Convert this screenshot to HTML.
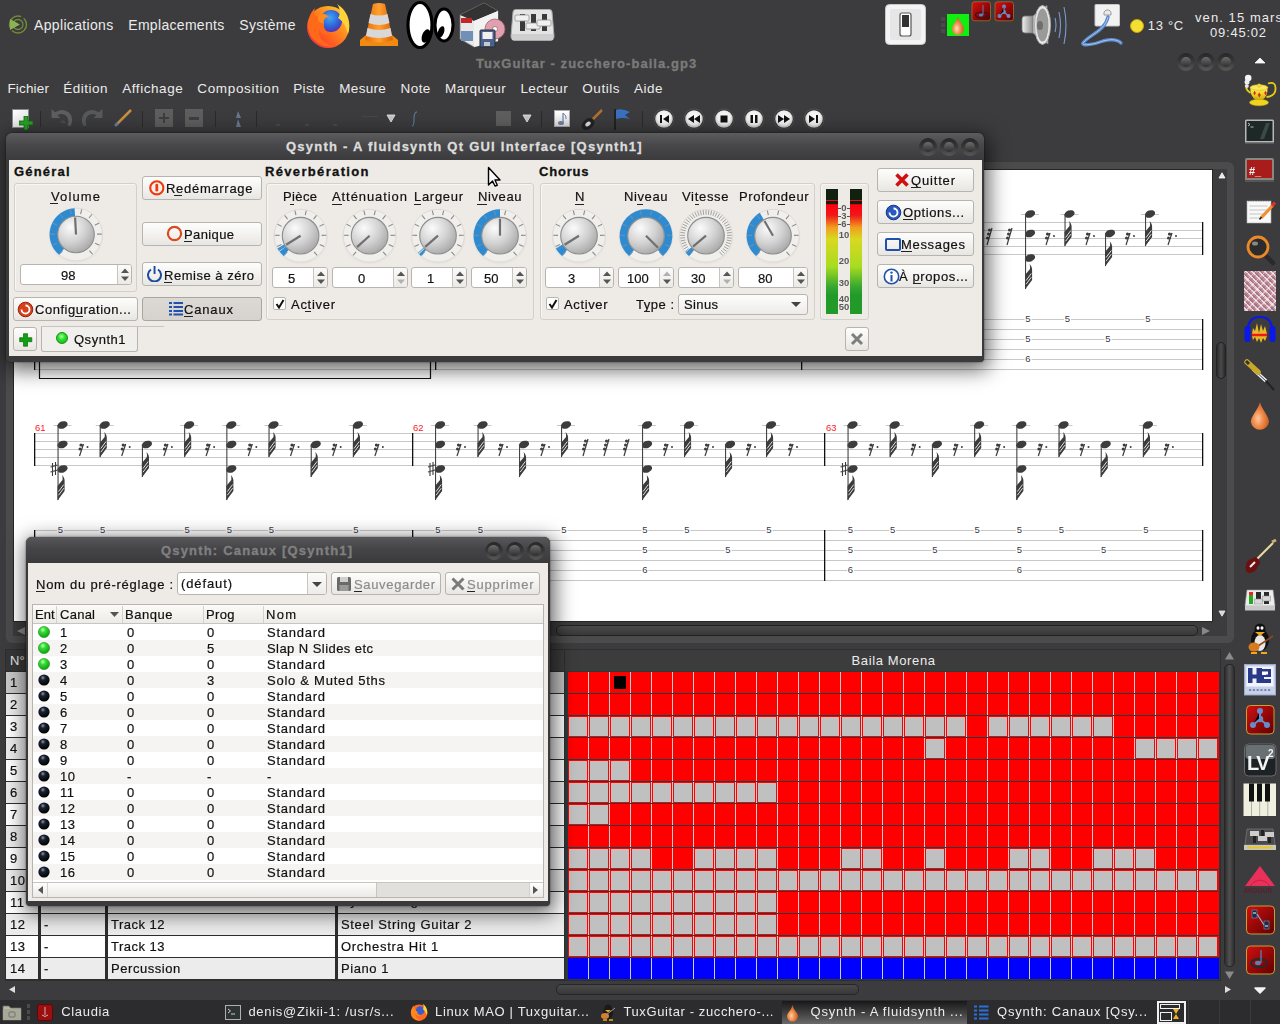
<!DOCTYPE html><html><head><meta charset="utf-8"><style>
*{margin:0;padding:0;box-sizing:border-box}
html,body{width:1280px;height:1024px;overflow:hidden;background:#3c3b3d;font-family:"Liberation Sans",sans-serif}
.a{position:absolute}
.t{position:absolute;white-space:nowrap;line-height:1}
</style></head><body>
<svg class="a" style="left:8px;top:15px" width="20" height="19" viewBox="0 0 20 19"><circle cx="10" cy="9.5" r="8.5" fill="none" stroke="#6f8a3a" stroke-width="1.5" stroke-dasharray="20 3"/><circle cx="10" cy="9.5" r="5" fill="none" stroke="#6f8a3a" stroke-width="1.3"/><path d="M2 4 L12 9.5 L2 15 Z" fill="#8db255"/></svg>
<div class="t" style="left:34px;top:18.15px;font-size:14px;color:#ebebeb;font-weight:400;letter-spacing:0.34px;">Applications</div>
<div class="t" style="left:128.25px;top:18.15px;font-size:14px;color:#ebebeb;font-weight:400;letter-spacing:0.31px;">Emplacements</div>
<div class="t" style="left:239.25px;top:18.15px;font-size:14px;color:#ebebeb;font-weight:400;letter-spacing:0.30px;">Système</div>
<svg class="a" style="left:305px;top:2px" width="46" height="46" viewBox="0 0 46 46">
<defs><linearGradient id="ffo" x1="0" y1="1" x2="1" y2="0"><stop offset="0" stop-color="#e8205a"/><stop offset="0.35" stop-color="#ff5a20"/><stop offset="0.7" stop-color="#ffa020"/><stop offset="1" stop-color="#ffe040"/></linearGradient>
<radialGradient id="ffb" cx="0.45" cy="0.35" r="0.7"><stop offset="0" stop-color="#40a8f0"/><stop offset="0.6" stop-color="#3060d8"/><stop offset="1" stop-color="#5a2ab0"/></radialGradient></defs>
<circle cx="23" cy="25" r="21" fill="url(#ffo)"/>
<circle cx="26" cy="19" r="11" fill="url(#ffb)"/>
<path d="M3 24 C4 38 16 46 28 44 C18 42 12 34 14 26 C16 32 22 35 28 32 C22 31 18 27 19 22 C15 22 12 18 13 14 C10 16 8 12 10 6 C6 10 3 16 3 24Z" fill="#ff6a1a"/>
<path d="M13 14 C16 10 22 12 24 15 C20 15 18 18 19 22 C15 22 12 18 13 14Z" fill="#ff8a20"/>
<path d="M32 2 C42 8 47 20 43 32 C41 24 38 19 33 16 C36 12 35 6 32 2Z" fill="#ffd23a"/>
</svg>
<svg class="a" style="left:358px;top:2px" width="42" height="46" viewBox="0 0 42 46">
<defs><linearGradient id="vl" x1="0" y1="0" x2="1" y2="0"><stop offset="0" stop-color="#e86a00"/><stop offset="0.5" stop-color="#ffa030"/><stop offset="1" stop-color="#e06000"/></linearGradient></defs>
<path d="M2 38 L8 33 L34 33 L40 38 L40 44 L2 44Z" fill="#f08a10"/>
<path d="M15 2 Q21 0 27 2 L35 38 Q21 43 7 38Z" fill="url(#vl)"/>
<path d="M12.5 12 Q21 15 29.5 12 L31.5 21 Q21 25 10.5 21Z" fill="#d8d8d8"/>
<path d="M9.5 26 Q21 30 32.5 26 L34 34 Q21 38 8 34Z" fill="#d8d8d8"/>
</svg>
<svg class="a" style="left:406px;top:0px" width="49" height="50" viewBox="0 0 49 50">
<ellipse cx="14" cy="25" rx="12" ry="22.5" fill="#fff" stroke="#000" stroke-width="3.2"/>
<ellipse cx="38" cy="25" rx="9" ry="16" fill="#fff" stroke="#000" stroke-width="3"/>
<ellipse cx="20" cy="36" rx="4" ry="7" fill="#000" transform="rotate(20 20 36)"/>
<ellipse cx="35" cy="32" rx="3" ry="6" fill="#000" transform="rotate(20 35 32)"/>
</svg>
<svg class="a" style="left:458px;top:1px" width="48" height="47" viewBox="0 0 48 47">
<path d="M2 14 L26 2 L40 10 L40 40 L16 46 L2 38Z" fill="#e8e8e8" stroke="#777" stroke-width="0.8"/>
<path d="M2 14 L26 2 L40 10 L16 20Z" fill="#333"/>
<path d="M16 20 L40 10 L40 40 L16 46Z" fill="#f2f2f2"/>
<rect x="3" y="17" width="11" height="5" fill="#c02828"/>
<rect x="3" y="30" width="12" height="10" fill="#7090b8"/>
<circle cx="37" cy="28" r="10" fill="#e0a0b0" stroke="#a06070" stroke-width="0.8"/>
<circle cx="37" cy="28" r="2.5" fill="#fff" stroke="#805060" stroke-width="0.6"/>
<rect x="22" y="29" width="15" height="17" rx="1" fill="#4a6090" stroke="#233"/>
<rect x="24.5" y="31" width="10" height="7" fill="#f0f0f0"/><rect x="26" y="41" width="6" height="4" fill="#c8c8c8"/>
</svg>
<svg class="a" style="left:510px;top:9px" width="45" height="32" viewBox="0 0 45 32">
<path d="M3 3 Q3 0.5 6 0.5 L39 0.5 Q42 0.5 42 3 L44 27 Q44 31.5 40 31.5 L5 31.5 Q1 31.5 1 27Z" fill="#e4e4e4" stroke="#a8a8a8" stroke-width="1"/>
<rect x="10" y="5" width="5" height="17" fill="#3a3a3a"/><rect x="21" y="5" width="5" height="17" fill="#3a3a3a"/><rect x="32" y="5" width="5" height="17" fill="#3a3a3a"/>
<rect x="5" y="6" width="14" height="6" rx="1" fill="#f0f0f0" stroke="#909090" stroke-width="0.8"/><rect x="16" y="14" width="14" height="6" rx="1" fill="#f0f0f0" stroke="#909090" stroke-width="0.8"/><rect x="27" y="11" width="14" height="6" rx="1" fill="#f0f0f0" stroke="#909090" stroke-width="0.8"/>
<rect x="2" y="25" width="41" height="6" fill="#cfcfcf"/>
</svg>
<svg class="a" style="left:885px;top:4px" width="41" height="41" viewBox="0 0 41 41">
<rect x="0.5" y="0.5" width="40" height="40" rx="4" fill="#f4f4f4" stroke="#c8c8c8"/>
<rect x="5" y="5" width="31" height="31" rx="2" fill="#e6e6e6"/>
<rect x="15" y="9" width="11" height="23" rx="2" fill="#fff" stroke="#555" stroke-width="1.2"/>
<rect x="17" y="11" width="7" height="12" fill="#333"/>
</svg>
<div class="a" style="left:941px;top:17px;width:4px;height:4px;background:#4a4a4a"></div>
<div class="a" style="left:941px;top:23px;width:4px;height:4px;background:#4a4a4a"></div>
<div class="a" style="left:941px;top:29px;width:4px;height:4px;background:#4a4a4a"></div>
<svg class="a" style="left:947px;top:14px" width="22" height="22" viewBox="0 0 22 22"><defs><radialGradient id="pdr" cx="0.4" cy="0.65" r="0.6"><stop offset="0" stop-color="#ffe0c0"/><stop offset="0.45" stop-color="#f4945a"/><stop offset="1" stop-color="#c86024"/></radialGradient></defs><rect width="22" height="22" fill="#10f010"/>
<path d="M11 2.5 C12.5 8 17 11 17 15 A6 6 0 0 1 5 15 C5 11 9.5 8 11 2.5Z" fill="url(#pdr)"/></svg>
<svg class="a" style="left:971px;top:1px" width="44" height="21" viewBox="0 0 44 21"><defs><linearGradient id="prg" x1="0" y1="0" x2="1" y2="1"><stop offset="0" stop-color="#d81010"/><stop offset="1" stop-color="#5a0000"/></linearGradient></defs>
<rect x="1" y="0.8" width="18.5" height="19" rx="2.5" fill="url(#prg)" stroke="#a08030" stroke-width="0.7"/>
<ellipse cx="10.5" cy="14" rx="6" ry="3" fill="none" stroke="#2a1a1a" stroke-width="1.2"/><ellipse cx="10" cy="14" rx="2.2" ry="1.6" fill="#5a80b8"/><path d="M12 4v10" stroke="#5a80b8" stroke-width="1"/>
<rect x="24" y="0.8" width="18.5" height="19" rx="2.5" fill="url(#prg)" stroke="#a08030" stroke-width="0.7"/>
<circle cx="33" cy="5.5" r="2" fill="#6a8ac8"/><circle cx="33" cy="11" r="2" fill="#6a8ac8"/><circle cx="28.5" cy="15" r="2" fill="#6a8ac8"/><circle cx="37.5" cy="15" r="2" fill="#6a8ac8"/><path d="M33 5.5v5.5l-4.5 4M33 11l4.5 4" stroke="#6a8ac8" stroke-width="1.2"/>
</svg>
<svg class="a" style="left:1020px;top:4px" width="50" height="42" viewBox="0 0 50 42"><defs><linearGradient id="spk" x1="0" y1="0" x2="1" y2="0"><stop offset="0" stop-color="#f0f0f0"/><stop offset="1" stop-color="#8a8a8a"/></linearGradient></defs>
<path d="M2 15 Q2 12 5 12 L13 12 L13 29 L5 29 Q2 29 2 26Z" fill="url(#spk)" stroke="#777" stroke-width="0.8"/>
<path d="M13 12 L27 1.5 L28 40 L13 29Z" fill="#c8c8c8" stroke="#888" stroke-width="0.8"/>
<ellipse cx="22.5" cy="21" rx="8" ry="19.5" fill="#e8e8e8" stroke="#aaa" stroke-width="1"/>
<ellipse cx="22.5" cy="21" rx="6" ry="16.5" fill="#9a9a98"/>
<ellipse cx="20" cy="21.5" rx="3" ry="4.5" fill="#6e6e6c"/>
<path d="M35 14 Q37 21 35 28" stroke="#7a9ad0" stroke-width="1.1" fill="none"/>
<path d="M39 8 Q42 21 39 34" stroke="#7a9ad0" stroke-width="1.1" fill="none"/>
<path d="M44 3 Q48 21 44 40" stroke="#7a9ad0" stroke-width="1.1" fill="none"/>
</svg>
<svg class="a" style="left:1079px;top:3px" width="48" height="44" viewBox="0 0 48 44">
<rect x="16" y="1.5" width="24.5" height="21.5" rx="1" fill="#f2f2f2" stroke="#c8c8c8"/>
<path d="M25 12 L25 9 L27 7 L30 7 L32 9 L32 12Z" fill="#e8e8e8" stroke="#888" stroke-width="0.8"/>
<path d="M29 14 C26 28 10 32 4 40 C2 43 14 42 24 38 C32 36 38 36 42 40" stroke="#5a88c8" stroke-width="3.4" fill="none" stroke-linecap="round"/>
<path d="M29 14 C26 28 10 32 4 40 C2 43 14 42 24 38 C32 36 38 36 42 40" stroke="#a8c8f0" stroke-width="1" fill="none"/>
</svg>
<svg class="a" style="left:1130px;top:19px" width="14" height="14" viewBox="0 0 14 14"><circle cx="7" cy="7" r="6.5" fill="#f4e030" stroke="#c8a010" stroke-width="1"/></svg>
<div class="t" style="left:1147.7px;top:19.0px;font-size:13px;color:#ebebeb;font-weight:400;letter-spacing:0.71px;">13 °C</div>
<div class="t" style="left:1195px;top:11.0px;font-size:13px;color:#ebebeb;font-weight:400;letter-spacing:1.08px;">ven. 15 mars</div>
<div class="t" style="left:1210px;top:26.0px;font-size:13px;color:#ebebeb;font-weight:400;letter-spacing:0.77px;">09:45:02</div>
<div class="t" style="left:476px;top:56.81px;font-size:13px;color:#7b7b7b;font-weight:700;letter-spacing:1.05px;-webkit-text-stroke:0.3px #7b7b7b">TuxGuitar - zucchero-baila.gp3</div>
<div class="a" style="left:1177px;top:53px;width:18px;height:18px;border-radius:50%;background:linear-gradient(#262626,#3a3a3a 50%,#5a5a5a)"></div>
<div class="a" style="left:1180.7px;top:56.7px;width:10.6px;height:10.6px;border-radius:50%;background:linear-gradient(#6c6c6c,#2e2e2e)"></div>
<div class="a" style="left:1197px;top:53px;width:18px;height:18px;border-radius:50%;background:linear-gradient(#262626,#3a3a3a 50%,#5a5a5a)"></div>
<div class="a" style="left:1200.7px;top:56.7px;width:10.6px;height:10.6px;border-radius:50%;background:linear-gradient(#6c6c6c,#2e2e2e)"></div>
<div class="a" style="left:1217px;top:53px;width:18px;height:18px;border-radius:50%;background:linear-gradient(#262626,#3a3a3a 50%,#5a5a5a)"></div>
<div class="a" style="left:1220.7px;top:56.7px;width:10.6px;height:10.6px;border-radius:50%;background:linear-gradient(#6c6c6c,#2e2e2e)"></div>
<div class="t" style="left:7.4px;top:81.57px;font-size:13.5px;color:#ececec;font-weight:400;letter-spacing:0.17px;">Fichier</div>
<div class="t" style="left:63.2px;top:81.57px;font-size:13.5px;color:#ececec;font-weight:400;letter-spacing:0.52px;">Édition</div>
<div class="t" style="left:122.2px;top:81.57px;font-size:13.5px;color:#ececec;font-weight:400;letter-spacing:0.56px;">Affichage</div>
<div class="t" style="left:197.3px;top:81.57px;font-size:13.5px;color:#ececec;font-weight:400;letter-spacing:0.66px;">Composition</div>
<div class="t" style="left:293.2px;top:81.57px;font-size:13.5px;color:#ececec;font-weight:400;letter-spacing:0.35px;">Piste</div>
<div class="t" style="left:339.3px;top:81.57px;font-size:13.5px;color:#ececec;font-weight:400;letter-spacing:0.30px;">Mesure</div>
<div class="t" style="left:400.4px;top:81.57px;font-size:13.5px;color:#ececec;font-weight:400;letter-spacing:0.49px;">Note</div>
<div class="t" style="left:445px;top:81.57px;font-size:13.5px;color:#ececec;font-weight:400;letter-spacing:0.43px;">Marqueur</div>
<div class="t" style="left:520.4px;top:81.57px;font-size:13.5px;color:#ececec;font-weight:400;letter-spacing:0.38px;">Lecteur</div>
<div class="t" style="left:582.3px;top:81.57px;font-size:13.5px;color:#ececec;font-weight:400;letter-spacing:0.54px;">Outils</div>
<div class="t" style="left:634.1px;top:81.57px;font-size:13.5px;color:#ececec;font-weight:400;letter-spacing:0.46px;">Aide</div>
<div class="a" style="left:12px;top:109px;width:17px;height:19px;background:linear-gradient(135deg,#fff,#ddd);border:1px solid #888"></div>
<svg class="a" style="left:19px;top:116px" width="14" height="14"><path d="M5 0h4v5h5v4H9v5H5V9H0V5h5z" fill="#2aa02a" stroke="#0a6a0a" stroke-width="0.8"/></svg>
<div class="a" style="left:40px;top:111px;width:1px;height:16px;background:#2a2a2a"></div>
<div class="a" style="left:142px;top:111px;width:1px;height:16px;background:#2a2a2a"></div>
<div class="a" style="left:215px;top:111px;width:1px;height:16px;background:#2a2a2a"></div>
<div class="a" style="left:256px;top:111px;width:1px;height:16px;background:#2a2a2a"></div>
<div class="a" style="left:541px;top:111px;width:1px;height:16px;background:#2a2a2a"></div>
<div class="a" style="left:642px;top:111px;width:1px;height:16px;background:#2a2a2a"></div>
<svg class="a" style="left:51px;top:108px" width="22" height="19"><path d="M0.5 1 L0.5 10 L9.5 10 L6.5 7.2 Q11 4.5 15 7.5 Q19 11.5 16.5 17.5 L19.5 18 Q23.5 10 18 4.5 Q12 -0.5 4.2 4.2 Z" fill="#5e5e5e"/><path d="M9 13.5 Q12 11 14 13.5 L15 16 Q13 15 11 15.5Z" fill="#4a4a4a"/></svg>
<svg class="a" style="left:81px;top:108px" width="22" height="19"><g transform="translate(22 0) scale(-1 1)"><path d="M0.5 1 L0.5 10 L9.5 10 L6.5 7.2 Q11 4.5 15 7.5 Q19 11.5 16.5 17.5 L19.5 18 Q23.5 10 18 4.5 Q12 -0.5 4.2 4.2 Z" fill="#575a5a"/></g></svg>
<svg class="a" style="left:114px;top:108px" width="19" height="19"><path d="M2 17 L17 2" stroke="#c89040" stroke-width="2.5"/><path d="M1 18 L4 15" stroke="#6080b0" stroke-width="2.5"/></svg>
<div class="a" style="left:155px;top:109px;width:18px;height:18px;background:#5e5e5e"></div>
<div class="a" style="left:185px;top:109px;width:18px;height:18px;background:#5e5e5e"></div>
<svg class="a" style="left:158px;top:112px" width="12" height="12"><path d="M5 1h2v4h4v2H7v4H5V7H1V5h4z" fill="#3e3e3e"/></svg>
<div class="a" style="left:189px;top:117px;width:10px;height:3px;background:#3e3e3e"></div>
<svg class="a" style="left:232px;top:110px" width="12" height="18"><path d="M6 1 L9 8 L4 8Z M6 9 L9 17 L4 17Z" fill="#6a7890"/></svg>
<div class="a" style="left:276px;top:124px;width:4px;height:2px;background:#4a4a4a"></div>
<div class="a" style="left:305px;top:124px;width:4px;height:2px;background:#4a4a4a"></div>
<div class="a" style="left:333px;top:124px;width:4px;height:2px;background:#4a4a4a"></div>
<div class="a" style="left:362px;top:116px;width:16px;height:1px;background:#474747"></div>
<svg class="a" style="left:386px;top:114px" width="10" height="9"><path d="M1 1 L9 1 L5 8Z" fill="#c4c4c4" stroke="#e0e0e0" stroke-width="0.9" stroke-linejoin="round"/></svg>
<svg class="a" style="left:522px;top:114px" width="10" height="9"><path d="M1 1 L9 1 L5 8Z" fill="#c4c4c4" stroke="#e0e0e0" stroke-width="0.9" stroke-linejoin="round"/></svg>
<svg class="a" style="left:411px;top:111px" width="8" height="16"><path d="M6 1 Q3 1 3 8 Q3 15 1 15" stroke="#5a7090" stroke-width="1.3" fill="none"/></svg>
<div class="a" style="left:496px;top:111px;width:15px;height:15px;background:#5e5e5e"></div>
<div class="a" style="left:554px;top:110px;width:16px;height:17px;background:linear-gradient(#fff,#ddd);border:1px solid #aaa"></div>
<svg class="a" style="left:555px;top:111px" width="14" height="15"><path d="M8 2 L8 12" stroke="#7080a8" stroke-width="1.2"/><ellipse cx="6" cy="12" rx="3" ry="2" fill="#7080a8"/><path d="M8 2 Q12 5 11 8" stroke="#7080a8" fill="none"/></svg>
<svg class="a" style="left:580px;top:108px" width="24" height="22"><path d="M10 14 L22 2" stroke="#b07030" stroke-width="2.5"/><ellipse cx="8" cy="16" rx="7" ry="5" fill="#222" transform="rotate(-40 8 16)"/><ellipse cx="8" cy="16" rx="3" ry="2" fill="#ddd" transform="rotate(-40 8 16)"/></svg>
<svg class="a" style="left:613px;top:108px" width="18" height="22"><path d="M2 1 L2 22" stroke="#222" stroke-width="2"/><path d="M3 2 Q9 0 17 4 L12 7 L17 11 Q9 9 3 11Z" fill="#3a70c0"/></svg>
<svg class="a" style="left:653px;top:108px" width="22" height="22" viewBox="-1 -1 22 22"><defs><radialGradient id="tb0" cx="0.5" cy="0.45" r="0.55"><stop offset="0" stop-color="#ffffff"/><stop offset="0.7" stop-color="#f0f0f0"/><stop offset="1" stop-color="#b8b8b8"/></radialGradient></defs><circle cx="10" cy="10" r="10.6" fill="#4e4e4e"/><circle cx="10" cy="10" r="9.6" fill="#2e2e2e"/><circle cx="10" cy="10" r="8.8" fill="url(#tb0)"/><path d="M6 6h2v8H6z M15 6 L9 10 L15 14Z" fill="#111"/></svg>
<svg class="a" style="left:683px;top:108px" width="22" height="22" viewBox="-1 -1 22 22"><defs><radialGradient id="tb1" cx="0.5" cy="0.45" r="0.55"><stop offset="0" stop-color="#ffffff"/><stop offset="0.7" stop-color="#f0f0f0"/><stop offset="1" stop-color="#b8b8b8"/></radialGradient></defs><circle cx="10" cy="10" r="10.6" fill="#4e4e4e"/><circle cx="10" cy="10" r="9.6" fill="#2e2e2e"/><circle cx="10" cy="10" r="8.8" fill="url(#tb1)"/><path d="M10 6 L4 10 L10 14Z M16 6 L10 10 L16 14Z" fill="#111"/></svg>
<svg class="a" style="left:713px;top:108px" width="22" height="22" viewBox="-1 -1 22 22"><defs><radialGradient id="tb2" cx="0.5" cy="0.45" r="0.55"><stop offset="0" stop-color="#ffffff"/><stop offset="0.7" stop-color="#f0f0f0"/><stop offset="1" stop-color="#b8b8b8"/></radialGradient></defs><circle cx="10" cy="10" r="10.6" fill="#4e4e4e"/><circle cx="10" cy="10" r="9.6" fill="#2e2e2e"/><circle cx="10" cy="10" r="8.8" fill="url(#tb2)"/><rect x="6.5" y="6.5" width="7" height="7" fill="#111"/></svg>
<svg class="a" style="left:743px;top:108px" width="22" height="22" viewBox="-1 -1 22 22"><defs><radialGradient id="tb3" cx="0.5" cy="0.45" r="0.55"><stop offset="0" stop-color="#ffffff"/><stop offset="0.7" stop-color="#f0f0f0"/><stop offset="1" stop-color="#b8b8b8"/></radialGradient></defs><circle cx="10" cy="10" r="10.6" fill="#4e4e4e"/><circle cx="10" cy="10" r="9.6" fill="#2e2e2e"/><circle cx="10" cy="10" r="8.8" fill="url(#tb3)"/><path d="M6.5 6h2.5v8H6.5z M11 6h2.5v8H11z" fill="#111"/></svg>
<svg class="a" style="left:773px;top:108px" width="22" height="22" viewBox="-1 -1 22 22"><defs><radialGradient id="tb4" cx="0.5" cy="0.45" r="0.55"><stop offset="0" stop-color="#ffffff"/><stop offset="0.7" stop-color="#f0f0f0"/><stop offset="1" stop-color="#b8b8b8"/></radialGradient></defs><circle cx="10" cy="10" r="10.6" fill="#4e4e4e"/><circle cx="10" cy="10" r="9.6" fill="#2e2e2e"/><circle cx="10" cy="10" r="8.8" fill="url(#tb4)"/><path d="M4 6 L10 10 L4 14Z M10 6 L16 10 L10 14Z" fill="#111"/></svg>
<svg class="a" style="left:803px;top:108px" width="22" height="22" viewBox="-1 -1 22 22"><defs><radialGradient id="tb5" cx="0.5" cy="0.45" r="0.55"><stop offset="0" stop-color="#ffffff"/><stop offset="0.7" stop-color="#f0f0f0"/><stop offset="1" stop-color="#b8b8b8"/></radialGradient></defs><circle cx="10" cy="10" r="10.6" fill="#4e4e4e"/><circle cx="10" cy="10" r="9.6" fill="#2e2e2e"/><circle cx="10" cy="10" r="8.8" fill="url(#tb5)"/><path d="M5 6 L11 10 L5 14Z M12 6h2v8h-2z" fill="#111"/></svg>
<div class="a" style="left:6px;top:162px;width:1228px;height:481px;background:#4b4b4b;border-radius:6px"></div>
<div class="a" style="left:13px;top:169px;width:1214px;height:467px;background:#3c3b3d"></div>
<div class="a" style="left:13px;top:169px;width:1200px;height:453px;background:#262626"></div>
<div class="a" style="left:14px;top:170px;width:1198px;height:451px;background:#fff"></div>
<svg class="a" style="left:1218px;top:172px" width="8" height="7"><path d="M1 6 L4 0.8 L7 6Z" fill="#e8e8e8" stroke="#fff" stroke-width="0.8"/></svg>
<svg class="a" style="left:1218px;top:610px" width="8" height="7"><path d="M1 1 L4 6.2 L7 1Z" fill="#d8d8d8" stroke="#eee" stroke-width="0.8"/></svg>
<div class="a" style="left:1216px;top:342px;width:10px;height:37px;border-radius:5px;background:linear-gradient(90deg,#2a2a2a,#4a4a4a 50%,#2a2a2a);border:1px solid #222"></div>
<svg class="a" style="left:16px;top:626px" width="10" height="10"><path d="M9 1 L1 5 L9 9Z" fill="#888"/></svg>
<svg class="a" style="left:1201px;top:626px" width="10" height="10"><path d="M1 1 L9 5 L1 9Z" fill="#888"/></svg>
<div class="a" style="left:556px;top:625px;width:642px;height:11px;border-radius:5px;background:linear-gradient(#4a4a4a,#383838);border:1px solid #222"></div>
<svg class="a" style="left:0;top:0" width="1280" height="1024"><rect x="34" y="433" width="1169" height="1" fill="#c8c8c8"/><rect x="34" y="441" width="1169" height="1" fill="#c8c8c8"/><rect x="34" y="449" width="1169" height="1" fill="#c8c8c8"/><rect x="34" y="457" width="1169" height="1" fill="#c8c8c8"/><rect x="34" y="465" width="1169" height="1" fill="#c8c8c8"/><rect x="34" y="530" width="1169" height="1" fill="#c8c8c8"/><rect x="34" y="540" width="1169" height="1" fill="#c8c8c8"/><rect x="34" y="550" width="1169" height="1" fill="#c8c8c8"/><rect x="34" y="560" width="1169" height="1" fill="#c8c8c8"/><rect x="34" y="570" width="1169" height="1" fill="#c8c8c8"/><rect x="34" y="580" width="1169" height="1" fill="#c8c8c8"/><rect x="34" y="433" width="1.3" height="33" fill="#111"/><rect x="34" y="530" width="1.3" height="51" fill="#111"/><rect x="412" y="433" width="1.3" height="33" fill="#111"/><rect x="412" y="530" width="1.3" height="51" fill="#111"/><rect x="824" y="433" width="1.3" height="33" fill="#111"/><rect x="824" y="530" width="1.3" height="51" fill="#111"/><rect x="1202" y="433" width="1.3" height="33" fill="#111"/><rect x="1202" y="530" width="1.3" height="51" fill="#111"/><rect x="53.5" y="425" width="18" height="1" fill="#c8c8c8"/><ellipse cx="62.5" cy="425" rx="5.3" ry="3.6" transform="rotate(-20 62.5 425)" fill="#3c3c3c"/><ellipse cx="62.5" cy="444.5" rx="5.3" ry="3.6" transform="rotate(-20 62.5 444.5)" fill="#3c3c3c"/><ellipse cx="62.5" cy="469" rx="5.3" ry="3.6" transform="rotate(-20 62.5 469)" fill="#3c3c3c"/><path d="M52.5 463 L52.5 476 M55.5 462 L55.5 475 M50.5 467 L57.5 465 M50.5 472 L57.5 470" stroke="#3c3c3c" stroke-width="1.1"/><rect x="57.5" y="425" width="1.1" height="75" fill="#444"/><path d="M57.5 486 L62.5 480 Q63.0 477 62.0 475 Q65.0 478 64.6 482 L64.6 491 L57.5 500.5Z" fill="#3c3c3c"/><path d="M58.6 491.5 L63.8 484.5 M58.6 495.2 L63.8 488.2" stroke="#fff" stroke-width="0.85"/><rect x="57.0" y="526" width="7" height="8" fill="#fff"/><text x="60.5" y="533.3" font-size="9.5" text-anchor="middle" fill="#3a3a4a" font-family="Liberation Sans">5</text><rect x="57.0" y="546" width="7" height="8" fill="#fff"/><text x="60.5" y="553.3" font-size="9.5" text-anchor="middle" fill="#3a3a4a" font-family="Liberation Sans">5</text><rect x="57.0" y="566" width="7" height="8" fill="#fff"/><text x="60.5" y="573.3" font-size="9.5" text-anchor="middle" fill="#3a3a4a" font-family="Liberation Sans">6</text><path d="M83.5 444 L79.5 456" stroke="#3c3c3c" stroke-width="1.2"/><circle cx="81.0" cy="445" r="1.6" fill="#3c3c3c"/><path d="M80.5 445.5 Q82.5 447 83.5 444" stroke="#3c3c3c" fill="none"/><circle cx="80.0" cy="449" r="1.5" fill="#3c3c3c"/><circle cx="87.5" cy="447" r="1" fill="#3c3c3c"/><rect x="95.7" y="425" width="18" height="1" fill="#c8c8c8"/><ellipse cx="104.7" cy="425" rx="5.3" ry="3.6" transform="rotate(-20 104.7 425)" fill="#3c3c3c"/><rect x="99.7" y="425" width="1.1" height="32" fill="#444"/><path d="M99.7 443 L104.7 437 Q105.2 434 104.2 432 Q107.2 435 106.8 439 L106.8 448 L99.7 457.5Z" fill="#3c3c3c"/><path d="M100.8 448.5 L106.0 441.5 M100.8 452.2 L106.0 445.2" stroke="#fff" stroke-width="0.85"/><rect x="99.2" y="526" width="7" height="8" fill="#fff"/><text x="102.7" y="533.3" font-size="9.5" text-anchor="middle" fill="#3a3a4a" font-family="Liberation Sans">5</text><path d="M125.7 444 L121.7 456" stroke="#3c3c3c" stroke-width="1.2"/><circle cx="123.2" cy="445" r="1.6" fill="#3c3c3c"/><path d="M122.7 445.5 Q124.7 447 125.7 444" stroke="#3c3c3c" fill="none"/><circle cx="122.2" cy="449" r="1.5" fill="#3c3c3c"/><circle cx="129.7" cy="447" r="1" fill="#3c3c3c"/><ellipse cx="146.9" cy="444.5" rx="5.3" ry="3.6" transform="rotate(-20 146.9 444.5)" fill="#3c3c3c"/><rect x="141.9" y="444.5" width="1.1" height="32.5" fill="#444"/><path d="M141.9 463 L146.9 457 Q147.4 454 146.4 452 Q149.4 455 149.0 459 L149.0 468 L141.9 477.5Z" fill="#3c3c3c"/><path d="M143.0 468.5 L148.20000000000002 461.5 M143.0 472.2 L148.20000000000002 465.2" stroke="#fff" stroke-width="0.85"/><rect x="141.4" y="546" width="7" height="8" fill="#fff"/><text x="144.9" y="553.3" font-size="9.5" text-anchor="middle" fill="#3a3a4a" font-family="Liberation Sans">5</text><path d="M167.9 444 L163.9 456" stroke="#3c3c3c" stroke-width="1.2"/><circle cx="165.4" cy="445" r="1.6" fill="#3c3c3c"/><path d="M164.9 445.5 Q166.9 447 167.9 444" stroke="#3c3c3c" fill="none"/><circle cx="164.4" cy="449" r="1.5" fill="#3c3c3c"/><circle cx="171.9" cy="447" r="1" fill="#3c3c3c"/><rect x="180.10000000000002" y="425" width="18" height="1" fill="#c8c8c8"/><ellipse cx="189.10000000000002" cy="425" rx="5.3" ry="3.6" transform="rotate(-20 189.10000000000002 425)" fill="#3c3c3c"/><rect x="184.10000000000002" y="425" width="1.1" height="32" fill="#444"/><path d="M184.10000000000002 443 L189.10000000000002 437 Q189.60000000000002 434 188.60000000000002 432 Q191.60000000000002 435 191.20000000000002 439 L191.20000000000002 448 L184.10000000000002 457.5Z" fill="#3c3c3c"/><path d="M185.20000000000002 448.5 L190.40000000000003 441.5 M185.20000000000002 452.2 L190.40000000000003 445.2" stroke="#fff" stroke-width="0.85"/><rect x="183.60000000000002" y="526" width="7" height="8" fill="#fff"/><text x="187.10000000000002" y="533.3" font-size="9.5" text-anchor="middle" fill="#3a3a4a" font-family="Liberation Sans">5</text><path d="M210.10000000000002 444 L206.10000000000002 456" stroke="#3c3c3c" stroke-width="1.2"/><circle cx="207.60000000000002" cy="445" r="1.6" fill="#3c3c3c"/><path d="M207.10000000000002 445.5 Q209.10000000000002 447 210.10000000000002 444" stroke="#3c3c3c" fill="none"/><circle cx="206.60000000000002" cy="449" r="1.5" fill="#3c3c3c"/><circle cx="214.10000000000002" cy="447" r="1" fill="#3c3c3c"/><rect x="222.3" y="425" width="18" height="1" fill="#c8c8c8"/><ellipse cx="231.3" cy="425" rx="5.3" ry="3.6" transform="rotate(-20 231.3 425)" fill="#3c3c3c"/><ellipse cx="231.3" cy="444.5" rx="5.3" ry="3.6" transform="rotate(-20 231.3 444.5)" fill="#3c3c3c"/><ellipse cx="231.3" cy="469" rx="5.3" ry="3.6" transform="rotate(-20 231.3 469)" fill="#3c3c3c"/><rect x="226.3" y="425" width="1.1" height="75" fill="#444"/><path d="M226.3 486 L231.3 480 Q231.8 477 230.8 475 Q233.8 478 233.4 482 L233.4 491 L226.3 500.5Z" fill="#3c3c3c"/><path d="M227.4 491.5 L232.60000000000002 484.5 M227.4 495.2 L232.60000000000002 488.2" stroke="#fff" stroke-width="0.85"/><rect x="225.8" y="526" width="7" height="8" fill="#fff"/><text x="229.3" y="533.3" font-size="9.5" text-anchor="middle" fill="#3a3a4a" font-family="Liberation Sans">5</text><rect x="225.8" y="546" width="7" height="8" fill="#fff"/><text x="229.3" y="553.3" font-size="9.5" text-anchor="middle" fill="#3a3a4a" font-family="Liberation Sans">5</text><rect x="225.8" y="566" width="7" height="8" fill="#fff"/><text x="229.3" y="573.3" font-size="9.5" text-anchor="middle" fill="#3a3a4a" font-family="Liberation Sans">6</text><path d="M252.3 444 L248.3 456" stroke="#3c3c3c" stroke-width="1.2"/><circle cx="249.8" cy="445" r="1.6" fill="#3c3c3c"/><path d="M249.3 445.5 Q251.3 447 252.3 444" stroke="#3c3c3c" fill="none"/><circle cx="248.8" cy="449" r="1.5" fill="#3c3c3c"/><circle cx="256.3" cy="447" r="1" fill="#3c3c3c"/><rect x="264.5" y="425" width="18" height="1" fill="#c8c8c8"/><ellipse cx="273.5" cy="425" rx="5.3" ry="3.6" transform="rotate(-20 273.5 425)" fill="#3c3c3c"/><rect x="268.5" y="425" width="1.1" height="32" fill="#444"/><path d="M268.5 443 L273.5 437 Q274.0 434 273.0 432 Q276.0 435 275.6 439 L275.6 448 L268.5 457.5Z" fill="#3c3c3c"/><path d="M269.6 448.5 L274.8 441.5 M269.6 452.2 L274.8 445.2" stroke="#fff" stroke-width="0.85"/><rect x="268.0" y="526" width="7" height="8" fill="#fff"/><text x="271.5" y="533.3" font-size="9.5" text-anchor="middle" fill="#3a3a4a" font-family="Liberation Sans">5</text><path d="M294.5 444 L290.5 456" stroke="#3c3c3c" stroke-width="1.2"/><circle cx="292.0" cy="445" r="1.6" fill="#3c3c3c"/><path d="M291.5 445.5 Q293.5 447 294.5 444" stroke="#3c3c3c" fill="none"/><circle cx="291.0" cy="449" r="1.5" fill="#3c3c3c"/><circle cx="298.5" cy="447" r="1" fill="#3c3c3c"/><ellipse cx="315.70000000000005" cy="444.5" rx="5.3" ry="3.6" transform="rotate(-20 315.70000000000005 444.5)" fill="#3c3c3c"/><rect x="310.70000000000005" y="444.5" width="1.1" height="32.5" fill="#444"/><path d="M310.70000000000005 463 L315.70000000000005 457 Q316.20000000000005 454 315.20000000000005 452 Q318.20000000000005 455 317.80000000000007 459 L317.80000000000007 468 L310.70000000000005 477.5Z" fill="#3c3c3c"/><path d="M311.80000000000007 468.5 L317.00000000000006 461.5 M311.80000000000007 472.2 L317.00000000000006 465.2" stroke="#fff" stroke-width="0.85"/><rect x="310.20000000000005" y="546" width="7" height="8" fill="#fff"/><text x="313.70000000000005" y="553.3" font-size="9.5" text-anchor="middle" fill="#3a3a4a" font-family="Liberation Sans">5</text><path d="M336.70000000000005 444 L332.70000000000005 456" stroke="#3c3c3c" stroke-width="1.2"/><circle cx="334.20000000000005" cy="445" r="1.6" fill="#3c3c3c"/><path d="M333.70000000000005 445.5 Q335.70000000000005 447 336.70000000000005 444" stroke="#3c3c3c" fill="none"/><circle cx="333.20000000000005" cy="449" r="1.5" fill="#3c3c3c"/><circle cx="340.70000000000005" cy="447" r="1" fill="#3c3c3c"/><rect x="348.90000000000003" y="425" width="18" height="1" fill="#c8c8c8"/><ellipse cx="357.90000000000003" cy="425" rx="5.3" ry="3.6" transform="rotate(-20 357.90000000000003 425)" fill="#3c3c3c"/><rect x="352.90000000000003" y="425" width="1.1" height="32" fill="#444"/><path d="M352.90000000000003 443 L357.90000000000003 437 Q358.40000000000003 434 357.40000000000003 432 Q360.40000000000003 435 360.00000000000006 439 L360.00000000000006 448 L352.90000000000003 457.5Z" fill="#3c3c3c"/><path d="M354.00000000000006 448.5 L359.20000000000005 441.5 M354.00000000000006 452.2 L359.20000000000005 445.2" stroke="#fff" stroke-width="0.85"/><rect x="352.40000000000003" y="526" width="7" height="8" fill="#fff"/><text x="355.90000000000003" y="533.3" font-size="9.5" text-anchor="middle" fill="#3a3a4a" font-family="Liberation Sans">5</text><path d="M378.90000000000003 444 L374.90000000000003 456" stroke="#3c3c3c" stroke-width="1.2"/><circle cx="376.40000000000003" cy="445" r="1.6" fill="#3c3c3c"/><path d="M375.90000000000003 445.5 Q377.90000000000003 447 378.90000000000003 444" stroke="#3c3c3c" fill="none"/><circle cx="375.40000000000003" cy="449" r="1.5" fill="#3c3c3c"/><circle cx="382.90000000000003" cy="447" r="1" fill="#3c3c3c"/><rect x="431" y="425" width="18" height="1" fill="#c8c8c8"/><ellipse cx="440" cy="425" rx="5.3" ry="3.6" transform="rotate(-20 440 425)" fill="#3c3c3c"/><ellipse cx="440" cy="444.5" rx="5.3" ry="3.6" transform="rotate(-20 440 444.5)" fill="#3c3c3c"/><ellipse cx="440" cy="469" rx="5.3" ry="3.6" transform="rotate(-20 440 469)" fill="#3c3c3c"/><path d="M430 463 L430 476 M433 462 L433 475 M428 467 L435 465 M428 472 L435 470" stroke="#3c3c3c" stroke-width="1.1"/><rect x="435.0" y="425" width="1.1" height="75" fill="#444"/><path d="M435.0 486 L440.0 480 Q440.5 477 439.5 475 Q442.5 478 442.1 482 L442.1 491 L435.0 500.5Z" fill="#3c3c3c"/><path d="M436.1 491.5 L441.3 484.5 M436.1 495.2 L441.3 488.2" stroke="#fff" stroke-width="0.85"/><rect x="434.5" y="526" width="7" height="8" fill="#fff"/><text x="438" y="533.3" font-size="9.5" text-anchor="middle" fill="#3a3a4a" font-family="Liberation Sans">5</text><rect x="434.5" y="546" width="7" height="8" fill="#fff"/><text x="438" y="553.3" font-size="9.5" text-anchor="middle" fill="#3a3a4a" font-family="Liberation Sans">5</text><rect x="434.5" y="566" width="7" height="8" fill="#fff"/><text x="438" y="573.3" font-size="9.5" text-anchor="middle" fill="#3a3a4a" font-family="Liberation Sans">6</text><path d="M461 444 L457 456" stroke="#3c3c3c" stroke-width="1.2"/><circle cx="458.5" cy="445" r="1.6" fill="#3c3c3c"/><path d="M458 445.5 Q460 447 461 444" stroke="#3c3c3c" fill="none"/><circle cx="457.5" cy="449" r="1.5" fill="#3c3c3c"/><circle cx="465" cy="447" r="1" fill="#3c3c3c"/><rect x="473.5" y="425" width="18" height="1" fill="#c8c8c8"/><ellipse cx="482.5" cy="425" rx="5.3" ry="3.6" transform="rotate(-20 482.5 425)" fill="#3c3c3c"/><rect x="477.5" y="425" width="1.1" height="32" fill="#444"/><path d="M477.5 443 L482.5 437 Q483.0 434 482.0 432 Q485.0 435 484.6 439 L484.6 448 L477.5 457.5Z" fill="#3c3c3c"/><path d="M478.6 448.5 L483.8 441.5 M478.6 452.2 L483.8 445.2" stroke="#fff" stroke-width="0.85"/><rect x="477.0" y="526" width="7" height="8" fill="#fff"/><text x="480.5" y="533.3" font-size="9.5" text-anchor="middle" fill="#3a3a4a" font-family="Liberation Sans">5</text><path d="M503 444 L499 456" stroke="#3c3c3c" stroke-width="1.2"/><circle cx="500.5" cy="445" r="1.6" fill="#3c3c3c"/><path d="M500 445.5 Q502 447 503 444" stroke="#3c3c3c" fill="none"/><circle cx="499.5" cy="449" r="1.5" fill="#3c3c3c"/><circle cx="507" cy="447" r="1" fill="#3c3c3c"/><ellipse cx="524" cy="444.5" rx="5.3" ry="3.6" transform="rotate(-20 524 444.5)" fill="#3c3c3c"/><rect x="519.0" y="444.5" width="1.1" height="32.5" fill="#444"/><path d="M519.0 463 L524.0 457 Q524.5 454 523.5 452 Q526.5 455 526.1 459 L526.1 468 L519.0 477.5Z" fill="#3c3c3c"/><path d="M520.1 468.5 L525.3 461.5 M520.1 472.2 L525.3 465.2" stroke="#fff" stroke-width="0.85"/><rect x="518.5" y="546" width="7" height="8" fill="#fff"/><text x="522" y="553.3" font-size="9.5" text-anchor="middle" fill="#3a3a4a" font-family="Liberation Sans">5</text><path d="M545 444 L541 456" stroke="#3c3c3c" stroke-width="1.2"/><circle cx="542.5" cy="445" r="1.6" fill="#3c3c3c"/><path d="M542 445.5 Q544 447 545 444" stroke="#3c3c3c" fill="none"/><circle cx="541.5" cy="449" r="1.5" fill="#3c3c3c"/><circle cx="549" cy="447" r="1" fill="#3c3c3c"/><rect x="557" y="425" width="18" height="1" fill="#c8c8c8"/><ellipse cx="566" cy="425" rx="5.3" ry="3.6" transform="rotate(-20 566 425)" fill="#3c3c3c"/><rect x="561.0" y="425" width="1.1" height="32" fill="#444"/><path d="M561.0 443 L566.0 437 Q566.5 434 565.5 432 Q568.5 435 568.1 439 L568.1 448 L561.0 457.5Z" fill="#3c3c3c"/><path d="M562.1 448.5 L567.3 441.5 M562.1 452.2 L567.3 445.2" stroke="#fff" stroke-width="0.85"/><rect x="560.5" y="526" width="7" height="8" fill="#fff"/><text x="564" y="533.3" font-size="9.5" text-anchor="middle" fill="#3a3a4a" font-family="Liberation Sans">5</text><path d="M588 439 L583 456" stroke="#3c3c3c" stroke-width="1.2"/><circle cx="585.5" cy="441" r="1.5" fill="#3c3c3c"/><circle cx="584.5" cy="445" r="1.5" fill="#3c3c3c"/><circle cx="583.5" cy="449" r="1.5" fill="#3c3c3c"/><path d="M609 439 L604 456" stroke="#3c3c3c" stroke-width="1.2"/><circle cx="606.5" cy="441" r="1.5" fill="#3c3c3c"/><circle cx="605.5" cy="445" r="1.5" fill="#3c3c3c"/><circle cx="604.5" cy="449" r="1.5" fill="#3c3c3c"/><path d="M629 439 L624 456" stroke="#3c3c3c" stroke-width="1.2"/><circle cx="626.5" cy="441" r="1.5" fill="#3c3c3c"/><circle cx="625.5" cy="445" r="1.5" fill="#3c3c3c"/><circle cx="624.5" cy="449" r="1.5" fill="#3c3c3c"/><rect x="638" y="425" width="18" height="1" fill="#c8c8c8"/><ellipse cx="647" cy="425" rx="5.3" ry="3.6" transform="rotate(-20 647 425)" fill="#3c3c3c"/><ellipse cx="647" cy="444.5" rx="5.3" ry="3.6" transform="rotate(-20 647 444.5)" fill="#3c3c3c"/><ellipse cx="647" cy="469" rx="5.3" ry="3.6" transform="rotate(-20 647 469)" fill="#3c3c3c"/><rect x="642.0" y="425" width="1.1" height="75" fill="#444"/><path d="M642.0 486 L647.0 480 Q647.5 477 646.5 475 Q649.5 478 649.1 482 L649.1 491 L642.0 500.5Z" fill="#3c3c3c"/><path d="M643.1 491.5 L648.3 484.5 M643.1 495.2 L648.3 488.2" stroke="#fff" stroke-width="0.85"/><rect x="641.5" y="526" width="7" height="8" fill="#fff"/><text x="645" y="533.3" font-size="9.5" text-anchor="middle" fill="#3a3a4a" font-family="Liberation Sans">5</text><rect x="641.5" y="546" width="7" height="8" fill="#fff"/><text x="645" y="553.3" font-size="9.5" text-anchor="middle" fill="#3a3a4a" font-family="Liberation Sans">5</text><rect x="641.5" y="566" width="7" height="8" fill="#fff"/><text x="645" y="573.3" font-size="9.5" text-anchor="middle" fill="#3a3a4a" font-family="Liberation Sans">6</text><path d="M668 444 L664 456" stroke="#3c3c3c" stroke-width="1.2"/><circle cx="665.5" cy="445" r="1.6" fill="#3c3c3c"/><path d="M665 445.5 Q667 447 668 444" stroke="#3c3c3c" fill="none"/><circle cx="664.5" cy="449" r="1.5" fill="#3c3c3c"/><circle cx="672" cy="447" r="1" fill="#3c3c3c"/><rect x="680" y="425" width="18" height="1" fill="#c8c8c8"/><ellipse cx="689" cy="425" rx="5.3" ry="3.6" transform="rotate(-20 689 425)" fill="#3c3c3c"/><rect x="684.0" y="425" width="1.1" height="32" fill="#444"/><path d="M684.0 443 L689.0 437 Q689.5 434 688.5 432 Q691.5 435 691.1 439 L691.1 448 L684.0 457.5Z" fill="#3c3c3c"/><path d="M685.1 448.5 L690.3 441.5 M685.1 452.2 L690.3 445.2" stroke="#fff" stroke-width="0.85"/><rect x="683.5" y="526" width="7" height="8" fill="#fff"/><text x="687" y="533.3" font-size="9.5" text-anchor="middle" fill="#3a3a4a" font-family="Liberation Sans">5</text><path d="M709 444 L705 456" stroke="#3c3c3c" stroke-width="1.2"/><circle cx="706.5" cy="445" r="1.6" fill="#3c3c3c"/><path d="M706 445.5 Q708 447 709 444" stroke="#3c3c3c" fill="none"/><circle cx="705.5" cy="449" r="1.5" fill="#3c3c3c"/><circle cx="713" cy="447" r="1" fill="#3c3c3c"/><ellipse cx="730" cy="444.5" rx="5.3" ry="3.6" transform="rotate(-20 730 444.5)" fill="#3c3c3c"/><rect x="725.0" y="444.5" width="1.1" height="32.5" fill="#444"/><path d="M725.0 463 L730.0 457 Q730.5 454 729.5 452 Q732.5 455 732.1 459 L732.1 468 L725.0 477.5Z" fill="#3c3c3c"/><path d="M726.1 468.5 L731.3 461.5 M726.1 472.2 L731.3 465.2" stroke="#fff" stroke-width="0.85"/><rect x="724.5" y="546" width="7" height="8" fill="#fff"/><text x="728" y="553.3" font-size="9.5" text-anchor="middle" fill="#3a3a4a" font-family="Liberation Sans">5</text><path d="M751 444 L747 456" stroke="#3c3c3c" stroke-width="1.2"/><circle cx="748.5" cy="445" r="1.6" fill="#3c3c3c"/><path d="M748 445.5 Q750 447 751 444" stroke="#3c3c3c" fill="none"/><circle cx="747.5" cy="449" r="1.5" fill="#3c3c3c"/><circle cx="755" cy="447" r="1" fill="#3c3c3c"/><rect x="762" y="425" width="18" height="1" fill="#c8c8c8"/><ellipse cx="771" cy="425" rx="5.3" ry="3.6" transform="rotate(-20 771 425)" fill="#3c3c3c"/><rect x="766.0" y="425" width="1.1" height="32" fill="#444"/><path d="M766.0 443 L771.0 437 Q771.5 434 770.5 432 Q773.5 435 773.1 439 L773.1 448 L766.0 457.5Z" fill="#3c3c3c"/><path d="M767.1 448.5 L772.3 441.5 M767.1 452.2 L772.3 445.2" stroke="#fff" stroke-width="0.85"/><rect x="765.5" y="526" width="7" height="8" fill="#fff"/><text x="769" y="533.3" font-size="9.5" text-anchor="middle" fill="#3a3a4a" font-family="Liberation Sans">5</text><path d="M793 444 L789 456" stroke="#3c3c3c" stroke-width="1.2"/><circle cx="790.5" cy="445" r="1.6" fill="#3c3c3c"/><path d="M790 445.5 Q792 447 793 444" stroke="#3c3c3c" fill="none"/><circle cx="789.5" cy="449" r="1.5" fill="#3c3c3c"/><circle cx="797" cy="447" r="1" fill="#3c3c3c"/><rect x="843.5" y="425" width="18" height="1" fill="#c8c8c8"/><ellipse cx="852.5" cy="425" rx="5.3" ry="3.6" transform="rotate(-20 852.5 425)" fill="#3c3c3c"/><ellipse cx="852.5" cy="444.5" rx="5.3" ry="3.6" transform="rotate(-20 852.5 444.5)" fill="#3c3c3c"/><ellipse cx="852.5" cy="469" rx="5.3" ry="3.6" transform="rotate(-20 852.5 469)" fill="#3c3c3c"/><path d="M842.5 463 L842.5 476 M845.5 462 L845.5 475 M840.5 467 L847.5 465 M840.5 472 L847.5 470" stroke="#3c3c3c" stroke-width="1.1"/><rect x="847.5" y="425" width="1.1" height="75" fill="#444"/><path d="M847.5 486 L852.5 480 Q853.0 477 852.0 475 Q855.0 478 854.6 482 L854.6 491 L847.5 500.5Z" fill="#3c3c3c"/><path d="M848.6 491.5 L853.8 484.5 M848.6 495.2 L853.8 488.2" stroke="#fff" stroke-width="0.85"/><rect x="847.0" y="526" width="7" height="8" fill="#fff"/><text x="850.5" y="533.3" font-size="9.5" text-anchor="middle" fill="#3a3a4a" font-family="Liberation Sans">5</text><rect x="847.0" y="546" width="7" height="8" fill="#fff"/><text x="850.5" y="553.3" font-size="9.5" text-anchor="middle" fill="#3a3a4a" font-family="Liberation Sans">5</text><rect x="847.0" y="566" width="7" height="8" fill="#fff"/><text x="850.5" y="573.3" font-size="9.5" text-anchor="middle" fill="#3a3a4a" font-family="Liberation Sans">6</text><path d="M873.5 444 L869.5 456" stroke="#3c3c3c" stroke-width="1.2"/><circle cx="871.0" cy="445" r="1.6" fill="#3c3c3c"/><path d="M870.5 445.5 Q872.5 447 873.5 444" stroke="#3c3c3c" fill="none"/><circle cx="870.0" cy="449" r="1.5" fill="#3c3c3c"/><circle cx="877.5" cy="447" r="1" fill="#3c3c3c"/><rect x="885.7" y="425" width="18" height="1" fill="#c8c8c8"/><ellipse cx="894.7" cy="425" rx="5.3" ry="3.6" transform="rotate(-20 894.7 425)" fill="#3c3c3c"/><rect x="889.7" y="425" width="1.1" height="32" fill="#444"/><path d="M889.7 443 L894.7 437 Q895.2 434 894.2 432 Q897.2 435 896.8000000000001 439 L896.8000000000001 448 L889.7 457.5Z" fill="#3c3c3c"/><path d="M890.8000000000001 448.5 L896.0 441.5 M890.8000000000001 452.2 L896.0 445.2" stroke="#fff" stroke-width="0.85"/><rect x="889.2" y="526" width="7" height="8" fill="#fff"/><text x="892.7" y="533.3" font-size="9.5" text-anchor="middle" fill="#3a3a4a" font-family="Liberation Sans">5</text><path d="M915.7 444 L911.7 456" stroke="#3c3c3c" stroke-width="1.2"/><circle cx="913.2" cy="445" r="1.6" fill="#3c3c3c"/><path d="M912.7 445.5 Q914.7 447 915.7 444" stroke="#3c3c3c" fill="none"/><circle cx="912.2" cy="449" r="1.5" fill="#3c3c3c"/><circle cx="919.7" cy="447" r="1" fill="#3c3c3c"/><ellipse cx="936.9" cy="444.5" rx="5.3" ry="3.6" transform="rotate(-20 936.9 444.5)" fill="#3c3c3c"/><rect x="931.9" y="444.5" width="1.1" height="32.5" fill="#444"/><path d="M931.9 463 L936.9 457 Q937.4 454 936.4 452 Q939.4 455 939.0 459 L939.0 468 L931.9 477.5Z" fill="#3c3c3c"/><path d="M933.0 468.5 L938.1999999999999 461.5 M933.0 472.2 L938.1999999999999 465.2" stroke="#fff" stroke-width="0.85"/><rect x="931.4" y="546" width="7" height="8" fill="#fff"/><text x="934.9" y="553.3" font-size="9.5" text-anchor="middle" fill="#3a3a4a" font-family="Liberation Sans">5</text><path d="M957.9 444 L953.9 456" stroke="#3c3c3c" stroke-width="1.2"/><circle cx="955.4" cy="445" r="1.6" fill="#3c3c3c"/><path d="M954.9 445.5 Q956.9 447 957.9 444" stroke="#3c3c3c" fill="none"/><circle cx="954.4" cy="449" r="1.5" fill="#3c3c3c"/><circle cx="961.9" cy="447" r="1" fill="#3c3c3c"/><rect x="970.1" y="425" width="18" height="1" fill="#c8c8c8"/><ellipse cx="979.1" cy="425" rx="5.3" ry="3.6" transform="rotate(-20 979.1 425)" fill="#3c3c3c"/><rect x="974.1" y="425" width="1.1" height="32" fill="#444"/><path d="M974.1 443 L979.1 437 Q979.6 434 978.6 432 Q981.6 435 981.2 439 L981.2 448 L974.1 457.5Z" fill="#3c3c3c"/><path d="M975.2 448.5 L980.4 441.5 M975.2 452.2 L980.4 445.2" stroke="#fff" stroke-width="0.85"/><rect x="973.6" y="526" width="7" height="8" fill="#fff"/><text x="977.1" y="533.3" font-size="9.5" text-anchor="middle" fill="#3a3a4a" font-family="Liberation Sans">5</text><path d="M1000.1 444 L996.1 456" stroke="#3c3c3c" stroke-width="1.2"/><circle cx="997.6" cy="445" r="1.6" fill="#3c3c3c"/><path d="M997.1 445.5 Q999.1 447 1000.1 444" stroke="#3c3c3c" fill="none"/><circle cx="996.6" cy="449" r="1.5" fill="#3c3c3c"/><circle cx="1004.1" cy="447" r="1" fill="#3c3c3c"/><rect x="1012.3" y="425" width="18" height="1" fill="#c8c8c8"/><ellipse cx="1021.3" cy="425" rx="5.3" ry="3.6" transform="rotate(-20 1021.3 425)" fill="#3c3c3c"/><ellipse cx="1021.3" cy="444.5" rx="5.3" ry="3.6" transform="rotate(-20 1021.3 444.5)" fill="#3c3c3c"/><ellipse cx="1021.3" cy="469" rx="5.3" ry="3.6" transform="rotate(-20 1021.3 469)" fill="#3c3c3c"/><rect x="1016.3" y="425" width="1.1" height="75" fill="#444"/><path d="M1016.3 486 L1021.3 480 Q1021.8 477 1020.8 475 Q1023.8 478 1023.4 482 L1023.4 491 L1016.3 500.5Z" fill="#3c3c3c"/><path d="M1017.4 491.5 L1022.5999999999999 484.5 M1017.4 495.2 L1022.5999999999999 488.2" stroke="#fff" stroke-width="0.85"/><rect x="1015.8" y="526" width="7" height="8" fill="#fff"/><text x="1019.3" y="533.3" font-size="9.5" text-anchor="middle" fill="#3a3a4a" font-family="Liberation Sans">5</text><rect x="1015.8" y="546" width="7" height="8" fill="#fff"/><text x="1019.3" y="553.3" font-size="9.5" text-anchor="middle" fill="#3a3a4a" font-family="Liberation Sans">5</text><rect x="1015.8" y="566" width="7" height="8" fill="#fff"/><text x="1019.3" y="573.3" font-size="9.5" text-anchor="middle" fill="#3a3a4a" font-family="Liberation Sans">6</text><path d="M1042.3 444 L1038.3 456" stroke="#3c3c3c" stroke-width="1.2"/><circle cx="1039.8" cy="445" r="1.6" fill="#3c3c3c"/><path d="M1039.3 445.5 Q1041.3 447 1042.3 444" stroke="#3c3c3c" fill="none"/><circle cx="1038.8" cy="449" r="1.5" fill="#3c3c3c"/><circle cx="1046.3" cy="447" r="1" fill="#3c3c3c"/><rect x="1054.5" y="425" width="18" height="1" fill="#c8c8c8"/><ellipse cx="1063.5" cy="425" rx="5.3" ry="3.6" transform="rotate(-20 1063.5 425)" fill="#3c3c3c"/><rect x="1058.5" y="425" width="1.1" height="32" fill="#444"/><path d="M1058.5 443 L1063.5 437 Q1064.0 434 1063.0 432 Q1066.0 435 1065.6 439 L1065.6 448 L1058.5 457.5Z" fill="#3c3c3c"/><path d="M1059.6 448.5 L1064.8 441.5 M1059.6 452.2 L1064.8 445.2" stroke="#fff" stroke-width="0.85"/><rect x="1058.0" y="526" width="7" height="8" fill="#fff"/><text x="1061.5" y="533.3" font-size="9.5" text-anchor="middle" fill="#3a3a4a" font-family="Liberation Sans">5</text><path d="M1084.5 444 L1080.5 456" stroke="#3c3c3c" stroke-width="1.2"/><circle cx="1082.0" cy="445" r="1.6" fill="#3c3c3c"/><path d="M1081.5 445.5 Q1083.5 447 1084.5 444" stroke="#3c3c3c" fill="none"/><circle cx="1081.0" cy="449" r="1.5" fill="#3c3c3c"/><circle cx="1088.5" cy="447" r="1" fill="#3c3c3c"/><ellipse cx="1105.7" cy="444.5" rx="5.3" ry="3.6" transform="rotate(-20 1105.7 444.5)" fill="#3c3c3c"/><rect x="1100.7" y="444.5" width="1.1" height="32.5" fill="#444"/><path d="M1100.7 463 L1105.7 457 Q1106.2 454 1105.2 452 Q1108.2 455 1107.8 459 L1107.8 468 L1100.7 477.5Z" fill="#3c3c3c"/><path d="M1101.8 468.5 L1107.0 461.5 M1101.8 472.2 L1107.0 465.2" stroke="#fff" stroke-width="0.85"/><rect x="1100.2" y="546" width="7" height="8" fill="#fff"/><text x="1103.7" y="553.3" font-size="9.5" text-anchor="middle" fill="#3a3a4a" font-family="Liberation Sans">5</text><path d="M1126.7 444 L1122.7 456" stroke="#3c3c3c" stroke-width="1.2"/><circle cx="1124.2" cy="445" r="1.6" fill="#3c3c3c"/><path d="M1123.7 445.5 Q1125.7 447 1126.7 444" stroke="#3c3c3c" fill="none"/><circle cx="1123.2" cy="449" r="1.5" fill="#3c3c3c"/><circle cx="1130.7" cy="447" r="1" fill="#3c3c3c"/><rect x="1138.9" y="425" width="18" height="1" fill="#c8c8c8"/><ellipse cx="1147.9" cy="425" rx="5.3" ry="3.6" transform="rotate(-20 1147.9 425)" fill="#3c3c3c"/><rect x="1142.9" y="425" width="1.1" height="32" fill="#444"/><path d="M1142.9 443 L1147.9 437 Q1148.4 434 1147.4 432 Q1150.4 435 1150.0 439 L1150.0 448 L1142.9 457.5Z" fill="#3c3c3c"/><path d="M1144.0 448.5 L1149.2 441.5 M1144.0 452.2 L1149.2 445.2" stroke="#fff" stroke-width="0.85"/><rect x="1142.4" y="526" width="7" height="8" fill="#fff"/><text x="1145.9" y="533.3" font-size="9.5" text-anchor="middle" fill="#3a3a4a" font-family="Liberation Sans">5</text><path d="M1168.9 444 L1164.9 456" stroke="#3c3c3c" stroke-width="1.2"/><circle cx="1166.4" cy="445" r="1.6" fill="#3c3c3c"/><path d="M1165.9 445.5 Q1167.9 447 1168.9 444" stroke="#3c3c3c" fill="none"/><circle cx="1165.4" cy="449" r="1.5" fill="#3c3c3c"/><circle cx="1172.9" cy="447" r="1" fill="#3c3c3c"/><text x="35" y="431" font-size="9.5" fill="#ff2020" font-family="Liberation Sans">61</text><text x="413" y="431" font-size="9.5" fill="#ff2020" font-family="Liberation Sans">62</text><text x="826" y="431" font-size="9.5" fill="#ff2020" font-family="Liberation Sans">63</text><rect x="34" y="222" width="1169" height="1" fill="#c8c8c8"/><rect x="34" y="230" width="1169" height="1" fill="#c8c8c8"/><rect x="34" y="238" width="1169" height="1" fill="#c8c8c8"/><rect x="34" y="246" width="1169" height="1" fill="#c8c8c8"/><rect x="34" y="254" width="1169" height="1" fill="#c8c8c8"/><rect x="34" y="319" width="1169" height="1" fill="#c8c8c8"/><rect x="34" y="329" width="1169" height="1" fill="#c8c8c8"/><rect x="34" y="339" width="1169" height="1" fill="#c8c8c8"/><rect x="34" y="349" width="1169" height="1" fill="#c8c8c8"/><rect x="34" y="359" width="1169" height="1" fill="#c8c8c8"/><rect x="34" y="369" width="1169" height="1" fill="#c8c8c8"/><rect x="34" y="222" width="1.3" height="33" fill="#111"/><rect x="34" y="319" width="1.3" height="51" fill="#111"/><rect x="435" y="222" width="1.3" height="33" fill="#111"/><rect x="435" y="319" width="1.3" height="51" fill="#111"/><rect x="801" y="222" width="1.3" height="33" fill="#111"/><rect x="801" y="319" width="1.3" height="51" fill="#111"/><rect x="1202" y="222" width="1.3" height="33" fill="#111"/><rect x="1202" y="319" width="1.3" height="51" fill="#111"/><path d="M992 228 L987 245" stroke="#3c3c3c" stroke-width="1.2"/><circle cx="989.5" cy="230" r="1.5" fill="#3c3c3c"/><circle cx="988.5" cy="234" r="1.5" fill="#3c3c3c"/><circle cx="987.5" cy="238" r="1.5" fill="#3c3c3c"/><path d="M1012 228 L1007 245" stroke="#3c3c3c" stroke-width="1.2"/><circle cx="1009.5" cy="230" r="1.5" fill="#3c3c3c"/><circle cx="1008.5" cy="234" r="1.5" fill="#3c3c3c"/><circle cx="1007.5" cy="238" r="1.5" fill="#3c3c3c"/><rect x="1021" y="214" width="18" height="1" fill="#c8c8c8"/><ellipse cx="1030" cy="214" rx="5.3" ry="3.6" transform="rotate(-20 1030 214)" fill="#3c3c3c"/><ellipse cx="1030" cy="233.5" rx="5.3" ry="3.6" transform="rotate(-20 1030 233.5)" fill="#3c3c3c"/><ellipse cx="1030" cy="258" rx="5.3" ry="3.6" transform="rotate(-20 1030 258)" fill="#3c3c3c"/><rect x="1025.0" y="214" width="1.1" height="75" fill="#444"/><path d="M1025.0 275 L1030.0 269 Q1030.5 266 1029.5 264 Q1032.5 267 1032.1 271 L1032.1 280 L1025.0 289.5Z" fill="#3c3c3c"/><path d="M1026.1 280.5 L1031.3 273.5 M1026.1 284.2 L1031.3 277.2" stroke="#fff" stroke-width="0.85"/><rect x="1024.5" y="315" width="7" height="8" fill="#fff"/><text x="1028" y="322.3" font-size="9.5" text-anchor="middle" fill="#3a3a4a" font-family="Liberation Sans">5</text><rect x="1024.5" y="335" width="7" height="8" fill="#fff"/><text x="1028" y="342.3" font-size="9.5" text-anchor="middle" fill="#3a3a4a" font-family="Liberation Sans">5</text><rect x="1024.5" y="355" width="7" height="8" fill="#fff"/><text x="1028" y="362.3" font-size="9.5" text-anchor="middle" fill="#3a3a4a" font-family="Liberation Sans">6</text><path d="M1050 233 L1046 245" stroke="#3c3c3c" stroke-width="1.2"/><circle cx="1047.5" cy="234" r="1.6" fill="#3c3c3c"/><path d="M1047 234.5 Q1049 236 1050 233" stroke="#3c3c3c" fill="none"/><circle cx="1046.5" cy="238" r="1.5" fill="#3c3c3c"/><circle cx="1054" cy="236" r="1" fill="#3c3c3c"/><rect x="1060.5" y="214" width="18" height="1" fill="#c8c8c8"/><ellipse cx="1069.5" cy="214" rx="5.3" ry="3.6" transform="rotate(-20 1069.5 214)" fill="#3c3c3c"/><rect x="1064.5" y="214" width="1.1" height="32" fill="#444"/><path d="M1064.5 232 L1069.5 226 Q1070.0 223 1069.0 221 Q1072.0 224 1071.6 228 L1071.6 237 L1064.5 246.5Z" fill="#3c3c3c"/><path d="M1065.6 237.5 L1070.8 230.5 M1065.6 241.2 L1070.8 234.2" stroke="#fff" stroke-width="0.85"/><rect x="1064.0" y="315" width="7" height="8" fill="#fff"/><text x="1067.5" y="322.3" font-size="9.5" text-anchor="middle" fill="#3a3a4a" font-family="Liberation Sans">5</text><path d="M1090 233 L1086 245" stroke="#3c3c3c" stroke-width="1.2"/><circle cx="1087.5" cy="234" r="1.6" fill="#3c3c3c"/><path d="M1087 234.5 Q1089 236 1090 233" stroke="#3c3c3c" fill="none"/><circle cx="1086.5" cy="238" r="1.5" fill="#3c3c3c"/><circle cx="1094" cy="236" r="1" fill="#3c3c3c"/><ellipse cx="1110" cy="233.5" rx="5.3" ry="3.6" transform="rotate(-20 1110 233.5)" fill="#3c3c3c"/><rect x="1105.0" y="233.5" width="1.1" height="32.5" fill="#444"/><path d="M1105.0 252 L1110.0 246 Q1110.5 243 1109.5 241 Q1112.5 244 1112.1 248 L1112.1 257 L1105.0 266.5Z" fill="#3c3c3c"/><path d="M1106.1 257.5 L1111.3 250.5 M1106.1 261.2 L1111.3 254.2" stroke="#fff" stroke-width="0.85"/><rect x="1104.5" y="335" width="7" height="8" fill="#fff"/><text x="1108" y="342.3" font-size="9.5" text-anchor="middle" fill="#3a3a4a" font-family="Liberation Sans">5</text><path d="M1130 233 L1126 245" stroke="#3c3c3c" stroke-width="1.2"/><circle cx="1127.5" cy="234" r="1.6" fill="#3c3c3c"/><path d="M1127 234.5 Q1129 236 1130 233" stroke="#3c3c3c" fill="none"/><circle cx="1126.5" cy="238" r="1.5" fill="#3c3c3c"/><circle cx="1134" cy="236" r="1" fill="#3c3c3c"/><rect x="1141" y="214" width="18" height="1" fill="#c8c8c8"/><ellipse cx="1150" cy="214" rx="5.3" ry="3.6" transform="rotate(-20 1150 214)" fill="#3c3c3c"/><rect x="1145.0" y="214" width="1.1" height="32" fill="#444"/><path d="M1145.0 232 L1150.0 226 Q1150.5 223 1149.5 221 Q1152.5 224 1152.1 228 L1152.1 237 L1145.0 246.5Z" fill="#3c3c3c"/><path d="M1146.1 237.5 L1151.3 230.5 M1146.1 241.2 L1151.3 234.2" stroke="#fff" stroke-width="0.85"/><rect x="1144.5" y="315" width="7" height="8" fill="#fff"/><text x="1148" y="322.3" font-size="9.5" text-anchor="middle" fill="#3a3a4a" font-family="Liberation Sans">5</text><path d="M1172 233 L1168 245" stroke="#3c3c3c" stroke-width="1.2"/><circle cx="1169.5" cy="234" r="1.6" fill="#3c3c3c"/><path d="M1169 234.5 Q1171 236 1172 233" stroke="#3c3c3c" fill="none"/><circle cx="1168.5" cy="238" r="1.5" fill="#3c3c3c"/><circle cx="1176" cy="236" r="1" fill="#3c3c3c"/><path d="M39.5 362 L39.5 378.5 L430.5 378.5 L430.5 362" stroke="#111" stroke-width="1.2" fill="none"/></svg>
<div class="a" style="left:5px;top:649px;width:1216px;height:332px;background:#2e2e2e"></div>
<div class="a" style="left:6px;top:650px;width:1214px;height:21px;background:#3c3c3c"></div>
<div class="a" style="left:6px;top:650px;width:33px;height:21px;background:linear-gradient(90deg,#353535,#3c3c3c)"></div>
<div class="a" style="left:38px;top:650px;width:1px;height:21px;background:#2e2e2e"></div>
<div class="a" style="left:564px;top:650px;width:1px;height:21px;background:#2e2e2e"></div>
<div class="t" style="left:10px;top:654.0px;font-size:13px;color:#ececec;font-weight:400;">N°</div>
<div class="t" style="left:851.5px;top:654.0px;font-size:13px;color:#ececec;font-weight:400;letter-spacing:0.63px;">Baila Morena</div>
<div class="a" style="left:6px;top:672px;width:32px;height:21px;background:#c8c8c8"></div>
<div class="a" style="left:41px;top:672px;width:64px;height:21px;background:#c6c6c6"></div>
<div class="a" style="left:108px;top:672px;width:227px;height:21px;background:#c6c6c6"></div>
<div class="a" style="left:338px;top:672px;width:226px;height:21px;background:#c6c6c6"></div>
<div class="t" style="left:9.5px;top:676.0px;font-size:13px;color:#111;font-weight:400;letter-spacing:0.4px;will-change:transform;-webkit-text-stroke:0.2px #111">1</div>
<div class="a" style="left:6px;top:694px;width:32px;height:21px;background:#ececec"></div>
<div class="a" style="left:41px;top:694px;width:64px;height:21px;background:#ececec"></div>
<div class="a" style="left:108px;top:694px;width:227px;height:21px;background:#ececec"></div>
<div class="a" style="left:338px;top:694px;width:226px;height:21px;background:#ececec"></div>
<div class="t" style="left:9.5px;top:698.0px;font-size:13px;color:#111;font-weight:400;letter-spacing:0.4px;will-change:transform;-webkit-text-stroke:0.2px #111">2</div>
<div class="a" style="left:6px;top:716px;width:32px;height:21px;background:#ffffff"></div>
<div class="a" style="left:41px;top:716px;width:64px;height:21px;background:#fff"></div>
<div class="a" style="left:108px;top:716px;width:227px;height:21px;background:#fff"></div>
<div class="a" style="left:338px;top:716px;width:226px;height:21px;background:#fff"></div>
<div class="t" style="left:9.5px;top:720.0px;font-size:13px;color:#111;font-weight:400;letter-spacing:0.4px;will-change:transform;-webkit-text-stroke:0.2px #111">3</div>
<div class="a" style="left:6px;top:738px;width:32px;height:21px;background:#ececec"></div>
<div class="a" style="left:41px;top:738px;width:64px;height:21px;background:#ececec"></div>
<div class="a" style="left:108px;top:738px;width:227px;height:21px;background:#ececec"></div>
<div class="a" style="left:338px;top:738px;width:226px;height:21px;background:#ececec"></div>
<div class="t" style="left:9.5px;top:742.0px;font-size:13px;color:#111;font-weight:400;letter-spacing:0.4px;will-change:transform;-webkit-text-stroke:0.2px #111">4</div>
<div class="a" style="left:6px;top:760px;width:32px;height:21px;background:#ffffff"></div>
<div class="a" style="left:41px;top:760px;width:64px;height:21px;background:#fff"></div>
<div class="a" style="left:108px;top:760px;width:227px;height:21px;background:#fff"></div>
<div class="a" style="left:338px;top:760px;width:226px;height:21px;background:#fff"></div>
<div class="t" style="left:9.5px;top:764.0px;font-size:13px;color:#111;font-weight:400;letter-spacing:0.4px;will-change:transform;-webkit-text-stroke:0.2px #111">5</div>
<div class="a" style="left:6px;top:782px;width:32px;height:21px;background:#ececec"></div>
<div class="a" style="left:41px;top:782px;width:64px;height:21px;background:#ececec"></div>
<div class="a" style="left:108px;top:782px;width:227px;height:21px;background:#ececec"></div>
<div class="a" style="left:338px;top:782px;width:226px;height:21px;background:#ececec"></div>
<div class="t" style="left:9.5px;top:786.0px;font-size:13px;color:#111;font-weight:400;letter-spacing:0.4px;will-change:transform;-webkit-text-stroke:0.2px #111">6</div>
<div class="a" style="left:6px;top:804px;width:32px;height:21px;background:#ffffff"></div>
<div class="a" style="left:41px;top:804px;width:64px;height:21px;background:#fff"></div>
<div class="a" style="left:108px;top:804px;width:227px;height:21px;background:#fff"></div>
<div class="a" style="left:338px;top:804px;width:226px;height:21px;background:#fff"></div>
<div class="t" style="left:9.5px;top:808.0px;font-size:13px;color:#111;font-weight:400;letter-spacing:0.4px;will-change:transform;-webkit-text-stroke:0.2px #111">7</div>
<div class="a" style="left:6px;top:826px;width:32px;height:21px;background:#ececec"></div>
<div class="a" style="left:41px;top:826px;width:64px;height:21px;background:#ececec"></div>
<div class="a" style="left:108px;top:826px;width:227px;height:21px;background:#ececec"></div>
<div class="a" style="left:338px;top:826px;width:226px;height:21px;background:#ececec"></div>
<div class="t" style="left:9.5px;top:830.0px;font-size:13px;color:#111;font-weight:400;letter-spacing:0.4px;will-change:transform;-webkit-text-stroke:0.2px #111">8</div>
<div class="a" style="left:6px;top:848px;width:32px;height:21px;background:#ffffff"></div>
<div class="a" style="left:41px;top:848px;width:64px;height:21px;background:#fff"></div>
<div class="a" style="left:108px;top:848px;width:227px;height:21px;background:#fff"></div>
<div class="a" style="left:338px;top:848px;width:226px;height:21px;background:#fff"></div>
<div class="t" style="left:9.5px;top:852.0px;font-size:13px;color:#111;font-weight:400;letter-spacing:0.4px;will-change:transform;-webkit-text-stroke:0.2px #111">9</div>
<div class="a" style="left:6px;top:870px;width:32px;height:21px;background:#ececec"></div>
<div class="a" style="left:41px;top:870px;width:64px;height:21px;background:#ececec"></div>
<div class="a" style="left:108px;top:870px;width:227px;height:21px;background:#ececec"></div>
<div class="a" style="left:338px;top:870px;width:226px;height:21px;background:#ececec"></div>
<div class="t" style="left:9.5px;top:874.0px;font-size:13px;color:#111;font-weight:400;letter-spacing:0.4px;will-change:transform;-webkit-text-stroke:0.2px #111">10</div>
<div class="a" style="left:6px;top:892px;width:32px;height:21px;background:#ffffff"></div>
<div class="a" style="left:41px;top:892px;width:64px;height:21px;background:#fff"></div>
<div class="a" style="left:108px;top:892px;width:227px;height:21px;background:#fff"></div>
<div class="a" style="left:338px;top:892px;width:226px;height:21px;background:#fff"></div>
<div class="t" style="left:9.5px;top:896.0px;font-size:13px;color:#111;font-weight:400;letter-spacing:0.4px;will-change:transform;-webkit-text-stroke:0.2px #111">11</div>
<div class="t" style="left:44.4px;top:896.0px;font-size:13px;color:#111;font-weight:400;;will-change:transform;-webkit-text-stroke:0.2px #111">-</div>
<div class="t" style="left:111px;top:894.0px;font-size:13px;color:#111;font-weight:400;letter-spacing:0.63px;;will-change:transform;-webkit-text-stroke:0.2px #111">Track 11</div>
<div class="t" style="left:340.7px;top:894.0px;font-size:13px;color:#111;font-weight:400;letter-spacing:0.56px;;will-change:transform;-webkit-text-stroke:0.2px #111">Synth Strings 1</div>
<div class="a" style="left:6px;top:914px;width:32px;height:21px;background:#ececec"></div>
<div class="a" style="left:41px;top:914px;width:64px;height:21px;background:#ececec"></div>
<div class="a" style="left:108px;top:914px;width:227px;height:21px;background:#ececec"></div>
<div class="a" style="left:338px;top:914px;width:226px;height:21px;background:#ececec"></div>
<div class="t" style="left:9.5px;top:918.0px;font-size:13px;color:#111;font-weight:400;letter-spacing:0.4px;will-change:transform;-webkit-text-stroke:0.2px #111">12</div>
<div class="t" style="left:44.4px;top:918.0px;font-size:13px;color:#111;font-weight:400;;will-change:transform;-webkit-text-stroke:0.2px #111">-</div>
<div class="t" style="left:111px;top:918.0px;font-size:13px;color:#111;font-weight:400;letter-spacing:0.49px;;will-change:transform;-webkit-text-stroke:0.2px #111">Track 12</div>
<div class="t" style="left:340.7px;top:918.0px;font-size:13px;color:#111;font-weight:400;letter-spacing:0.67px;;will-change:transform;-webkit-text-stroke:0.2px #111">Steel String Guitar 2</div>
<div class="a" style="left:6px;top:936px;width:32px;height:21px;background:#ffffff"></div>
<div class="a" style="left:41px;top:936px;width:64px;height:21px;background:#fff"></div>
<div class="a" style="left:108px;top:936px;width:227px;height:21px;background:#fff"></div>
<div class="a" style="left:338px;top:936px;width:226px;height:21px;background:#fff"></div>
<div class="t" style="left:9.5px;top:940.0px;font-size:13px;color:#111;font-weight:400;letter-spacing:0.4px;will-change:transform;-webkit-text-stroke:0.2px #111">13</div>
<div class="t" style="left:44.4px;top:940.0px;font-size:13px;color:#111;font-weight:400;;will-change:transform;-webkit-text-stroke:0.2px #111">-</div>
<div class="t" style="left:111px;top:940.0px;font-size:13px;color:#111;font-weight:400;letter-spacing:0.49px;;will-change:transform;-webkit-text-stroke:0.2px #111">Track 13</div>
<div class="t" style="left:340.7px;top:940.0px;font-size:13px;color:#111;font-weight:400;letter-spacing:0.71px;;will-change:transform;-webkit-text-stroke:0.2px #111">Orchestra Hit 1</div>
<div class="a" style="left:6px;top:958px;width:32px;height:21px;background:#ececec"></div>
<div class="a" style="left:41px;top:958px;width:64px;height:21px;background:#ececec"></div>
<div class="a" style="left:108px;top:958px;width:227px;height:21px;background:#ececec"></div>
<div class="a" style="left:338px;top:958px;width:226px;height:21px;background:#ececec"></div>
<div class="t" style="left:9.5px;top:962.0px;font-size:13px;color:#111;font-weight:400;letter-spacing:0.4px;will-change:transform;-webkit-text-stroke:0.2px #111">14</div>
<div class="t" style="left:44.4px;top:962.0px;font-size:13px;color:#111;font-weight:400;;will-change:transform;-webkit-text-stroke:0.2px #111">-</div>
<div class="t" style="left:111px;top:962.0px;font-size:13px;color:#111;font-weight:400;letter-spacing:0.55px;;will-change:transform;-webkit-text-stroke:0.2px #111">Percussion</div>
<div class="t" style="left:340.7px;top:962.0px;font-size:13px;color:#111;font-weight:400;letter-spacing:0.58px;;will-change:transform;-webkit-text-stroke:0.2px #111">Piano 1</div>
<div class="a" style="left:565px;top:671px;width:655px;height:309px;background:#2f393b"></div>
<svg class="a" style="left:0;top:0" width="1280" height="1024"><rect x="568" y="672" width="20" height="21" fill="#ff0000"/><rect x="589" y="672" width="20" height="21" fill="#ff0000"/><rect x="610" y="672" width="20" height="21" fill="#ff0000"/><rect x="631" y="672" width="20" height="21" fill="#ff0000"/><rect x="652" y="672" width="20" height="21" fill="#ff0000"/><rect x="673" y="672" width="20" height="21" fill="#ff0000"/><rect x="694" y="672" width="20" height="21" fill="#ff0000"/><rect x="715" y="672" width="20" height="21" fill="#ff0000"/><rect x="736" y="672" width="20" height="21" fill="#ff0000"/><rect x="757" y="672" width="20" height="21" fill="#ff0000"/><rect x="778" y="672" width="20" height="21" fill="#ff0000"/><rect x="799" y="672" width="20" height="21" fill="#ff0000"/><rect x="820" y="672" width="20" height="21" fill="#ff0000"/><rect x="841" y="672" width="20" height="21" fill="#ff0000"/><rect x="862" y="672" width="20" height="21" fill="#ff0000"/><rect x="883" y="672" width="20" height="21" fill="#ff0000"/><rect x="904" y="672" width="20" height="21" fill="#ff0000"/><rect x="925" y="672" width="20" height="21" fill="#ff0000"/><rect x="946" y="672" width="20" height="21" fill="#ff0000"/><rect x="967" y="672" width="20" height="21" fill="#ff0000"/><rect x="988" y="672" width="20" height="21" fill="#ff0000"/><rect x="1009" y="672" width="20" height="21" fill="#ff0000"/><rect x="1030" y="672" width="20" height="21" fill="#ff0000"/><rect x="1051" y="672" width="20" height="21" fill="#ff0000"/><rect x="1072" y="672" width="20" height="21" fill="#ff0000"/><rect x="1093" y="672" width="20" height="21" fill="#ff0000"/><rect x="1114" y="672" width="20" height="21" fill="#ff0000"/><rect x="1135" y="672" width="20" height="21" fill="#ff0000"/><rect x="1156" y="672" width="20" height="21" fill="#ff0000"/><rect x="1177" y="672" width="20" height="21" fill="#ff0000"/><rect x="1198" y="672" width="21" height="21" fill="#ff0000"/><rect x="588" y="672" width="1" height="21" fill="#d0d0d0"/><rect x="609" y="672" width="1" height="21" fill="#d0d0d0"/><rect x="630" y="672" width="1" height="21" fill="#d0d0d0"/><rect x="651" y="672" width="1" height="21" fill="#d0d0d0"/><rect x="672" y="672" width="1" height="21" fill="#d0d0d0"/><rect x="693" y="672" width="1" height="21" fill="#d0d0d0"/><rect x="714" y="672" width="1" height="21" fill="#d0d0d0"/><rect x="735" y="672" width="1" height="21" fill="#d0d0d0"/><rect x="756" y="672" width="1" height="21" fill="#d0d0d0"/><rect x="777" y="672" width="1" height="21" fill="#d0d0d0"/><rect x="798" y="672" width="1" height="21" fill="#d0d0d0"/><rect x="819" y="672" width="1" height="21" fill="#d0d0d0"/><rect x="840" y="672" width="1" height="21" fill="#d0d0d0"/><rect x="861" y="672" width="1" height="21" fill="#d0d0d0"/><rect x="882" y="672" width="1" height="21" fill="#d0d0d0"/><rect x="903" y="672" width="1" height="21" fill="#d0d0d0"/><rect x="924" y="672" width="1" height="21" fill="#d0d0d0"/><rect x="945" y="672" width="1" height="21" fill="#d0d0d0"/><rect x="966" y="672" width="1" height="21" fill="#d0d0d0"/><rect x="987" y="672" width="1" height="21" fill="#d0d0d0"/><rect x="1008" y="672" width="1" height="21" fill="#d0d0d0"/><rect x="1029" y="672" width="1" height="21" fill="#d0d0d0"/><rect x="1050" y="672" width="1" height="21" fill="#d0d0d0"/><rect x="1071" y="672" width="1" height="21" fill="#d0d0d0"/><rect x="1092" y="672" width="1" height="21" fill="#d0d0d0"/><rect x="1113" y="672" width="1" height="21" fill="#d0d0d0"/><rect x="1134" y="672" width="1" height="21" fill="#d0d0d0"/><rect x="1155" y="672" width="1" height="21" fill="#d0d0d0"/><rect x="1176" y="672" width="1" height="21" fill="#d0d0d0"/><rect x="1197" y="672" width="1" height="21" fill="#d0d0d0"/><rect x="568" y="694" width="20" height="21" fill="#ff0000"/><rect x="589" y="694" width="20" height="21" fill="#ff0000"/><rect x="610" y="694" width="20" height="21" fill="#ff0000"/><rect x="631" y="694" width="20" height="21" fill="#ff0000"/><rect x="652" y="694" width="20" height="21" fill="#ff0000"/><rect x="673" y="694" width="20" height="21" fill="#ff0000"/><rect x="694" y="694" width="20" height="21" fill="#ff0000"/><rect x="715" y="694" width="20" height="21" fill="#ff0000"/><rect x="736" y="694" width="20" height="21" fill="#ff0000"/><rect x="757" y="694" width="20" height="21" fill="#ff0000"/><rect x="778" y="694" width="20" height="21" fill="#ff0000"/><rect x="799" y="694" width="20" height="21" fill="#ff0000"/><rect x="820" y="694" width="20" height="21" fill="#ff0000"/><rect x="841" y="694" width="20" height="21" fill="#ff0000"/><rect x="862" y="694" width="20" height="21" fill="#ff0000"/><rect x="883" y="694" width="20" height="21" fill="#ff0000"/><rect x="904" y="694" width="20" height="21" fill="#ff0000"/><rect x="925" y="694" width="20" height="21" fill="#ff0000"/><rect x="946" y="694" width="20" height="21" fill="#ff0000"/><rect x="967" y="694" width="20" height="21" fill="#ff0000"/><rect x="988" y="694" width="20" height="21" fill="#ff0000"/><rect x="1009" y="694" width="20" height="21" fill="#ff0000"/><rect x="1030" y="694" width="20" height="21" fill="#ff0000"/><rect x="1051" y="694" width="20" height="21" fill="#ff0000"/><rect x="1072" y="694" width="20" height="21" fill="#ff0000"/><rect x="1093" y="694" width="20" height="21" fill="#ff0000"/><rect x="1114" y="694" width="20" height="21" fill="#ff0000"/><rect x="1135" y="694" width="20" height="21" fill="#ff0000"/><rect x="1156" y="694" width="20" height="21" fill="#ff0000"/><rect x="1177" y="694" width="20" height="21" fill="#ff0000"/><rect x="1198" y="694" width="21" height="21" fill="#ff0000"/><rect x="588" y="694" width="1" height="21" fill="#d0d0d0"/><rect x="609" y="694" width="1" height="21" fill="#d0d0d0"/><rect x="630" y="694" width="1" height="21" fill="#d0d0d0"/><rect x="651" y="694" width="1" height="21" fill="#d0d0d0"/><rect x="672" y="694" width="1" height="21" fill="#d0d0d0"/><rect x="693" y="694" width="1" height="21" fill="#d0d0d0"/><rect x="714" y="694" width="1" height="21" fill="#d0d0d0"/><rect x="735" y="694" width="1" height="21" fill="#d0d0d0"/><rect x="756" y="694" width="1" height="21" fill="#d0d0d0"/><rect x="777" y="694" width="1" height="21" fill="#d0d0d0"/><rect x="798" y="694" width="1" height="21" fill="#d0d0d0"/><rect x="819" y="694" width="1" height="21" fill="#d0d0d0"/><rect x="840" y="694" width="1" height="21" fill="#d0d0d0"/><rect x="861" y="694" width="1" height="21" fill="#d0d0d0"/><rect x="882" y="694" width="1" height="21" fill="#d0d0d0"/><rect x="903" y="694" width="1" height="21" fill="#d0d0d0"/><rect x="924" y="694" width="1" height="21" fill="#d0d0d0"/><rect x="945" y="694" width="1" height="21" fill="#d0d0d0"/><rect x="966" y="694" width="1" height="21" fill="#d0d0d0"/><rect x="987" y="694" width="1" height="21" fill="#d0d0d0"/><rect x="1008" y="694" width="1" height="21" fill="#d0d0d0"/><rect x="1029" y="694" width="1" height="21" fill="#d0d0d0"/><rect x="1050" y="694" width="1" height="21" fill="#d0d0d0"/><rect x="1071" y="694" width="1" height="21" fill="#d0d0d0"/><rect x="1092" y="694" width="1" height="21" fill="#d0d0d0"/><rect x="1113" y="694" width="1" height="21" fill="#d0d0d0"/><rect x="1134" y="694" width="1" height="21" fill="#d0d0d0"/><rect x="1155" y="694" width="1" height="21" fill="#d0d0d0"/><rect x="1176" y="694" width="1" height="21" fill="#d0d0d0"/><rect x="1197" y="694" width="1" height="21" fill="#d0d0d0"/><rect x="568" y="716" width="20" height="21" fill="#ff0000"/><rect x="569" y="717" width="18" height="19" fill="#c0c0c0"/><rect x="589" y="716" width="20" height="21" fill="#ff0000"/><rect x="590" y="717" width="18" height="19" fill="#c0c0c0"/><rect x="610" y="716" width="20" height="21" fill="#ff0000"/><rect x="611" y="717" width="18" height="19" fill="#c0c0c0"/><rect x="631" y="716" width="20" height="21" fill="#ff0000"/><rect x="632" y="717" width="18" height="19" fill="#c0c0c0"/><rect x="652" y="716" width="20" height="21" fill="#ff0000"/><rect x="653" y="717" width="18" height="19" fill="#c0c0c0"/><rect x="673" y="716" width="20" height="21" fill="#ff0000"/><rect x="674" y="717" width="18" height="19" fill="#c0c0c0"/><rect x="694" y="716" width="20" height="21" fill="#ff0000"/><rect x="695" y="717" width="18" height="19" fill="#c0c0c0"/><rect x="715" y="716" width="20" height="21" fill="#ff0000"/><rect x="716" y="717" width="18" height="19" fill="#c0c0c0"/><rect x="736" y="716" width="20" height="21" fill="#ff0000"/><rect x="737" y="717" width="18" height="19" fill="#c0c0c0"/><rect x="757" y="716" width="20" height="21" fill="#ff0000"/><rect x="758" y="717" width="18" height="19" fill="#c0c0c0"/><rect x="778" y="716" width="20" height="21" fill="#ff0000"/><rect x="779" y="717" width="18" height="19" fill="#c0c0c0"/><rect x="799" y="716" width="20" height="21" fill="#ff0000"/><rect x="800" y="717" width="18" height="19" fill="#c0c0c0"/><rect x="820" y="716" width="20" height="21" fill="#ff0000"/><rect x="821" y="717" width="18" height="19" fill="#c0c0c0"/><rect x="841" y="716" width="20" height="21" fill="#ff0000"/><rect x="842" y="717" width="18" height="19" fill="#c0c0c0"/><rect x="862" y="716" width="20" height="21" fill="#ff0000"/><rect x="863" y="717" width="18" height="19" fill="#c0c0c0"/><rect x="883" y="716" width="20" height="21" fill="#ff0000"/><rect x="884" y="717" width="18" height="19" fill="#c0c0c0"/><rect x="904" y="716" width="20" height="21" fill="#ff0000"/><rect x="905" y="717" width="18" height="19" fill="#c0c0c0"/><rect x="925" y="716" width="20" height="21" fill="#ff0000"/><rect x="926" y="717" width="18" height="19" fill="#c0c0c0"/><rect x="946" y="716" width="20" height="21" fill="#ff0000"/><rect x="947" y="717" width="18" height="19" fill="#c0c0c0"/><rect x="967" y="716" width="20" height="21" fill="#ff0000"/><rect x="988" y="716" width="20" height="21" fill="#ff0000"/><rect x="989" y="717" width="18" height="19" fill="#c0c0c0"/><rect x="1009" y="716" width="20" height="21" fill="#ff0000"/><rect x="1010" y="717" width="18" height="19" fill="#c0c0c0"/><rect x="1030" y="716" width="20" height="21" fill="#ff0000"/><rect x="1031" y="717" width="18" height="19" fill="#c0c0c0"/><rect x="1051" y="716" width="20" height="21" fill="#ff0000"/><rect x="1052" y="717" width="18" height="19" fill="#c0c0c0"/><rect x="1072" y="716" width="20" height="21" fill="#ff0000"/><rect x="1073" y="717" width="18" height="19" fill="#c0c0c0"/><rect x="1093" y="716" width="20" height="21" fill="#ff0000"/><rect x="1094" y="717" width="18" height="19" fill="#c0c0c0"/><rect x="1114" y="716" width="20" height="21" fill="#ff0000"/><rect x="1135" y="716" width="20" height="21" fill="#ff0000"/><rect x="1156" y="716" width="20" height="21" fill="#ff0000"/><rect x="1177" y="716" width="20" height="21" fill="#ff0000"/><rect x="1198" y="716" width="21" height="21" fill="#ff0000"/><rect x="588" y="716" width="1" height="21" fill="#d0d0d0"/><rect x="609" y="716" width="1" height="21" fill="#d0d0d0"/><rect x="630" y="716" width="1" height="21" fill="#d0d0d0"/><rect x="651" y="716" width="1" height="21" fill="#d0d0d0"/><rect x="672" y="716" width="1" height="21" fill="#d0d0d0"/><rect x="693" y="716" width="1" height="21" fill="#d0d0d0"/><rect x="714" y="716" width="1" height="21" fill="#d0d0d0"/><rect x="735" y="716" width="1" height="21" fill="#d0d0d0"/><rect x="756" y="716" width="1" height="21" fill="#d0d0d0"/><rect x="777" y="716" width="1" height="21" fill="#d0d0d0"/><rect x="798" y="716" width="1" height="21" fill="#d0d0d0"/><rect x="819" y="716" width="1" height="21" fill="#d0d0d0"/><rect x="840" y="716" width="1" height="21" fill="#d0d0d0"/><rect x="861" y="716" width="1" height="21" fill="#d0d0d0"/><rect x="882" y="716" width="1" height="21" fill="#d0d0d0"/><rect x="903" y="716" width="1" height="21" fill="#d0d0d0"/><rect x="924" y="716" width="1" height="21" fill="#d0d0d0"/><rect x="945" y="716" width="1" height="21" fill="#d0d0d0"/><rect x="966" y="716" width="1" height="21" fill="#d0d0d0"/><rect x="987" y="716" width="1" height="21" fill="#d0d0d0"/><rect x="1008" y="716" width="1" height="21" fill="#d0d0d0"/><rect x="1029" y="716" width="1" height="21" fill="#d0d0d0"/><rect x="1050" y="716" width="1" height="21" fill="#d0d0d0"/><rect x="1071" y="716" width="1" height="21" fill="#d0d0d0"/><rect x="1092" y="716" width="1" height="21" fill="#d0d0d0"/><rect x="1113" y="716" width="1" height="21" fill="#d0d0d0"/><rect x="1134" y="716" width="1" height="21" fill="#d0d0d0"/><rect x="1155" y="716" width="1" height="21" fill="#d0d0d0"/><rect x="1176" y="716" width="1" height="21" fill="#d0d0d0"/><rect x="1197" y="716" width="1" height="21" fill="#d0d0d0"/><rect x="568" y="738" width="20" height="21" fill="#ff0000"/><rect x="589" y="738" width="20" height="21" fill="#ff0000"/><rect x="610" y="738" width="20" height="21" fill="#ff0000"/><rect x="631" y="738" width="20" height="21" fill="#ff0000"/><rect x="652" y="738" width="20" height="21" fill="#ff0000"/><rect x="673" y="738" width="20" height="21" fill="#ff0000"/><rect x="694" y="738" width="20" height="21" fill="#ff0000"/><rect x="715" y="738" width="20" height="21" fill="#ff0000"/><rect x="736" y="738" width="20" height="21" fill="#ff0000"/><rect x="757" y="738" width="20" height="21" fill="#ff0000"/><rect x="778" y="738" width="20" height="21" fill="#ff0000"/><rect x="799" y="738" width="20" height="21" fill="#ff0000"/><rect x="820" y="738" width="20" height="21" fill="#ff0000"/><rect x="841" y="738" width="20" height="21" fill="#ff0000"/><rect x="862" y="738" width="20" height="21" fill="#ff0000"/><rect x="883" y="738" width="20" height="21" fill="#ff0000"/><rect x="904" y="738" width="20" height="21" fill="#ff0000"/><rect x="925" y="738" width="20" height="21" fill="#ff0000"/><rect x="926" y="739" width="18" height="19" fill="#c0c0c0"/><rect x="946" y="738" width="20" height="21" fill="#ff0000"/><rect x="967" y="738" width="20" height="21" fill="#ff0000"/><rect x="988" y="738" width="20" height="21" fill="#ff0000"/><rect x="1009" y="738" width="20" height="21" fill="#ff0000"/><rect x="1030" y="738" width="20" height="21" fill="#ff0000"/><rect x="1051" y="738" width="20" height="21" fill="#ff0000"/><rect x="1072" y="738" width="20" height="21" fill="#ff0000"/><rect x="1093" y="738" width="20" height="21" fill="#ff0000"/><rect x="1114" y="738" width="20" height="21" fill="#ff0000"/><rect x="1135" y="738" width="20" height="21" fill="#ff0000"/><rect x="1136" y="739" width="18" height="19" fill="#c0c0c0"/><rect x="1156" y="738" width="20" height="21" fill="#ff0000"/><rect x="1157" y="739" width="18" height="19" fill="#c0c0c0"/><rect x="1177" y="738" width="20" height="21" fill="#ff0000"/><rect x="1178" y="739" width="18" height="19" fill="#c0c0c0"/><rect x="1198" y="738" width="21" height="21" fill="#ff0000"/><rect x="1199" y="739" width="18" height="19" fill="#c0c0c0"/><rect x="588" y="738" width="1" height="21" fill="#d0d0d0"/><rect x="609" y="738" width="1" height="21" fill="#d0d0d0"/><rect x="630" y="738" width="1" height="21" fill="#d0d0d0"/><rect x="651" y="738" width="1" height="21" fill="#d0d0d0"/><rect x="672" y="738" width="1" height="21" fill="#d0d0d0"/><rect x="693" y="738" width="1" height="21" fill="#d0d0d0"/><rect x="714" y="738" width="1" height="21" fill="#d0d0d0"/><rect x="735" y="738" width="1" height="21" fill="#d0d0d0"/><rect x="756" y="738" width="1" height="21" fill="#d0d0d0"/><rect x="777" y="738" width="1" height="21" fill="#d0d0d0"/><rect x="798" y="738" width="1" height="21" fill="#d0d0d0"/><rect x="819" y="738" width="1" height="21" fill="#d0d0d0"/><rect x="840" y="738" width="1" height="21" fill="#d0d0d0"/><rect x="861" y="738" width="1" height="21" fill="#d0d0d0"/><rect x="882" y="738" width="1" height="21" fill="#d0d0d0"/><rect x="903" y="738" width="1" height="21" fill="#d0d0d0"/><rect x="924" y="738" width="1" height="21" fill="#d0d0d0"/><rect x="945" y="738" width="1" height="21" fill="#d0d0d0"/><rect x="966" y="738" width="1" height="21" fill="#d0d0d0"/><rect x="987" y="738" width="1" height="21" fill="#d0d0d0"/><rect x="1008" y="738" width="1" height="21" fill="#d0d0d0"/><rect x="1029" y="738" width="1" height="21" fill="#d0d0d0"/><rect x="1050" y="738" width="1" height="21" fill="#d0d0d0"/><rect x="1071" y="738" width="1" height="21" fill="#d0d0d0"/><rect x="1092" y="738" width="1" height="21" fill="#d0d0d0"/><rect x="1113" y="738" width="1" height="21" fill="#d0d0d0"/><rect x="1134" y="738" width="1" height="21" fill="#d0d0d0"/><rect x="1155" y="738" width="1" height="21" fill="#d0d0d0"/><rect x="1176" y="738" width="1" height="21" fill="#d0d0d0"/><rect x="1197" y="738" width="1" height="21" fill="#d0d0d0"/><rect x="568" y="760" width="20" height="21" fill="#ff0000"/><rect x="569" y="761" width="18" height="19" fill="#c0c0c0"/><rect x="589" y="760" width="20" height="21" fill="#ff0000"/><rect x="590" y="761" width="18" height="19" fill="#c0c0c0"/><rect x="610" y="760" width="20" height="21" fill="#ff0000"/><rect x="611" y="761" width="18" height="19" fill="#c0c0c0"/><rect x="631" y="760" width="20" height="21" fill="#ff0000"/><rect x="652" y="760" width="20" height="21" fill="#ff0000"/><rect x="673" y="760" width="20" height="21" fill="#ff0000"/><rect x="694" y="760" width="20" height="21" fill="#ff0000"/><rect x="715" y="760" width="20" height="21" fill="#ff0000"/><rect x="736" y="760" width="20" height="21" fill="#ff0000"/><rect x="757" y="760" width="20" height="21" fill="#ff0000"/><rect x="778" y="760" width="20" height="21" fill="#ff0000"/><rect x="799" y="760" width="20" height="21" fill="#ff0000"/><rect x="820" y="760" width="20" height="21" fill="#ff0000"/><rect x="841" y="760" width="20" height="21" fill="#ff0000"/><rect x="862" y="760" width="20" height="21" fill="#ff0000"/><rect x="883" y="760" width="20" height="21" fill="#ff0000"/><rect x="904" y="760" width="20" height="21" fill="#ff0000"/><rect x="925" y="760" width="20" height="21" fill="#ff0000"/><rect x="946" y="760" width="20" height="21" fill="#ff0000"/><rect x="967" y="760" width="20" height="21" fill="#ff0000"/><rect x="988" y="760" width="20" height="21" fill="#ff0000"/><rect x="1009" y="760" width="20" height="21" fill="#ff0000"/><rect x="1030" y="760" width="20" height="21" fill="#ff0000"/><rect x="1051" y="760" width="20" height="21" fill="#ff0000"/><rect x="1072" y="760" width="20" height="21" fill="#ff0000"/><rect x="1093" y="760" width="20" height="21" fill="#ff0000"/><rect x="1114" y="760" width="20" height="21" fill="#ff0000"/><rect x="1135" y="760" width="20" height="21" fill="#ff0000"/><rect x="1156" y="760" width="20" height="21" fill="#ff0000"/><rect x="1177" y="760" width="20" height="21" fill="#ff0000"/><rect x="1198" y="760" width="21" height="21" fill="#ff0000"/><rect x="588" y="760" width="1" height="21" fill="#d0d0d0"/><rect x="609" y="760" width="1" height="21" fill="#d0d0d0"/><rect x="630" y="760" width="1" height="21" fill="#d0d0d0"/><rect x="651" y="760" width="1" height="21" fill="#d0d0d0"/><rect x="672" y="760" width="1" height="21" fill="#d0d0d0"/><rect x="693" y="760" width="1" height="21" fill="#d0d0d0"/><rect x="714" y="760" width="1" height="21" fill="#d0d0d0"/><rect x="735" y="760" width="1" height="21" fill="#d0d0d0"/><rect x="756" y="760" width="1" height="21" fill="#d0d0d0"/><rect x="777" y="760" width="1" height="21" fill="#d0d0d0"/><rect x="798" y="760" width="1" height="21" fill="#d0d0d0"/><rect x="819" y="760" width="1" height="21" fill="#d0d0d0"/><rect x="840" y="760" width="1" height="21" fill="#d0d0d0"/><rect x="861" y="760" width="1" height="21" fill="#d0d0d0"/><rect x="882" y="760" width="1" height="21" fill="#d0d0d0"/><rect x="903" y="760" width="1" height="21" fill="#d0d0d0"/><rect x="924" y="760" width="1" height="21" fill="#d0d0d0"/><rect x="945" y="760" width="1" height="21" fill="#d0d0d0"/><rect x="966" y="760" width="1" height="21" fill="#d0d0d0"/><rect x="987" y="760" width="1" height="21" fill="#d0d0d0"/><rect x="1008" y="760" width="1" height="21" fill="#d0d0d0"/><rect x="1029" y="760" width="1" height="21" fill="#d0d0d0"/><rect x="1050" y="760" width="1" height="21" fill="#d0d0d0"/><rect x="1071" y="760" width="1" height="21" fill="#d0d0d0"/><rect x="1092" y="760" width="1" height="21" fill="#d0d0d0"/><rect x="1113" y="760" width="1" height="21" fill="#d0d0d0"/><rect x="1134" y="760" width="1" height="21" fill="#d0d0d0"/><rect x="1155" y="760" width="1" height="21" fill="#d0d0d0"/><rect x="1176" y="760" width="1" height="21" fill="#d0d0d0"/><rect x="1197" y="760" width="1" height="21" fill="#d0d0d0"/><rect x="568" y="782" width="20" height="21" fill="#ff0000"/><rect x="569" y="783" width="18" height="19" fill="#c0c0c0"/><rect x="589" y="782" width="20" height="21" fill="#ff0000"/><rect x="590" y="783" width="18" height="19" fill="#c0c0c0"/><rect x="610" y="782" width="20" height="21" fill="#ff0000"/><rect x="611" y="783" width="18" height="19" fill="#c0c0c0"/><rect x="631" y="782" width="20" height="21" fill="#ff0000"/><rect x="632" y="783" width="18" height="19" fill="#c0c0c0"/><rect x="652" y="782" width="20" height="21" fill="#ff0000"/><rect x="653" y="783" width="18" height="19" fill="#c0c0c0"/><rect x="673" y="782" width="20" height="21" fill="#ff0000"/><rect x="674" y="783" width="18" height="19" fill="#c0c0c0"/><rect x="694" y="782" width="20" height="21" fill="#ff0000"/><rect x="695" y="783" width="18" height="19" fill="#c0c0c0"/><rect x="715" y="782" width="20" height="21" fill="#ff0000"/><rect x="716" y="783" width="18" height="19" fill="#c0c0c0"/><rect x="736" y="782" width="20" height="21" fill="#ff0000"/><rect x="737" y="783" width="18" height="19" fill="#c0c0c0"/><rect x="757" y="782" width="20" height="21" fill="#ff0000"/><rect x="758" y="783" width="18" height="19" fill="#c0c0c0"/><rect x="778" y="782" width="20" height="21" fill="#ff0000"/><rect x="799" y="782" width="20" height="21" fill="#ff0000"/><rect x="820" y="782" width="20" height="21" fill="#ff0000"/><rect x="841" y="782" width="20" height="21" fill="#ff0000"/><rect x="862" y="782" width="20" height="21" fill="#ff0000"/><rect x="883" y="782" width="20" height="21" fill="#ff0000"/><rect x="904" y="782" width="20" height="21" fill="#ff0000"/><rect x="925" y="782" width="20" height="21" fill="#ff0000"/><rect x="946" y="782" width="20" height="21" fill="#ff0000"/><rect x="967" y="782" width="20" height="21" fill="#ff0000"/><rect x="988" y="782" width="20" height="21" fill="#ff0000"/><rect x="1009" y="782" width="20" height="21" fill="#ff0000"/><rect x="1030" y="782" width="20" height="21" fill="#ff0000"/><rect x="1051" y="782" width="20" height="21" fill="#ff0000"/><rect x="1072" y="782" width="20" height="21" fill="#ff0000"/><rect x="1093" y="782" width="20" height="21" fill="#ff0000"/><rect x="1114" y="782" width="20" height="21" fill="#ff0000"/><rect x="1135" y="782" width="20" height="21" fill="#ff0000"/><rect x="1156" y="782" width="20" height="21" fill="#ff0000"/><rect x="1177" y="782" width="20" height="21" fill="#ff0000"/><rect x="1198" y="782" width="21" height="21" fill="#ff0000"/><rect x="588" y="782" width="1" height="21" fill="#d0d0d0"/><rect x="609" y="782" width="1" height="21" fill="#d0d0d0"/><rect x="630" y="782" width="1" height="21" fill="#d0d0d0"/><rect x="651" y="782" width="1" height="21" fill="#d0d0d0"/><rect x="672" y="782" width="1" height="21" fill="#d0d0d0"/><rect x="693" y="782" width="1" height="21" fill="#d0d0d0"/><rect x="714" y="782" width="1" height="21" fill="#d0d0d0"/><rect x="735" y="782" width="1" height="21" fill="#d0d0d0"/><rect x="756" y="782" width="1" height="21" fill="#d0d0d0"/><rect x="777" y="782" width="1" height="21" fill="#d0d0d0"/><rect x="798" y="782" width="1" height="21" fill="#d0d0d0"/><rect x="819" y="782" width="1" height="21" fill="#d0d0d0"/><rect x="840" y="782" width="1" height="21" fill="#d0d0d0"/><rect x="861" y="782" width="1" height="21" fill="#d0d0d0"/><rect x="882" y="782" width="1" height="21" fill="#d0d0d0"/><rect x="903" y="782" width="1" height="21" fill="#d0d0d0"/><rect x="924" y="782" width="1" height="21" fill="#d0d0d0"/><rect x="945" y="782" width="1" height="21" fill="#d0d0d0"/><rect x="966" y="782" width="1" height="21" fill="#d0d0d0"/><rect x="987" y="782" width="1" height="21" fill="#d0d0d0"/><rect x="1008" y="782" width="1" height="21" fill="#d0d0d0"/><rect x="1029" y="782" width="1" height="21" fill="#d0d0d0"/><rect x="1050" y="782" width="1" height="21" fill="#d0d0d0"/><rect x="1071" y="782" width="1" height="21" fill="#d0d0d0"/><rect x="1092" y="782" width="1" height="21" fill="#d0d0d0"/><rect x="1113" y="782" width="1" height="21" fill="#d0d0d0"/><rect x="1134" y="782" width="1" height="21" fill="#d0d0d0"/><rect x="1155" y="782" width="1" height="21" fill="#d0d0d0"/><rect x="1176" y="782" width="1" height="21" fill="#d0d0d0"/><rect x="1197" y="782" width="1" height="21" fill="#d0d0d0"/><rect x="568" y="804" width="20" height="21" fill="#ff0000"/><rect x="569" y="805" width="18" height="19" fill="#c0c0c0"/><rect x="589" y="804" width="20" height="21" fill="#ff0000"/><rect x="590" y="805" width="18" height="19" fill="#c0c0c0"/><rect x="610" y="804" width="20" height="21" fill="#ff0000"/><rect x="631" y="804" width="20" height="21" fill="#ff0000"/><rect x="652" y="804" width="20" height="21" fill="#ff0000"/><rect x="673" y="804" width="20" height="21" fill="#ff0000"/><rect x="694" y="804" width="20" height="21" fill="#ff0000"/><rect x="715" y="804" width="20" height="21" fill="#ff0000"/><rect x="736" y="804" width="20" height="21" fill="#ff0000"/><rect x="757" y="804" width="20" height="21" fill="#ff0000"/><rect x="778" y="804" width="20" height="21" fill="#ff0000"/><rect x="799" y="804" width="20" height="21" fill="#ff0000"/><rect x="820" y="804" width="20" height="21" fill="#ff0000"/><rect x="841" y="804" width="20" height="21" fill="#ff0000"/><rect x="862" y="804" width="20" height="21" fill="#ff0000"/><rect x="883" y="804" width="20" height="21" fill="#ff0000"/><rect x="904" y="804" width="20" height="21" fill="#ff0000"/><rect x="925" y="804" width="20" height="21" fill="#ff0000"/><rect x="946" y="804" width="20" height="21" fill="#ff0000"/><rect x="967" y="804" width="20" height="21" fill="#ff0000"/><rect x="988" y="804" width="20" height="21" fill="#ff0000"/><rect x="1009" y="804" width="20" height="21" fill="#ff0000"/><rect x="1030" y="804" width="20" height="21" fill="#ff0000"/><rect x="1051" y="804" width="20" height="21" fill="#ff0000"/><rect x="1072" y="804" width="20" height="21" fill="#ff0000"/><rect x="1093" y="804" width="20" height="21" fill="#ff0000"/><rect x="1114" y="804" width="20" height="21" fill="#ff0000"/><rect x="1135" y="804" width="20" height="21" fill="#ff0000"/><rect x="1156" y="804" width="20" height="21" fill="#ff0000"/><rect x="1177" y="804" width="20" height="21" fill="#ff0000"/><rect x="1198" y="804" width="21" height="21" fill="#ff0000"/><rect x="588" y="804" width="1" height="21" fill="#d0d0d0"/><rect x="609" y="804" width="1" height="21" fill="#d0d0d0"/><rect x="630" y="804" width="1" height="21" fill="#d0d0d0"/><rect x="651" y="804" width="1" height="21" fill="#d0d0d0"/><rect x="672" y="804" width="1" height="21" fill="#d0d0d0"/><rect x="693" y="804" width="1" height="21" fill="#d0d0d0"/><rect x="714" y="804" width="1" height="21" fill="#d0d0d0"/><rect x="735" y="804" width="1" height="21" fill="#d0d0d0"/><rect x="756" y="804" width="1" height="21" fill="#d0d0d0"/><rect x="777" y="804" width="1" height="21" fill="#d0d0d0"/><rect x="798" y="804" width="1" height="21" fill="#d0d0d0"/><rect x="819" y="804" width="1" height="21" fill="#d0d0d0"/><rect x="840" y="804" width="1" height="21" fill="#d0d0d0"/><rect x="861" y="804" width="1" height="21" fill="#d0d0d0"/><rect x="882" y="804" width="1" height="21" fill="#d0d0d0"/><rect x="903" y="804" width="1" height="21" fill="#d0d0d0"/><rect x="924" y="804" width="1" height="21" fill="#d0d0d0"/><rect x="945" y="804" width="1" height="21" fill="#d0d0d0"/><rect x="966" y="804" width="1" height="21" fill="#d0d0d0"/><rect x="987" y="804" width="1" height="21" fill="#d0d0d0"/><rect x="1008" y="804" width="1" height="21" fill="#d0d0d0"/><rect x="1029" y="804" width="1" height="21" fill="#d0d0d0"/><rect x="1050" y="804" width="1" height="21" fill="#d0d0d0"/><rect x="1071" y="804" width="1" height="21" fill="#d0d0d0"/><rect x="1092" y="804" width="1" height="21" fill="#d0d0d0"/><rect x="1113" y="804" width="1" height="21" fill="#d0d0d0"/><rect x="1134" y="804" width="1" height="21" fill="#d0d0d0"/><rect x="1155" y="804" width="1" height="21" fill="#d0d0d0"/><rect x="1176" y="804" width="1" height="21" fill="#d0d0d0"/><rect x="1197" y="804" width="1" height="21" fill="#d0d0d0"/><rect x="568" y="826" width="20" height="21" fill="#ff0000"/><rect x="589" y="826" width="20" height="21" fill="#ff0000"/><rect x="610" y="826" width="20" height="21" fill="#ff0000"/><rect x="631" y="826" width="20" height="21" fill="#ff0000"/><rect x="652" y="826" width="20" height="21" fill="#ff0000"/><rect x="673" y="826" width="20" height="21" fill="#ff0000"/><rect x="694" y="826" width="20" height="21" fill="#ff0000"/><rect x="715" y="826" width="20" height="21" fill="#ff0000"/><rect x="736" y="826" width="20" height="21" fill="#ff0000"/><rect x="757" y="826" width="20" height="21" fill="#ff0000"/><rect x="778" y="826" width="20" height="21" fill="#ff0000"/><rect x="799" y="826" width="20" height="21" fill="#ff0000"/><rect x="820" y="826" width="20" height="21" fill="#ff0000"/><rect x="841" y="826" width="20" height="21" fill="#ff0000"/><rect x="862" y="826" width="20" height="21" fill="#ff0000"/><rect x="883" y="826" width="20" height="21" fill="#ff0000"/><rect x="904" y="826" width="20" height="21" fill="#ff0000"/><rect x="925" y="826" width="20" height="21" fill="#ff0000"/><rect x="946" y="826" width="20" height="21" fill="#ff0000"/><rect x="967" y="826" width="20" height="21" fill="#ff0000"/><rect x="988" y="826" width="20" height="21" fill="#ff0000"/><rect x="1009" y="826" width="20" height="21" fill="#ff0000"/><rect x="1030" y="826" width="20" height="21" fill="#ff0000"/><rect x="1051" y="826" width="20" height="21" fill="#ff0000"/><rect x="1072" y="826" width="20" height="21" fill="#ff0000"/><rect x="1093" y="826" width="20" height="21" fill="#ff0000"/><rect x="1114" y="826" width="20" height="21" fill="#ff0000"/><rect x="1135" y="826" width="20" height="21" fill="#ff0000"/><rect x="1156" y="826" width="20" height="21" fill="#ff0000"/><rect x="1177" y="826" width="20" height="21" fill="#ff0000"/><rect x="1198" y="826" width="21" height="21" fill="#ff0000"/><rect x="588" y="826" width="1" height="21" fill="#d0d0d0"/><rect x="609" y="826" width="1" height="21" fill="#d0d0d0"/><rect x="630" y="826" width="1" height="21" fill="#d0d0d0"/><rect x="651" y="826" width="1" height="21" fill="#d0d0d0"/><rect x="672" y="826" width="1" height="21" fill="#d0d0d0"/><rect x="693" y="826" width="1" height="21" fill="#d0d0d0"/><rect x="714" y="826" width="1" height="21" fill="#d0d0d0"/><rect x="735" y="826" width="1" height="21" fill="#d0d0d0"/><rect x="756" y="826" width="1" height="21" fill="#d0d0d0"/><rect x="777" y="826" width="1" height="21" fill="#d0d0d0"/><rect x="798" y="826" width="1" height="21" fill="#d0d0d0"/><rect x="819" y="826" width="1" height="21" fill="#d0d0d0"/><rect x="840" y="826" width="1" height="21" fill="#d0d0d0"/><rect x="861" y="826" width="1" height="21" fill="#d0d0d0"/><rect x="882" y="826" width="1" height="21" fill="#d0d0d0"/><rect x="903" y="826" width="1" height="21" fill="#d0d0d0"/><rect x="924" y="826" width="1" height="21" fill="#d0d0d0"/><rect x="945" y="826" width="1" height="21" fill="#d0d0d0"/><rect x="966" y="826" width="1" height="21" fill="#d0d0d0"/><rect x="987" y="826" width="1" height="21" fill="#d0d0d0"/><rect x="1008" y="826" width="1" height="21" fill="#d0d0d0"/><rect x="1029" y="826" width="1" height="21" fill="#d0d0d0"/><rect x="1050" y="826" width="1" height="21" fill="#d0d0d0"/><rect x="1071" y="826" width="1" height="21" fill="#d0d0d0"/><rect x="1092" y="826" width="1" height="21" fill="#d0d0d0"/><rect x="1113" y="826" width="1" height="21" fill="#d0d0d0"/><rect x="1134" y="826" width="1" height="21" fill="#d0d0d0"/><rect x="1155" y="826" width="1" height="21" fill="#d0d0d0"/><rect x="1176" y="826" width="1" height="21" fill="#d0d0d0"/><rect x="1197" y="826" width="1" height="21" fill="#d0d0d0"/><rect x="568" y="848" width="20" height="21" fill="#ff0000"/><rect x="569" y="849" width="18" height="19" fill="#c0c0c0"/><rect x="589" y="848" width="20" height="21" fill="#ff0000"/><rect x="590" y="849" width="18" height="19" fill="#c0c0c0"/><rect x="610" y="848" width="20" height="21" fill="#ff0000"/><rect x="611" y="849" width="18" height="19" fill="#c0c0c0"/><rect x="631" y="848" width="20" height="21" fill="#ff0000"/><rect x="632" y="849" width="18" height="19" fill="#c0c0c0"/><rect x="652" y="848" width="20" height="21" fill="#ff0000"/><rect x="673" y="848" width="20" height="21" fill="#ff0000"/><rect x="694" y="848" width="20" height="21" fill="#ff0000"/><rect x="695" y="849" width="18" height="19" fill="#c0c0c0"/><rect x="715" y="848" width="20" height="21" fill="#ff0000"/><rect x="716" y="849" width="18" height="19" fill="#c0c0c0"/><rect x="736" y="848" width="20" height="21" fill="#ff0000"/><rect x="737" y="849" width="18" height="19" fill="#c0c0c0"/><rect x="757" y="848" width="20" height="21" fill="#ff0000"/><rect x="758" y="849" width="18" height="19" fill="#c0c0c0"/><rect x="778" y="848" width="20" height="21" fill="#ff0000"/><rect x="799" y="848" width="20" height="21" fill="#ff0000"/><rect x="820" y="848" width="20" height="21" fill="#ff0000"/><rect x="841" y="848" width="20" height="21" fill="#ff0000"/><rect x="842" y="849" width="18" height="19" fill="#c0c0c0"/><rect x="862" y="848" width="20" height="21" fill="#ff0000"/><rect x="863" y="849" width="18" height="19" fill="#c0c0c0"/><rect x="883" y="848" width="20" height="21" fill="#ff0000"/><rect x="904" y="848" width="20" height="21" fill="#ff0000"/><rect x="925" y="848" width="20" height="21" fill="#ff0000"/><rect x="926" y="849" width="18" height="19" fill="#c0c0c0"/><rect x="946" y="848" width="20" height="21" fill="#ff0000"/><rect x="967" y="848" width="20" height="21" fill="#ff0000"/><rect x="988" y="848" width="20" height="21" fill="#ff0000"/><rect x="1009" y="848" width="20" height="21" fill="#ff0000"/><rect x="1010" y="849" width="18" height="19" fill="#c0c0c0"/><rect x="1030" y="848" width="20" height="21" fill="#ff0000"/><rect x="1031" y="849" width="18" height="19" fill="#c0c0c0"/><rect x="1051" y="848" width="20" height="21" fill="#ff0000"/><rect x="1072" y="848" width="20" height="21" fill="#ff0000"/><rect x="1093" y="848" width="20" height="21" fill="#ff0000"/><rect x="1094" y="849" width="18" height="19" fill="#c0c0c0"/><rect x="1114" y="848" width="20" height="21" fill="#ff0000"/><rect x="1115" y="849" width="18" height="19" fill="#c0c0c0"/><rect x="1135" y="848" width="20" height="21" fill="#ff0000"/><rect x="1136" y="849" width="18" height="19" fill="#c0c0c0"/><rect x="1156" y="848" width="20" height="21" fill="#ff0000"/><rect x="1177" y="848" width="20" height="21" fill="#ff0000"/><rect x="1198" y="848" width="21" height="21" fill="#ff0000"/><rect x="588" y="848" width="1" height="21" fill="#d0d0d0"/><rect x="609" y="848" width="1" height="21" fill="#d0d0d0"/><rect x="630" y="848" width="1" height="21" fill="#d0d0d0"/><rect x="651" y="848" width="1" height="21" fill="#d0d0d0"/><rect x="672" y="848" width="1" height="21" fill="#d0d0d0"/><rect x="693" y="848" width="1" height="21" fill="#d0d0d0"/><rect x="714" y="848" width="1" height="21" fill="#d0d0d0"/><rect x="735" y="848" width="1" height="21" fill="#d0d0d0"/><rect x="756" y="848" width="1" height="21" fill="#d0d0d0"/><rect x="777" y="848" width="1" height="21" fill="#d0d0d0"/><rect x="798" y="848" width="1" height="21" fill="#d0d0d0"/><rect x="819" y="848" width="1" height="21" fill="#d0d0d0"/><rect x="840" y="848" width="1" height="21" fill="#d0d0d0"/><rect x="861" y="848" width="1" height="21" fill="#d0d0d0"/><rect x="882" y="848" width="1" height="21" fill="#d0d0d0"/><rect x="903" y="848" width="1" height="21" fill="#d0d0d0"/><rect x="924" y="848" width="1" height="21" fill="#d0d0d0"/><rect x="945" y="848" width="1" height="21" fill="#d0d0d0"/><rect x="966" y="848" width="1" height="21" fill="#d0d0d0"/><rect x="987" y="848" width="1" height="21" fill="#d0d0d0"/><rect x="1008" y="848" width="1" height="21" fill="#d0d0d0"/><rect x="1029" y="848" width="1" height="21" fill="#d0d0d0"/><rect x="1050" y="848" width="1" height="21" fill="#d0d0d0"/><rect x="1071" y="848" width="1" height="21" fill="#d0d0d0"/><rect x="1092" y="848" width="1" height="21" fill="#d0d0d0"/><rect x="1113" y="848" width="1" height="21" fill="#d0d0d0"/><rect x="1134" y="848" width="1" height="21" fill="#d0d0d0"/><rect x="1155" y="848" width="1" height="21" fill="#d0d0d0"/><rect x="1176" y="848" width="1" height="21" fill="#d0d0d0"/><rect x="1197" y="848" width="1" height="21" fill="#d0d0d0"/><rect x="568" y="870" width="20" height="21" fill="#ff0000"/><rect x="569" y="871" width="18" height="19" fill="#c0c0c0"/><rect x="589" y="870" width="20" height="21" fill="#ff0000"/><rect x="590" y="871" width="18" height="19" fill="#c0c0c0"/><rect x="610" y="870" width="20" height="21" fill="#ff0000"/><rect x="611" y="871" width="18" height="19" fill="#c0c0c0"/><rect x="631" y="870" width="20" height="21" fill="#ff0000"/><rect x="632" y="871" width="18" height="19" fill="#c0c0c0"/><rect x="652" y="870" width="20" height="21" fill="#ff0000"/><rect x="653" y="871" width="18" height="19" fill="#c0c0c0"/><rect x="673" y="870" width="20" height="21" fill="#ff0000"/><rect x="674" y="871" width="18" height="19" fill="#c0c0c0"/><rect x="694" y="870" width="20" height="21" fill="#ff0000"/><rect x="695" y="871" width="18" height="19" fill="#c0c0c0"/><rect x="715" y="870" width="20" height="21" fill="#ff0000"/><rect x="716" y="871" width="18" height="19" fill="#c0c0c0"/><rect x="736" y="870" width="20" height="21" fill="#ff0000"/><rect x="737" y="871" width="18" height="19" fill="#c0c0c0"/><rect x="757" y="870" width="20" height="21" fill="#ff0000"/><rect x="758" y="871" width="18" height="19" fill="#c0c0c0"/><rect x="778" y="870" width="20" height="21" fill="#ff0000"/><rect x="779" y="871" width="18" height="19" fill="#c0c0c0"/><rect x="799" y="870" width="20" height="21" fill="#ff0000"/><rect x="800" y="871" width="18" height="19" fill="#c0c0c0"/><rect x="820" y="870" width="20" height="21" fill="#ff0000"/><rect x="821" y="871" width="18" height="19" fill="#c0c0c0"/><rect x="841" y="870" width="20" height="21" fill="#ff0000"/><rect x="842" y="871" width="18" height="19" fill="#c0c0c0"/><rect x="862" y="870" width="20" height="21" fill="#ff0000"/><rect x="863" y="871" width="18" height="19" fill="#c0c0c0"/><rect x="883" y="870" width="20" height="21" fill="#ff0000"/><rect x="884" y="871" width="18" height="19" fill="#c0c0c0"/><rect x="904" y="870" width="20" height="21" fill="#ff0000"/><rect x="905" y="871" width="18" height="19" fill="#c0c0c0"/><rect x="925" y="870" width="20" height="21" fill="#ff0000"/><rect x="926" y="871" width="18" height="19" fill="#c0c0c0"/><rect x="946" y="870" width="20" height="21" fill="#ff0000"/><rect x="947" y="871" width="18" height="19" fill="#c0c0c0"/><rect x="967" y="870" width="20" height="21" fill="#ff0000"/><rect x="968" y="871" width="18" height="19" fill="#c0c0c0"/><rect x="988" y="870" width="20" height="21" fill="#ff0000"/><rect x="989" y="871" width="18" height="19" fill="#c0c0c0"/><rect x="1009" y="870" width="20" height="21" fill="#ff0000"/><rect x="1010" y="871" width="18" height="19" fill="#c0c0c0"/><rect x="1030" y="870" width="20" height="21" fill="#ff0000"/><rect x="1031" y="871" width="18" height="19" fill="#c0c0c0"/><rect x="1051" y="870" width="20" height="21" fill="#ff0000"/><rect x="1052" y="871" width="18" height="19" fill="#c0c0c0"/><rect x="1072" y="870" width="20" height="21" fill="#ff0000"/><rect x="1073" y="871" width="18" height="19" fill="#c0c0c0"/><rect x="1093" y="870" width="20" height="21" fill="#ff0000"/><rect x="1094" y="871" width="18" height="19" fill="#c0c0c0"/><rect x="1114" y="870" width="20" height="21" fill="#ff0000"/><rect x="1115" y="871" width="18" height="19" fill="#c0c0c0"/><rect x="1135" y="870" width="20" height="21" fill="#ff0000"/><rect x="1136" y="871" width="18" height="19" fill="#c0c0c0"/><rect x="1156" y="870" width="20" height="21" fill="#ff0000"/><rect x="1157" y="871" width="18" height="19" fill="#c0c0c0"/><rect x="1177" y="870" width="20" height="21" fill="#ff0000"/><rect x="1178" y="871" width="18" height="19" fill="#c0c0c0"/><rect x="1198" y="870" width="21" height="21" fill="#ff0000"/><rect x="1199" y="871" width="18" height="19" fill="#c0c0c0"/><rect x="588" y="870" width="1" height="21" fill="#d0d0d0"/><rect x="609" y="870" width="1" height="21" fill="#d0d0d0"/><rect x="630" y="870" width="1" height="21" fill="#d0d0d0"/><rect x="651" y="870" width="1" height="21" fill="#d0d0d0"/><rect x="672" y="870" width="1" height="21" fill="#d0d0d0"/><rect x="693" y="870" width="1" height="21" fill="#d0d0d0"/><rect x="714" y="870" width="1" height="21" fill="#d0d0d0"/><rect x="735" y="870" width="1" height="21" fill="#d0d0d0"/><rect x="756" y="870" width="1" height="21" fill="#d0d0d0"/><rect x="777" y="870" width="1" height="21" fill="#d0d0d0"/><rect x="798" y="870" width="1" height="21" fill="#d0d0d0"/><rect x="819" y="870" width="1" height="21" fill="#d0d0d0"/><rect x="840" y="870" width="1" height="21" fill="#d0d0d0"/><rect x="861" y="870" width="1" height="21" fill="#d0d0d0"/><rect x="882" y="870" width="1" height="21" fill="#d0d0d0"/><rect x="903" y="870" width="1" height="21" fill="#d0d0d0"/><rect x="924" y="870" width="1" height="21" fill="#d0d0d0"/><rect x="945" y="870" width="1" height="21" fill="#d0d0d0"/><rect x="966" y="870" width="1" height="21" fill="#d0d0d0"/><rect x="987" y="870" width="1" height="21" fill="#d0d0d0"/><rect x="1008" y="870" width="1" height="21" fill="#d0d0d0"/><rect x="1029" y="870" width="1" height="21" fill="#d0d0d0"/><rect x="1050" y="870" width="1" height="21" fill="#d0d0d0"/><rect x="1071" y="870" width="1" height="21" fill="#d0d0d0"/><rect x="1092" y="870" width="1" height="21" fill="#d0d0d0"/><rect x="1113" y="870" width="1" height="21" fill="#d0d0d0"/><rect x="1134" y="870" width="1" height="21" fill="#d0d0d0"/><rect x="1155" y="870" width="1" height="21" fill="#d0d0d0"/><rect x="1176" y="870" width="1" height="21" fill="#d0d0d0"/><rect x="1197" y="870" width="1" height="21" fill="#d0d0d0"/><rect x="568" y="892" width="20" height="21" fill="#ff0000"/><rect x="569" y="893" width="18" height="19" fill="#c0c0c0"/><rect x="589" y="892" width="20" height="21" fill="#ff0000"/><rect x="590" y="893" width="18" height="19" fill="#c0c0c0"/><rect x="610" y="892" width="20" height="21" fill="#ff0000"/><rect x="611" y="893" width="18" height="19" fill="#c0c0c0"/><rect x="631" y="892" width="20" height="21" fill="#ff0000"/><rect x="632" y="893" width="18" height="19" fill="#c0c0c0"/><rect x="652" y="892" width="20" height="21" fill="#ff0000"/><rect x="653" y="893" width="18" height="19" fill="#c0c0c0"/><rect x="673" y="892" width="20" height="21" fill="#ff0000"/><rect x="674" y="893" width="18" height="19" fill="#c0c0c0"/><rect x="694" y="892" width="20" height="21" fill="#ff0000"/><rect x="695" y="893" width="18" height="19" fill="#c0c0c0"/><rect x="715" y="892" width="20" height="21" fill="#ff0000"/><rect x="716" y="893" width="18" height="19" fill="#c0c0c0"/><rect x="736" y="892" width="20" height="21" fill="#ff0000"/><rect x="737" y="893" width="18" height="19" fill="#c0c0c0"/><rect x="757" y="892" width="20" height="21" fill="#ff0000"/><rect x="758" y="893" width="18" height="19" fill="#c0c0c0"/><rect x="778" y="892" width="20" height="21" fill="#ff0000"/><rect x="799" y="892" width="20" height="21" fill="#ff0000"/><rect x="820" y="892" width="20" height="21" fill="#ff0000"/><rect x="841" y="892" width="20" height="21" fill="#ff0000"/><rect x="862" y="892" width="20" height="21" fill="#ff0000"/><rect x="883" y="892" width="20" height="21" fill="#ff0000"/><rect x="904" y="892" width="20" height="21" fill="#ff0000"/><rect x="925" y="892" width="20" height="21" fill="#ff0000"/><rect x="946" y="892" width="20" height="21" fill="#ff0000"/><rect x="967" y="892" width="20" height="21" fill="#ff0000"/><rect x="988" y="892" width="20" height="21" fill="#ff0000"/><rect x="1009" y="892" width="20" height="21" fill="#ff0000"/><rect x="1030" y="892" width="20" height="21" fill="#ff0000"/><rect x="1051" y="892" width="20" height="21" fill="#ff0000"/><rect x="1072" y="892" width="20" height="21" fill="#ff0000"/><rect x="1093" y="892" width="20" height="21" fill="#ff0000"/><rect x="1114" y="892" width="20" height="21" fill="#ff0000"/><rect x="1135" y="892" width="20" height="21" fill="#ff0000"/><rect x="1156" y="892" width="20" height="21" fill="#ff0000"/><rect x="1177" y="892" width="20" height="21" fill="#ff0000"/><rect x="1198" y="892" width="21" height="21" fill="#ff0000"/><rect x="588" y="892" width="1" height="21" fill="#d0d0d0"/><rect x="609" y="892" width="1" height="21" fill="#d0d0d0"/><rect x="630" y="892" width="1" height="21" fill="#d0d0d0"/><rect x="651" y="892" width="1" height="21" fill="#d0d0d0"/><rect x="672" y="892" width="1" height="21" fill="#d0d0d0"/><rect x="693" y="892" width="1" height="21" fill="#d0d0d0"/><rect x="714" y="892" width="1" height="21" fill="#d0d0d0"/><rect x="735" y="892" width="1" height="21" fill="#d0d0d0"/><rect x="756" y="892" width="1" height="21" fill="#d0d0d0"/><rect x="777" y="892" width="1" height="21" fill="#d0d0d0"/><rect x="798" y="892" width="1" height="21" fill="#d0d0d0"/><rect x="819" y="892" width="1" height="21" fill="#d0d0d0"/><rect x="840" y="892" width="1" height="21" fill="#d0d0d0"/><rect x="861" y="892" width="1" height="21" fill="#d0d0d0"/><rect x="882" y="892" width="1" height="21" fill="#d0d0d0"/><rect x="903" y="892" width="1" height="21" fill="#d0d0d0"/><rect x="924" y="892" width="1" height="21" fill="#d0d0d0"/><rect x="945" y="892" width="1" height="21" fill="#d0d0d0"/><rect x="966" y="892" width="1" height="21" fill="#d0d0d0"/><rect x="987" y="892" width="1" height="21" fill="#d0d0d0"/><rect x="1008" y="892" width="1" height="21" fill="#d0d0d0"/><rect x="1029" y="892" width="1" height="21" fill="#d0d0d0"/><rect x="1050" y="892" width="1" height="21" fill="#d0d0d0"/><rect x="1071" y="892" width="1" height="21" fill="#d0d0d0"/><rect x="1092" y="892" width="1" height="21" fill="#d0d0d0"/><rect x="1113" y="892" width="1" height="21" fill="#d0d0d0"/><rect x="1134" y="892" width="1" height="21" fill="#d0d0d0"/><rect x="1155" y="892" width="1" height="21" fill="#d0d0d0"/><rect x="1176" y="892" width="1" height="21" fill="#d0d0d0"/><rect x="1197" y="892" width="1" height="21" fill="#d0d0d0"/><rect x="568" y="914" width="20" height="21" fill="#ff0000"/><rect x="569" y="915" width="18" height="19" fill="#c0c0c0"/><rect x="589" y="914" width="20" height="21" fill="#ff0000"/><rect x="590" y="915" width="18" height="19" fill="#c0c0c0"/><rect x="610" y="914" width="20" height="21" fill="#ff0000"/><rect x="611" y="915" width="18" height="19" fill="#c0c0c0"/><rect x="631" y="914" width="20" height="21" fill="#ff0000"/><rect x="632" y="915" width="18" height="19" fill="#c0c0c0"/><rect x="652" y="914" width="20" height="21" fill="#ff0000"/><rect x="653" y="915" width="18" height="19" fill="#c0c0c0"/><rect x="673" y="914" width="20" height="21" fill="#ff0000"/><rect x="674" y="915" width="18" height="19" fill="#c0c0c0"/><rect x="694" y="914" width="20" height="21" fill="#ff0000"/><rect x="695" y="915" width="18" height="19" fill="#c0c0c0"/><rect x="715" y="914" width="20" height="21" fill="#ff0000"/><rect x="716" y="915" width="18" height="19" fill="#c0c0c0"/><rect x="736" y="914" width="20" height="21" fill="#ff0000"/><rect x="737" y="915" width="18" height="19" fill="#c0c0c0"/><rect x="757" y="914" width="20" height="21" fill="#ff0000"/><rect x="758" y="915" width="18" height="19" fill="#c0c0c0"/><rect x="778" y="914" width="20" height="21" fill="#ff0000"/><rect x="799" y="914" width="20" height="21" fill="#ff0000"/><rect x="820" y="914" width="20" height="21" fill="#ff0000"/><rect x="841" y="914" width="20" height="21" fill="#ff0000"/><rect x="862" y="914" width="20" height="21" fill="#ff0000"/><rect x="883" y="914" width="20" height="21" fill="#ff0000"/><rect x="904" y="914" width="20" height="21" fill="#ff0000"/><rect x="925" y="914" width="20" height="21" fill="#ff0000"/><rect x="946" y="914" width="20" height="21" fill="#ff0000"/><rect x="967" y="914" width="20" height="21" fill="#ff0000"/><rect x="988" y="914" width="20" height="21" fill="#ff0000"/><rect x="1009" y="914" width="20" height="21" fill="#ff0000"/><rect x="1030" y="914" width="20" height="21" fill="#ff0000"/><rect x="1051" y="914" width="20" height="21" fill="#ff0000"/><rect x="1072" y="914" width="20" height="21" fill="#ff0000"/><rect x="1093" y="914" width="20" height="21" fill="#ff0000"/><rect x="1114" y="914" width="20" height="21" fill="#ff0000"/><rect x="1135" y="914" width="20" height="21" fill="#ff0000"/><rect x="1156" y="914" width="20" height="21" fill="#ff0000"/><rect x="1177" y="914" width="20" height="21" fill="#ff0000"/><rect x="1198" y="914" width="21" height="21" fill="#ff0000"/><rect x="588" y="914" width="1" height="21" fill="#d0d0d0"/><rect x="609" y="914" width="1" height="21" fill="#d0d0d0"/><rect x="630" y="914" width="1" height="21" fill="#d0d0d0"/><rect x="651" y="914" width="1" height="21" fill="#d0d0d0"/><rect x="672" y="914" width="1" height="21" fill="#d0d0d0"/><rect x="693" y="914" width="1" height="21" fill="#d0d0d0"/><rect x="714" y="914" width="1" height="21" fill="#d0d0d0"/><rect x="735" y="914" width="1" height="21" fill="#d0d0d0"/><rect x="756" y="914" width="1" height="21" fill="#d0d0d0"/><rect x="777" y="914" width="1" height="21" fill="#d0d0d0"/><rect x="798" y="914" width="1" height="21" fill="#d0d0d0"/><rect x="819" y="914" width="1" height="21" fill="#d0d0d0"/><rect x="840" y="914" width="1" height="21" fill="#d0d0d0"/><rect x="861" y="914" width="1" height="21" fill="#d0d0d0"/><rect x="882" y="914" width="1" height="21" fill="#d0d0d0"/><rect x="903" y="914" width="1" height="21" fill="#d0d0d0"/><rect x="924" y="914" width="1" height="21" fill="#d0d0d0"/><rect x="945" y="914" width="1" height="21" fill="#d0d0d0"/><rect x="966" y="914" width="1" height="21" fill="#d0d0d0"/><rect x="987" y="914" width="1" height="21" fill="#d0d0d0"/><rect x="1008" y="914" width="1" height="21" fill="#d0d0d0"/><rect x="1029" y="914" width="1" height="21" fill="#d0d0d0"/><rect x="1050" y="914" width="1" height="21" fill="#d0d0d0"/><rect x="1071" y="914" width="1" height="21" fill="#d0d0d0"/><rect x="1092" y="914" width="1" height="21" fill="#d0d0d0"/><rect x="1113" y="914" width="1" height="21" fill="#d0d0d0"/><rect x="1134" y="914" width="1" height="21" fill="#d0d0d0"/><rect x="1155" y="914" width="1" height="21" fill="#d0d0d0"/><rect x="1176" y="914" width="1" height="21" fill="#d0d0d0"/><rect x="1197" y="914" width="1" height="21" fill="#d0d0d0"/><rect x="568" y="936" width="20" height="21" fill="#ff0000"/><rect x="569" y="937" width="18" height="19" fill="#c0c0c0"/><rect x="589" y="936" width="20" height="21" fill="#ff0000"/><rect x="590" y="937" width="18" height="19" fill="#c0c0c0"/><rect x="610" y="936" width="20" height="21" fill="#ff0000"/><rect x="611" y="937" width="18" height="19" fill="#c0c0c0"/><rect x="631" y="936" width="20" height="21" fill="#ff0000"/><rect x="632" y="937" width="18" height="19" fill="#c0c0c0"/><rect x="652" y="936" width="20" height="21" fill="#ff0000"/><rect x="653" y="937" width="18" height="19" fill="#c0c0c0"/><rect x="673" y="936" width="20" height="21" fill="#ff0000"/><rect x="674" y="937" width="18" height="19" fill="#c0c0c0"/><rect x="694" y="936" width="20" height="21" fill="#ff0000"/><rect x="695" y="937" width="18" height="19" fill="#c0c0c0"/><rect x="715" y="936" width="20" height="21" fill="#ff0000"/><rect x="716" y="937" width="18" height="19" fill="#c0c0c0"/><rect x="736" y="936" width="20" height="21" fill="#ff0000"/><rect x="737" y="937" width="18" height="19" fill="#c0c0c0"/><rect x="757" y="936" width="20" height="21" fill="#ff0000"/><rect x="758" y="937" width="18" height="19" fill="#c0c0c0"/><rect x="778" y="936" width="20" height="21" fill="#ff0000"/><rect x="779" y="937" width="18" height="19" fill="#c0c0c0"/><rect x="799" y="936" width="20" height="21" fill="#ff0000"/><rect x="800" y="937" width="18" height="19" fill="#c0c0c0"/><rect x="820" y="936" width="20" height="21" fill="#ff0000"/><rect x="821" y="937" width="18" height="19" fill="#c0c0c0"/><rect x="841" y="936" width="20" height="21" fill="#ff0000"/><rect x="842" y="937" width="18" height="19" fill="#c0c0c0"/><rect x="862" y="936" width="20" height="21" fill="#ff0000"/><rect x="863" y="937" width="18" height="19" fill="#c0c0c0"/><rect x="883" y="936" width="20" height="21" fill="#ff0000"/><rect x="884" y="937" width="18" height="19" fill="#c0c0c0"/><rect x="904" y="936" width="20" height="21" fill="#ff0000"/><rect x="905" y="937" width="18" height="19" fill="#c0c0c0"/><rect x="925" y="936" width="20" height="21" fill="#ff0000"/><rect x="926" y="937" width="18" height="19" fill="#c0c0c0"/><rect x="946" y="936" width="20" height="21" fill="#ff0000"/><rect x="947" y="937" width="18" height="19" fill="#c0c0c0"/><rect x="967" y="936" width="20" height="21" fill="#ff0000"/><rect x="968" y="937" width="18" height="19" fill="#c0c0c0"/><rect x="988" y="936" width="20" height="21" fill="#ff0000"/><rect x="989" y="937" width="18" height="19" fill="#c0c0c0"/><rect x="1009" y="936" width="20" height="21" fill="#ff0000"/><rect x="1010" y="937" width="18" height="19" fill="#c0c0c0"/><rect x="1030" y="936" width="20" height="21" fill="#ff0000"/><rect x="1031" y="937" width="18" height="19" fill="#c0c0c0"/><rect x="1051" y="936" width="20" height="21" fill="#ff0000"/><rect x="1052" y="937" width="18" height="19" fill="#c0c0c0"/><rect x="1072" y="936" width="20" height="21" fill="#ff0000"/><rect x="1073" y="937" width="18" height="19" fill="#c0c0c0"/><rect x="1093" y="936" width="20" height="21" fill="#ff0000"/><rect x="1094" y="937" width="18" height="19" fill="#c0c0c0"/><rect x="1114" y="936" width="20" height="21" fill="#ff0000"/><rect x="1115" y="937" width="18" height="19" fill="#c0c0c0"/><rect x="1135" y="936" width="20" height="21" fill="#ff0000"/><rect x="1136" y="937" width="18" height="19" fill="#c0c0c0"/><rect x="1156" y="936" width="20" height="21" fill="#ff0000"/><rect x="1157" y="937" width="18" height="19" fill="#c0c0c0"/><rect x="1177" y="936" width="20" height="21" fill="#ff0000"/><rect x="1178" y="937" width="18" height="19" fill="#c0c0c0"/><rect x="1198" y="936" width="21" height="21" fill="#ff0000"/><rect x="1199" y="937" width="18" height="19" fill="#c0c0c0"/><rect x="588" y="936" width="1" height="21" fill="#d0d0d0"/><rect x="609" y="936" width="1" height="21" fill="#d0d0d0"/><rect x="630" y="936" width="1" height="21" fill="#d0d0d0"/><rect x="651" y="936" width="1" height="21" fill="#d0d0d0"/><rect x="672" y="936" width="1" height="21" fill="#d0d0d0"/><rect x="693" y="936" width="1" height="21" fill="#d0d0d0"/><rect x="714" y="936" width="1" height="21" fill="#d0d0d0"/><rect x="735" y="936" width="1" height="21" fill="#d0d0d0"/><rect x="756" y="936" width="1" height="21" fill="#d0d0d0"/><rect x="777" y="936" width="1" height="21" fill="#d0d0d0"/><rect x="798" y="936" width="1" height="21" fill="#d0d0d0"/><rect x="819" y="936" width="1" height="21" fill="#d0d0d0"/><rect x="840" y="936" width="1" height="21" fill="#d0d0d0"/><rect x="861" y="936" width="1" height="21" fill="#d0d0d0"/><rect x="882" y="936" width="1" height="21" fill="#d0d0d0"/><rect x="903" y="936" width="1" height="21" fill="#d0d0d0"/><rect x="924" y="936" width="1" height="21" fill="#d0d0d0"/><rect x="945" y="936" width="1" height="21" fill="#d0d0d0"/><rect x="966" y="936" width="1" height="21" fill="#d0d0d0"/><rect x="987" y="936" width="1" height="21" fill="#d0d0d0"/><rect x="1008" y="936" width="1" height="21" fill="#d0d0d0"/><rect x="1029" y="936" width="1" height="21" fill="#d0d0d0"/><rect x="1050" y="936" width="1" height="21" fill="#d0d0d0"/><rect x="1071" y="936" width="1" height="21" fill="#d0d0d0"/><rect x="1092" y="936" width="1" height="21" fill="#d0d0d0"/><rect x="1113" y="936" width="1" height="21" fill="#d0d0d0"/><rect x="1134" y="936" width="1" height="21" fill="#d0d0d0"/><rect x="1155" y="936" width="1" height="21" fill="#d0d0d0"/><rect x="1176" y="936" width="1" height="21" fill="#d0d0d0"/><rect x="1197" y="936" width="1" height="21" fill="#d0d0d0"/><rect x="568" y="958" width="20" height="21" fill="#0000ff"/><rect x="589" y="958" width="20" height="21" fill="#0000ff"/><rect x="610" y="958" width="20" height="21" fill="#0000ff"/><rect x="631" y="958" width="20" height="21" fill="#0000ff"/><rect x="652" y="958" width="20" height="21" fill="#0000ff"/><rect x="673" y="958" width="20" height="21" fill="#0000ff"/><rect x="694" y="958" width="20" height="21" fill="#0000ff"/><rect x="715" y="958" width="20" height="21" fill="#0000ff"/><rect x="736" y="958" width="20" height="21" fill="#0000ff"/><rect x="757" y="958" width="20" height="21" fill="#0000ff"/><rect x="778" y="958" width="20" height="21" fill="#0000ff"/><rect x="799" y="958" width="20" height="21" fill="#0000ff"/><rect x="820" y="958" width="20" height="21" fill="#0000ff"/><rect x="841" y="958" width="20" height="21" fill="#0000ff"/><rect x="862" y="958" width="20" height="21" fill="#0000ff"/><rect x="883" y="958" width="20" height="21" fill="#0000ff"/><rect x="904" y="958" width="20" height="21" fill="#0000ff"/><rect x="925" y="958" width="20" height="21" fill="#0000ff"/><rect x="946" y="958" width="20" height="21" fill="#0000ff"/><rect x="967" y="958" width="20" height="21" fill="#0000ff"/><rect x="988" y="958" width="20" height="21" fill="#0000ff"/><rect x="1009" y="958" width="20" height="21" fill="#0000ff"/><rect x="1030" y="958" width="20" height="21" fill="#0000ff"/><rect x="1051" y="958" width="20" height="21" fill="#0000ff"/><rect x="1072" y="958" width="20" height="21" fill="#0000ff"/><rect x="1093" y="958" width="20" height="21" fill="#0000ff"/><rect x="1114" y="958" width="20" height="21" fill="#0000ff"/><rect x="1135" y="958" width="20" height="21" fill="#0000ff"/><rect x="1156" y="958" width="20" height="21" fill="#0000ff"/><rect x="1177" y="958" width="20" height="21" fill="#0000ff"/><rect x="1198" y="958" width="21" height="21" fill="#0000ff"/><rect x="588" y="958" width="1" height="21" fill="#d0d0d0"/><rect x="609" y="958" width="1" height="21" fill="#d0d0d0"/><rect x="630" y="958" width="1" height="21" fill="#d0d0d0"/><rect x="651" y="958" width="1" height="21" fill="#d0d0d0"/><rect x="672" y="958" width="1" height="21" fill="#d0d0d0"/><rect x="693" y="958" width="1" height="21" fill="#d0d0d0"/><rect x="714" y="958" width="1" height="21" fill="#d0d0d0"/><rect x="735" y="958" width="1" height="21" fill="#d0d0d0"/><rect x="756" y="958" width="1" height="21" fill="#d0d0d0"/><rect x="777" y="958" width="1" height="21" fill="#d0d0d0"/><rect x="798" y="958" width="1" height="21" fill="#d0d0d0"/><rect x="819" y="958" width="1" height="21" fill="#d0d0d0"/><rect x="840" y="958" width="1" height="21" fill="#d0d0d0"/><rect x="861" y="958" width="1" height="21" fill="#d0d0d0"/><rect x="882" y="958" width="1" height="21" fill="#d0d0d0"/><rect x="903" y="958" width="1" height="21" fill="#d0d0d0"/><rect x="924" y="958" width="1" height="21" fill="#d0d0d0"/><rect x="945" y="958" width="1" height="21" fill="#d0d0d0"/><rect x="966" y="958" width="1" height="21" fill="#d0d0d0"/><rect x="987" y="958" width="1" height="21" fill="#d0d0d0"/><rect x="1008" y="958" width="1" height="21" fill="#d0d0d0"/><rect x="1029" y="958" width="1" height="21" fill="#d0d0d0"/><rect x="1050" y="958" width="1" height="21" fill="#d0d0d0"/><rect x="1071" y="958" width="1" height="21" fill="#d0d0d0"/><rect x="1092" y="958" width="1" height="21" fill="#d0d0d0"/><rect x="1113" y="958" width="1" height="21" fill="#d0d0d0"/><rect x="1134" y="958" width="1" height="21" fill="#d0d0d0"/><rect x="1155" y="958" width="1" height="21" fill="#d0d0d0"/><rect x="1176" y="958" width="1" height="21" fill="#d0d0d0"/><rect x="1197" y="958" width="1" height="21" fill="#d0d0d0"/><rect x="614" y="676" width="12" height="13" fill="#000"/></svg>
<svg class="a" style="left:1224px;top:651px" width="11" height="10"><path d="M1 8.5 L5.5 1 L10 8.5Z" fill="#8a8a8a"/></svg>
<div class="a" style="left:1224px;top:664px;width:11px;height:303px;border-radius:5px;background:linear-gradient(90deg,#2e2e2e,#505050 50%,#2e2e2e);border:1px solid #262626"></div>
<svg class="a" style="left:1224px;top:970px" width="11" height="10"><path d="M1 1.5 L5.5 9 L10 1.5Z" fill="#8a8a8a"/></svg>
<svg class="a" style="left:8px;top:985px" width="8" height="9"><path d="M7 1 L1 4.5 L7 8Z" fill="#ddd"/></svg>
<div class="a" style="left:556px;top:984px;width:303px;height:11px;border-radius:5px;background:linear-gradient(#4a4a4a,#383838);border:1px solid #262626"></div>
<svg class="a" style="left:1224px;top:985px" width="8" height="9"><path d="M1 1 L7 4.5 L1 8Z" fill="#ddd"/></svg>
<svg class="a" style="left:0;top:0" width="1280" height="1024"><path d="M1255 63 L1260 58 L1265 63Z" fill="#f8f8f8" stroke="#f8f8f8" stroke-width="0.8" stroke-linejoin="round"/><path d="M1255 988 L1260 993 L1265 988Z" fill="#f4f4f4" stroke="#f4f4f4" stroke-width="1.5" stroke-linejoin="round"/><defs><linearGradient id="gold" x1="0" y1="0" x2="0" y2="1"><stop offset="0" stop-color="#fff27a"/><stop offset="0.5" stop-color="#f0d820"/><stop offset="1" stop-color="#c8a810"/></linearGradient></defs><path d="M1268 83.5 Q1276 81 1275.5 89 Q1275.5 96 1266.5 97" stroke="#e8cc10" stroke-width="1.8" fill="none"/><path d="M1250.5 93 Q1247 91 1246 87.5" stroke="#e8cc10" stroke-width="2" fill="none"/><ellipse cx="1259" cy="102.5" rx="9.5" ry="3.3" fill="#f0d420" stroke="#c8a810" stroke-width="0.5"/><path d="M1250.3 87 L1267.5 87 Q1268 97 1262 100 L1256 100 Q1250 97 1250.3 87Z" fill="url(#gold)"/><ellipse cx="1259" cy="87.5" rx="8.8" ry="2.8" fill="#f8e860" stroke="#d8b818" stroke-width="0.6"/><circle cx="1259.2" cy="85.5" r="1.8" fill="#f4dc40" stroke="#c8a810" stroke-width="0.4"/><path d="M1253.3 93 l1.3 -2.3 l1.3 2.3 l-1.3 2.3Z M1257.8 95 l1.5 -2.6 l1.5 2.6 l-1.5 2.6Z M1264.2 93 l1.3 -2.3 l1.3 2.3 l-1.3 2.3Z" fill="#d82828"/><circle cx="1248.2" cy="78" r="3.3" fill="#f4f4f4"/><circle cx="1247" cy="82" r="2.5" fill="#eeeeee"/><circle cx="1246.8" cy="86" r="2" fill="#e8e8e8"/><rect x="1245" y="119.5" width="29" height="23.5" rx="1.5" fill="#b8b8b8"/><rect x="1246.5" y="121" width="26" height="20" fill="#1e2826"/><path d="M1248 123 L1250 124.5 L1248 126 M1250.5 127h3" stroke="#ddd" stroke-width="0.8" fill="none"/><path d="M1260 139 L1266 123 L1270 123 L1264 139Z" fill="#3a4a46"/><rect x="1245" y="142" width="29" height="1.5" fill="#777"/><rect x="1245" y="158" width="29" height="24" rx="2" fill="#8a8680"/><rect x="1247" y="160" width="25" height="18" fill="#a81c1c"/><text x="1249" y="175" font-size="11" fill="#f4f4f4" font-family="Liberation Sans" font-weight="700">#_</text><rect x="1245" y="180" width="29" height="2" fill="#555"/><rect x="1247" y="201" width="24" height="22" fill="#f8f8f8" stroke="#b0b0b0" stroke-width="0.6"/><path d="M1249.5 206h18M1249.5 210h18M1249.5 214h14M1249.5 218h12" stroke="#c0c0c0" stroke-width="0.9"/><path d="M1248 200.5h22" stroke="#555" stroke-width="1.6" stroke-dasharray="1.2 1.3"/><path d="M1261 218 L1273 205" stroke="#f09030" stroke-width="3.2"/><path d="M1272 206 L1275 202.5" stroke="#e03030" stroke-width="3"/><path d="M1259.5 219.5 L1261.5 217" stroke="#222" stroke-width="1.5"/><path d="M1264 254 L1273 263" stroke="#2a2a2a" stroke-width="4.5" stroke-linecap="round"/><circle cx="1258" cy="247" r="10" fill="#2c2c2c" stroke="#e88a2a" stroke-width="2.8"/><ellipse cx="1255" cy="243.5" rx="3" ry="2" fill="#888"/><path d="M1248 330 Q1248 317 1260 317 Q1272 317 1272 330" stroke="#0a18e8" stroke-width="2.2" fill="none"/><rect x="1244.5" y="326" width="6" height="16" rx="3" fill="#0a18e8"/><rect x="1269.5" y="326" width="6" height="16" rx="3" fill="#0a18e8"/><path d="M1252 334 L1253 328 L1255 331 L1257 323 L1259 333 L1261 324 L1263 331 L1265 326 L1267 334 L1267 336 L1265 341 L1263 338 L1261 343 L1259 338 L1257 342 L1255 337 L1253 340 L1252 336Z" fill="#e8b828"/><path d="M1252 335 L1267 335" stroke="#f01818" stroke-width="2.5"/><path d="M1253 369 L1266 381" stroke="#f0f0f0" stroke-width="3.5"/><path d="M1253 369 L1266 381" stroke="#444" stroke-width="1"/><path d="M1266 381 L1274 390" stroke="#222" stroke-width="2"/><path d="M1247 362 L1258 372" stroke="#c8a828" stroke-width="5.5" stroke-linecap="round"/><path d="M1246 361 L1249 364" stroke="#333" stroke-width="3"/><defs><radialGradient id="drp" cx="0.4" cy="0.6" r="0.6"><stop offset="0" stop-color="#ffc8a0"/><stop offset="0.5" stop-color="#f08848"/><stop offset="1" stop-color="#c86020"/></radialGradient></defs><path d="M1260 402 C1262 410 1269 416 1269 422 A9.2 9.2 0 0 1 1250.8 422 C1250.8 416 1258 410 1260 402Z" fill="url(#drp)"/><path d="M1256 560 L1273 543" stroke="#e8d8a0" stroke-width="2.2"/><path d="M1272 542 L1276 540" stroke="#c8b070" stroke-width="3"/><path d="M1246 565 Q1244 572 1250 573 Q1256 572 1258 566 Q1262 562 1258 559 Q1255 555 1252 559 Q1247 559 1246 565Z" fill="#6a1010"/><path d="M1250 567 l5 -5" stroke="#f0f0f0" stroke-width="2"/><path d="M1247 590 L1273 590 L1275 606 L1245 606Z" fill="#ececec" stroke="#a0a0a0" stroke-width="0.6"/><rect x="1245" y="606" width="30" height="4.5" fill="#c8c8c8"/><rect x="1249" y="592" width="4" height="12" fill="#2a2"/><rect x="1249" y="592" width="4" height="3" fill="#e22"/><rect x="1256" y="592" width="5" height="12" fill="#2a2a2a"/><rect x="1264" y="592" width="5" height="12" fill="#2a2a2a"/><rect x="1254.5" y="599" width="8" height="5" fill="#d8d8d8" stroke="#888" stroke-width="0.5"/><rect x="1262.5" y="596" width="8" height="5" fill="#d8d8d8" stroke="#888" stroke-width="0.5"/><ellipse cx="1260" cy="640" rx="9" ry="11" fill="#111"/><ellipse cx="1260" cy="643" rx="5.5" ry="8" fill="#e8e8e8"/><ellipse cx="1260" cy="629" rx="5.5" ry="5.5" fill="#111"/><ellipse cx="1258" cy="628" rx="1.5" ry="1.8" fill="#fff"/><ellipse cx="1262" cy="628" rx="1.5" ry="1.8" fill="#fff"/><path d="M1255 632 L1265 632 L1260 636Z" fill="#f0a818"/><path d="M1258 646 L1273 636" stroke="#8a4a20" stroke-width="1.6"/><ellipse cx="1254" cy="647" rx="5.5" ry="4.5" fill="#d87a20"/><path d="M1251 653h6M1261 653h6" stroke="#f0a818" stroke-width="1.8"/><rect x="1244.5" y="664.5" width="31" height="30.5" fill="#c8d0e8" stroke="#98a8d0"/><rect x="1246.5" y="666.5" width="27" height="20" fill="#f0f4fc"/><path d="M1248 668h4.5v6.5h4V668H1262v15h-5.5v-4.5h-4v4.5H1248z" fill="#2a3a88"/><path d="M1259 669h12v8h-7v2h7v4h-12v-8h7v-2h-7z" fill="#2a3a88"/><path d="M1262 671.5h6v3h-6zM1262 679.5h6" fill="#fff"/><path d="M1249 690h22" stroke="#7888b8" stroke-width="2" stroke-dasharray="2.2 1.6"/><defs><linearGradient id="rg" x1="0" y1="0" x2="1" y2="1"><stop offset="0" stop-color="#d01010"/><stop offset="1" stop-color="#600000"/></linearGradient></defs><rect x="1246.5" y="705.5" width="27.5" height="28.5" rx="4" fill="url(#rg)" stroke="#c8a030" stroke-width="1"/><circle cx="1260" cy="719" r="3.2" fill="#6a8ac8"/><circle cx="1260" cy="711" r="3" fill="#6a8ac8"/><circle cx="1253" cy="725" r="3" fill="#6a8ac8"/><circle cx="1267" cy="725" r="3" fill="#6a8ac8"/><path d="M1260 711v8l-7 6M1260 719l7 6" stroke="#6a8ac8" stroke-width="2"/><rect x="1244.5" y="744" width="31.5" height="32" rx="4" fill="#1c2226" stroke="#6a6a6a"/><rect x="1245.5" y="745" width="29.5" height="14" rx="3" fill="#a8b0b4" opacity="0.55"/><text x="1247" y="770" font-size="20" fill="#f4f4f4" font-family="Liberation Sans" font-weight="700" letter-spacing="-1.5">LV</text><text x="1268" y="757" font-size="10" fill="#f4f4f4" font-family="Liberation Sans" font-weight="700">2</text><rect x="1243.5" y="783.5" width="32.5" height="32.5" fill="#f0f0e0"/><path d="M1251.5 783.5v32.5M1259.7 783.5v32.5M1267.8 783.5v32.5" stroke="#a0a090" stroke-width="0.8"/><rect x="1249" y="783.5" width="5" height="18" fill="#111"/><rect x="1257" y="783.5" width="5" height="18" fill="#111"/><rect x="1265" y="783.5" width="5" height="18" fill="#111"/><path d="M1247 829 L1273 829 L1275 845 L1245 845Z" fill="#4a4a4a" stroke="#888" stroke-width="0.6"/><rect x="1244" y="845" width="32" height="5" fill="#c8c8c8"/><path d="M1247 847.5h26" stroke="#e8c820" stroke-width="2.2"/><rect x="1250" y="831" width="9" height="5" fill="#ccc"/><rect x="1258" y="836" width="9" height="5" fill="#ccc"/><rect x="1265" y="832" width="9" height="5" fill="#ccc"/><rect x="1253" y="836" width="3" height="7" fill="#222"/><rect x="1261" y="830" width="3" height="6" fill="#222"/><rect x="1268" y="837" width="3" height="6" fill="#222"/><path d="M1260 866 L1275 886 L1245 886Z" fill="#e8305a"/><path d="M1250 886 Q1260 874 1270 886" stroke="#c01a40" stroke-width="0.8" fill="none"/><text x="1243.5" y="893" font-size="6.3" fill="#5a2030" font-family="Liberation Sans" font-weight="700" letter-spacing="0.2">ARDOUR</text><rect x="1246.5" y="906" width="28" height="28" rx="4" fill="url(#rg)" stroke="#c8a030" stroke-width="1"/><rect x="1252" y="910" width="5" height="8" fill="#1a2a4a" stroke="#8ab" stroke-width="0.5"/><rect x="1264" y="921" width="5" height="8" fill="#1a2a4a" stroke="#8ab" stroke-width="0.5"/><path d="M1257 914 L1264 925" stroke="#8ab0d8" stroke-width="1.2"/><path d="M1253 913h3M1265 926h3" stroke="#fff" stroke-width="1"/><rect x="1246.5" y="946" width="28" height="28" rx="4" fill="url(#rg)" stroke="#c8a030" stroke-width="1"/><ellipse cx="1259" cy="963" rx="8" ry="4" fill="none" stroke="#2a2a2a" stroke-width="1.8"/><ellipse cx="1258" cy="963" rx="3" ry="2.2" fill="#5a80b8"/><path d="M1261 950v13" stroke="#5a80b8" stroke-width="1.3"/></svg>
<div class="a" style="left:1244px;top:271px;width:32px;height:40px;background:repeating-linear-gradient(45deg,#c89098 0 1.5px,#e8d8e0 1.5px 3px,#b07884 3px 4.5px),#c0a0a8"></div>
<div class="a" style="left:1244px;top:271px;width:32px;height:40px;background:repeating-linear-gradient(-45deg,rgba(255,255,255,0.45) 0 1px,transparent 1px 4px,rgba(90,90,140,0.35) 4px 5px,transparent 5px 7px)"></div>
<div class="a" style="left:0px;top:1000px;width:1280px;height:24px;background:#2c2c2e"></div>
<svg class="a" style="left:2px;top:1003px" width="20" height="18"><path d="M1 3h6l1.5 2H19v12H1z" fill="#b8b8a8" stroke="#6a6a60" stroke-width="0.8"/><rect x="1" y="6" width="18" height="11" fill="#a8a898"/><rect x="7" y="9" width="6" height="5" rx="1" fill="none" stroke="#666" stroke-width="0.8"/></svg>
<div class="a" style="left:27px;top:1004px;width:3px;height:4px;background:#4a4a4a"></div>
<div class="a" style="left:27px;top:1010px;width:3px;height:4px;background:#4a4a4a"></div>
<div class="a" style="left:27px;top:1016px;width:3px;height:4px;background:#4a4a4a"></div>
<svg class="a" style="left:37px;top:1004px" width="16" height="17"><rect x="0.5" y="0.5" width="15" height="16" rx="2" fill="#9a1010" stroke="#5a0808"/><path d="M8 3v8M5 11 Q8 14 11 11" stroke="#d8b0b0" stroke-width="1" fill="none"/></svg>
<div class="t" style="left:61.3px;top:1005.0px;font-size:13px;color:#ececec;font-weight:400;letter-spacing:0.65px;">Claudia</div>
<svg class="a" style="left:225px;top:1005px" width="16" height="15"><rect x="0.5" y="0.5" width="15" height="14" fill="#2e3434" stroke="#b0b0b0"/><path d="M3 4 L5.5 6 L3 8 M6 9h4" stroke="#ddd" stroke-width="0.9" fill="none"/></svg>
<div class="t" style="left:248.4px;top:1005.0px;font-size:13px;color:#ececec;font-weight:400;letter-spacing:0.71px;">denis@Zikii-1: /usr/s...</div>
<svg class="a" style="left:410px;top:1003px" width="18" height="18" viewBox="0 0 46 46"><circle cx="23" cy="25" r="21" fill="#ff6a20"/><circle cx="26" cy="19" r="11" fill="#3a5ad0"/><path d="M3 24 C4 38 16 46 28 44 C18 42 12 34 14 26 C16 32 22 35 28 32 C22 31 18 27 19 22 C15 22 12 18 13 14 C10 16 8 12 10 6 C6 10 3 16 3 24Z" fill="#ff8a1a"/><path d="M32 2 C42 8 47 20 43 32 C41 24 38 19 33 16 C36 12 35 6 32 2Z" fill="#ffd23a"/></svg>
<div class="t" style="left:435px;top:1005.0px;font-size:13px;color:#ececec;font-weight:400;letter-spacing:0.67px;">Linux MAO | Tuxguitar...</div>
<svg class="a" style="left:599px;top:1003px" width="17" height="18"><ellipse cx="9" cy="10" rx="5" ry="6.5" fill="#1a1a1a"/><ellipse cx="9" cy="5" rx="3.5" ry="3.5" fill="#1a1a1a"/><path d="M6 7h6l-3 2.5z" fill="#f0a818"/><ellipse cx="6" cy="13" rx="4" ry="3" fill="#d08030"/><path d="M7 12 L16 5" stroke="#999" stroke-width="1"/><path d="M4 17h4M10 17h4" stroke="#f0a818" stroke-width="1.5"/></svg>
<div class="t" style="left:623.4px;top:1005.0px;font-size:13px;color:#ececec;font-weight:400;letter-spacing:0.61px;">TuxGuitar - zucchero-...</div>
<div class="a" style="left:782px;top:1001px;width:185px;height:23px;background:linear-gradient(#181818,#3a3a3a 45%,#6a6a6a)"></div>
<svg class="a" style="left:786px;top:1004px" width="13" height="18"><defs><radialGradient id="tdr" cx="0.4" cy="0.65" r="0.6"><stop offset="0" stop-color="#ffd0a8"/><stop offset="0.5" stop-color="#f08848"/><stop offset="1" stop-color="#c06020"/></radialGradient></defs><path d="M6.5 1 C7.5 6 12 9 12 12 A5.5 5.5 0 0 1 1 12 C1 9 5.5 6 6.5 1Z" fill="url(#tdr)"/></svg>
<div class="t" style="left:810.6px;top:1005.0px;font-size:13px;color:#ececec;font-weight:400;letter-spacing:0.79px;">Qsynth - A fluidsynth ...</div>
<svg class="a" style="left:973px;top:1005px" width="16" height="15"><path d="M1 1.5h3M1 5.5h3M1 9.5h3M1 13.5h3M6 1.5h9.5M6 5.5h9.5M6 9.5h9.5M6 13.5h9.5" stroke="#2a70d8" stroke-width="2.2"/></svg>
<div class="t" style="left:997px;top:1005.0px;font-size:13px;color:#ececec;font-weight:400;letter-spacing:0.79px;">Qsynth: Canaux [Qsy...</div>
<div class="a" style="left:1157px;top:1001px;width:29px;height:23px;border:2px solid #f0f0f0;background:#2c2c2e"></div>
<div class="a" style="left:1160px;top:1004px;width:20px;height:5px;border:1.5px solid #f0f0f0"></div><div class="a" style="left:1160px;top:1012px;width:12px;height:9px;border:1.5px solid #f0f0f0"></div>
<svg class="a" style="left:1172px;top:1008px" width="8" height="12"><path d="M1 1h6L4 6l3 5H1l3-5z" fill="#f0b020"/></svg>
<div class="a" style="left:1188px;top:1000px;width:1px;height:24px;background:#3a3a3c"></div>
<div class="a" style="left:1219px;top:1000px;width:1px;height:24px;background:#3a3a3c"></div>
<div class="a" style="left:1250px;top:1000px;width:1px;height:24px;background:#3a3a3c"></div>
<div class="a" style="left:6px;top:133px;width:978px;height:229px;border-radius:6px 6px 4px 4px;background:#3a3a3c;box-shadow:2px 5px 20px 3px rgba(0,0,0,0.6),0 0 2px rgba(0,0,0,0.6)"></div>
<div class="a" style="left:6px;top:133px;width:978px;height:27px;border-radius:6px 6px 0 0;background:linear-gradient(#5c5c5e,#48484a 45%,#3b3b3d)"></div>
<div class="a" style="left:9px;top:160px;width:973px;height:196px;background:#eeebe6"></div>
<div class="t" style="left:286px;top:140.0px;font-size:13px;color:#dcdcdc;font-weight:700;letter-spacing:1.24px;;-webkit-text-stroke:0.3px #dcdcdc">Qsynth - A fluidsynth Qt GUI Interface [Qsynth1]</div>
<div class="a" style="left:919px;top:138px;width:18px;height:18px;border-radius:50%;background:linear-gradient(#262626,#383838 50%,#585858)"></div>
<div class="a" style="left:922.7px;top:141.7px;width:10.6px;height:10.6px;border-radius:50%;background:linear-gradient(#6c6c6c,#2e2e2e)"></div>
<div class="a" style="left:940px;top:138px;width:18px;height:18px;border-radius:50%;background:linear-gradient(#262626,#383838 50%,#585858)"></div>
<div class="a" style="left:943.7px;top:141.7px;width:10.6px;height:10.6px;border-radius:50%;background:linear-gradient(#6c6c6c,#2e2e2e)"></div>
<div class="a" style="left:961px;top:138px;width:18px;height:18px;border-radius:50%;background:linear-gradient(#262626,#383838 50%,#585858)"></div>
<div class="a" style="left:964.7px;top:141.7px;width:10.6px;height:10.6px;border-radius:50%;background:linear-gradient(#6c6c6c,#2e2e2e)"></div>
<div class="a" style="left:14px;top:183px;width:123px;height:109px;border:1px solid #d3cfc9;border-radius:3px;box-shadow:inset 1px 1px 0 #f7f6f3"></div>
<div class="a" style="left:266px;top:183px;width:268px;height:137px;border:1px solid #d3cfc9;border-radius:3px;box-shadow:inset 1px 1px 0 #f7f6f3"></div>
<div class="a" style="left:540px;top:183px;width:275px;height:137px;border:1px solid #d3cfc9;border-radius:3px;box-shadow:inset 1px 1px 0 #f7f6f3"></div>
<div class="a" style="left:820px;top:183px;width:49px;height:137px;border:1px solid #d3cfc9;border-radius:3px;box-shadow:inset 1px 1px 0 #f7f6f3"></div>
<div class="t" style="left:14px;top:165.0px;font-size:13px;color:#111;font-weight:700;letter-spacing:1.18px;;-webkit-text-stroke:0.3px #111">Général</div>
<div class="t" style="left:265px;top:165.0px;font-size:13px;color:#111;font-weight:700;letter-spacing:1.34px;;-webkit-text-stroke:0.3px #111">Réverbération</div>
<div class="t" style="left:539px;top:165.0px;font-size:13px;color:#111;font-weight:700;letter-spacing:0.80px;;-webkit-text-stroke:0.3px #111">Chorus</div>
<div class="t" style="left:50.5px;top:190.0px;font-size:13px;color:#111;font-weight:400;letter-spacing:1.13px;;will-change:transform;-webkit-text-stroke:0.2px #111">Volume</div>
<div class="a" style="left:50px;top:203px;width:8px;height:1px;background:#222"></div>
<div class="t" style="left:283px;top:190.0px;font-size:13px;color:#111;font-weight:400;letter-spacing:0.37px;;will-change:transform;-webkit-text-stroke:0.2px #111">Pièce</div>
<div class="t" style="left:331.5px;top:190.0px;font-size:13px;color:#111;font-weight:400;letter-spacing:0.92px;;will-change:transform;-webkit-text-stroke:0.2px #111">Atténuation</div>
<div class="t" style="left:414px;top:190.0px;font-size:13px;color:#111;font-weight:400;letter-spacing:0.70px;;will-change:transform;-webkit-text-stroke:0.2px #111">Largeur</div>
<div class="t" style="left:477.5px;top:190.0px;font-size:13px;color:#111;font-weight:400;letter-spacing:0.61px;;will-change:transform;-webkit-text-stroke:0.2px #111">Niveau</div>
<div class="t" style="left:575px;top:190.0px;font-size:13px;color:#111;font-weight:400;letter-spacing:-0.39px;;will-change:transform;-webkit-text-stroke:0.2px #111">N</div>
<div class="t" style="left:624px;top:190.0px;font-size:13px;color:#111;font-weight:400;letter-spacing:0.61px;;will-change:transform;-webkit-text-stroke:0.2px #111">Niveau</div>
<div class="t" style="left:681.5px;top:190.0px;font-size:13px;color:#111;font-weight:400;letter-spacing:0.68px;;will-change:transform;-webkit-text-stroke:0.2px #111">Vitesse</div>
<div class="t" style="left:738.5px;top:190.0px;font-size:13px;color:#111;font-weight:400;letter-spacing:0.58px;;will-change:transform;-webkit-text-stroke:0.2px #111">Profondeur</div>
<div class="a" style="left:290.3px;top:203.5px;width:3.5px;height:1px;background:#222"></div>
<div class="a" style="left:332px;top:203.5px;width:9.5px;height:1px;background:#222"></div>
<div class="a" style="left:414.4px;top:203.5px;width:6.5px;height:1px;background:#222"></div>
<div class="a" style="left:477px;top:203.5px;width:9.5px;height:1px;background:#222"></div>
<div class="a" style="left:575px;top:203.5px;width:9px;height:1px;background:#222"></div>
<div class="a" style="left:637px;top:203.5px;width:6px;height:1px;background:#222"></div>
<div class="a" style="left:694.6px;top:203.5px;width:4.5px;height:1px;background:#222"></div>
<div class="a" style="left:778px;top:203.5px;width:7px;height:1px;background:#222"></div>
<svg class="a" style="left:0;top:0" width="1000" height="370"><defs><radialGradient id="kg" cx="0.35" cy="0.3" r="0.75"><stop offset="0" stop-color="#fbfbfb"/><stop offset="0.55" stop-color="#d2d2d2"/><stop offset="1" stop-color="#a8a8a8"/></radialGradient></defs><circle cx="76" cy="236.0" r="27.4" fill="#e6e4e0" opacity="0.7"/><circle cx="76" cy="234.5" r="26.4" fill="#f1efec" stroke="#d9d6d1" stroke-width="0.8"/><path d="M59.03 254.72 A26.4 26.4 0 0 1 74.62 208.14 L75.04 216.23 A18.3 18.3 0 0 0 64.24 248.52Z" fill="#2f8bd0"/><line x1="62.50" y1="250.59" x2="59.42" y2="254.26" stroke="#6a90b8" stroke-width="1.1"/><line x1="56.90" y1="243.22" x2="52.53" y2="245.22" stroke="#6a90b8" stroke-width="1.1"/><line x1="55.00" y1="234.17" x2="50.20" y2="234.09" stroke="#6a90b8" stroke-width="1.1"/><line x1="57.18" y1="225.17" x2="52.88" y2="223.04" stroke="#6a90b8" stroke-width="1.1"/><line x1="63.02" y1="217.99" x2="60.05" y2="214.22" stroke="#6a90b8" stroke-width="1.1"/><line x1="71.37" y1="214.02" x2="70.32" y2="209.33" stroke="#6a90b8" stroke-width="1.1"/><line x1="80.63" y1="214.02" x2="81.68" y2="209.33" stroke="#8e8c8a" stroke-width="1.1"/><line x1="88.98" y1="217.99" x2="91.95" y2="214.22" stroke="#8e8c8a" stroke-width="1.1"/><line x1="94.82" y1="225.17" x2="99.12" y2="223.04" stroke="#8e8c8a" stroke-width="1.1"/><line x1="97.00" y1="234.17" x2="101.80" y2="234.09" stroke="#8e8c8a" stroke-width="1.1"/><line x1="95.10" y1="243.22" x2="99.47" y2="245.22" stroke="#8e8c8a" stroke-width="1.1"/><line x1="89.50" y1="250.59" x2="92.58" y2="254.26" stroke="#8e8c8a" stroke-width="1.1"/><circle cx="76" cy="234.5" r="18.3" fill="url(#kg)" stroke="#8e8e8e" stroke-width="1.1"/><line x1="76" y1="234.5" x2="75.11" y2="217.52" stroke="#707070" stroke-width="2.2"/><circle cx="300.6" cy="237.2" r="27.4" fill="#e6e4e0" opacity="0.7"/><circle cx="300.6" cy="235.7" r="26.4" fill="#f1efec" stroke="#d9d6d1" stroke-width="0.8"/><path d="M283.63 255.92 A26.4 26.4 0 0 1 279.52 251.59 L285.98 246.71 A18.3 18.3 0 0 0 288.84 249.72Z" fill="#2f8bd0"/><line x1="287.10" y1="251.79" x2="284.02" y2="255.46" stroke="#6a90b8" stroke-width="1.1"/><line x1="281.50" y1="244.42" x2="277.13" y2="246.42" stroke="#8e8c8a" stroke-width="1.1"/><line x1="279.60" y1="235.37" x2="274.80" y2="235.29" stroke="#8e8c8a" stroke-width="1.1"/><line x1="281.78" y1="226.37" x2="277.48" y2="224.24" stroke="#8e8c8a" stroke-width="1.1"/><line x1="287.62" y1="219.19" x2="284.65" y2="215.42" stroke="#8e8c8a" stroke-width="1.1"/><line x1="295.97" y1="215.22" x2="294.92" y2="210.53" stroke="#8e8c8a" stroke-width="1.1"/><line x1="305.23" y1="215.22" x2="306.28" y2="210.53" stroke="#8e8c8a" stroke-width="1.1"/><line x1="313.58" y1="219.19" x2="316.55" y2="215.42" stroke="#8e8c8a" stroke-width="1.1"/><line x1="319.42" y1="226.37" x2="323.72" y2="224.24" stroke="#8e8c8a" stroke-width="1.1"/><line x1="321.60" y1="235.37" x2="326.40" y2="235.29" stroke="#8e8c8a" stroke-width="1.1"/><line x1="319.70" y1="244.42" x2="324.07" y2="246.42" stroke="#8e8c8a" stroke-width="1.1"/><line x1="314.10" y1="251.79" x2="317.18" y2="255.46" stroke="#8e8c8a" stroke-width="1.1"/><line x1="285.08" y1="245.40" x2="278.21" y2="249.69" stroke="#3a90d8" stroke-width="3"/><circle cx="300.6" cy="235.7" r="18.3" fill="url(#kg)" stroke="#8e8e8e" stroke-width="1.1"/><line x1="300.6" y1="235.7" x2="286.18" y2="244.71" stroke="#707070" stroke-width="2.2"/><circle cx="369.6" cy="237.2" r="27.4" fill="#e6e4e0" opacity="0.7"/><circle cx="369.6" cy="235.7" r="26.4" fill="#f1efec" stroke="#d9d6d1" stroke-width="0.8"/><line x1="356.10" y1="251.79" x2="353.02" y2="255.46" stroke="#8e8c8a" stroke-width="1.1"/><line x1="350.50" y1="244.42" x2="346.13" y2="246.42" stroke="#8e8c8a" stroke-width="1.1"/><line x1="348.60" y1="235.37" x2="343.80" y2="235.29" stroke="#8e8c8a" stroke-width="1.1"/><line x1="350.78" y1="226.37" x2="346.48" y2="224.24" stroke="#8e8c8a" stroke-width="1.1"/><line x1="356.62" y1="219.19" x2="353.65" y2="215.42" stroke="#8e8c8a" stroke-width="1.1"/><line x1="364.97" y1="215.22" x2="363.92" y2="210.53" stroke="#8e8c8a" stroke-width="1.1"/><line x1="374.23" y1="215.22" x2="375.28" y2="210.53" stroke="#8e8c8a" stroke-width="1.1"/><line x1="382.58" y1="219.19" x2="385.55" y2="215.42" stroke="#8e8c8a" stroke-width="1.1"/><line x1="388.42" y1="226.37" x2="392.72" y2="224.24" stroke="#8e8c8a" stroke-width="1.1"/><line x1="390.60" y1="235.37" x2="395.40" y2="235.29" stroke="#8e8c8a" stroke-width="1.1"/><line x1="388.70" y1="244.42" x2="393.07" y2="246.42" stroke="#8e8c8a" stroke-width="1.1"/><line x1="383.10" y1="251.79" x2="386.18" y2="255.46" stroke="#8e8c8a" stroke-width="1.1"/><circle cx="369.6" cy="235.7" r="18.3" fill="url(#kg)" stroke="#8e8e8e" stroke-width="1.1"/><line x1="369.6" y1="235.7" x2="356.97" y2="247.08" stroke="#707070" stroke-width="2.2"/><circle cx="438" cy="237.2" r="27.4" fill="#e6e4e0" opacity="0.7"/><circle cx="438" cy="235.7" r="26.4" fill="#f1efec" stroke="#d9d6d1" stroke-width="0.8"/><path d="M421.03 255.92 A26.4 26.4 0 0 1 419.01 254.04 L424.84 248.41 A18.3 18.3 0 0 0 426.24 249.72Z" fill="#2f8bd0"/><line x1="424.50" y1="251.79" x2="421.42" y2="255.46" stroke="#6a90b8" stroke-width="1.1"/><line x1="418.90" y1="244.42" x2="414.53" y2="246.42" stroke="#8e8c8a" stroke-width="1.1"/><line x1="417.00" y1="235.37" x2="412.20" y2="235.29" stroke="#8e8c8a" stroke-width="1.1"/><line x1="419.18" y1="226.37" x2="414.88" y2="224.24" stroke="#8e8c8a" stroke-width="1.1"/><line x1="425.02" y1="219.19" x2="422.05" y2="215.42" stroke="#8e8c8a" stroke-width="1.1"/><line x1="433.37" y1="215.22" x2="432.32" y2="210.53" stroke="#8e8c8a" stroke-width="1.1"/><line x1="442.63" y1="215.22" x2="443.68" y2="210.53" stroke="#8e8c8a" stroke-width="1.1"/><line x1="450.98" y1="219.19" x2="453.95" y2="215.42" stroke="#8e8c8a" stroke-width="1.1"/><line x1="456.82" y1="226.37" x2="461.12" y2="224.24" stroke="#8e8c8a" stroke-width="1.1"/><line x1="459.00" y1="235.37" x2="463.80" y2="235.29" stroke="#8e8c8a" stroke-width="1.1"/><line x1="457.10" y1="244.42" x2="461.47" y2="246.42" stroke="#8e8c8a" stroke-width="1.1"/><line x1="451.50" y1="251.79" x2="454.58" y2="255.46" stroke="#8e8c8a" stroke-width="1.1"/><line x1="424.19" y1="247.71" x2="418.08" y2="253.02" stroke="#3a90d8" stroke-width="1"/><circle cx="438" cy="235.7" r="18.3" fill="url(#kg)" stroke="#8e8e8e" stroke-width="1.1"/><line x1="438" y1="235.7" x2="425.17" y2="246.85" stroke="#707070" stroke-width="2.2"/><circle cx="500" cy="237.2" r="27.4" fill="#e6e4e0" opacity="0.7"/><circle cx="500" cy="235.7" r="26.4" fill="#f1efec" stroke="#d9d6d1" stroke-width="0.8"/><path d="M483.03 255.92 A26.4 26.4 0 0 1 500.00 209.30 L500.00 217.40 A18.3 18.3 0 0 0 488.24 249.72Z" fill="#2f8bd0"/><line x1="486.50" y1="251.79" x2="483.42" y2="255.46" stroke="#6a90b8" stroke-width="1.1"/><line x1="480.90" y1="244.42" x2="476.53" y2="246.42" stroke="#6a90b8" stroke-width="1.1"/><line x1="479.00" y1="235.37" x2="474.20" y2="235.29" stroke="#6a90b8" stroke-width="1.1"/><line x1="481.18" y1="226.37" x2="476.88" y2="224.24" stroke="#6a90b8" stroke-width="1.1"/><line x1="487.02" y1="219.19" x2="484.05" y2="215.42" stroke="#6a90b8" stroke-width="1.1"/><line x1="495.37" y1="215.22" x2="494.32" y2="210.53" stroke="#6a90b8" stroke-width="1.1"/><line x1="504.63" y1="215.22" x2="505.68" y2="210.53" stroke="#8e8c8a" stroke-width="1.1"/><line x1="512.98" y1="219.19" x2="515.95" y2="215.42" stroke="#8e8c8a" stroke-width="1.1"/><line x1="518.82" y1="226.37" x2="523.12" y2="224.24" stroke="#8e8c8a" stroke-width="1.1"/><line x1="521.00" y1="235.37" x2="525.80" y2="235.29" stroke="#8e8c8a" stroke-width="1.1"/><line x1="519.10" y1="244.42" x2="523.47" y2="246.42" stroke="#8e8c8a" stroke-width="1.1"/><line x1="513.50" y1="251.79" x2="516.58" y2="255.46" stroke="#8e8c8a" stroke-width="1.1"/><circle cx="500" cy="235.7" r="18.3" fill="url(#kg)" stroke="#8e8e8e" stroke-width="1.1"/><line x1="500" y1="235.7" x2="500.00" y2="218.70" stroke="#707070" stroke-width="2.2"/><circle cx="579" cy="237.2" r="27.4" fill="#e6e4e0" opacity="0.7"/><circle cx="579" cy="235.7" r="26.4" fill="#f1efec" stroke="#d9d6d1" stroke-width="0.8"/><path d="M562.03 255.92 A26.4 26.4 0 0 1 557.11 250.46 L563.83 245.93 A18.3 18.3 0 0 0 567.24 249.72Z" fill="#2f8bd0"/><line x1="565.50" y1="251.79" x2="562.42" y2="255.46" stroke="#6a90b8" stroke-width="1.1"/><line x1="559.90" y1="244.42" x2="555.53" y2="246.42" stroke="#8e8c8a" stroke-width="1.1"/><line x1="558.00" y1="235.37" x2="553.20" y2="235.29" stroke="#8e8c8a" stroke-width="1.1"/><line x1="560.18" y1="226.37" x2="555.88" y2="224.24" stroke="#8e8c8a" stroke-width="1.1"/><line x1="566.02" y1="219.19" x2="563.05" y2="215.42" stroke="#8e8c8a" stroke-width="1.1"/><line x1="574.37" y1="215.22" x2="573.32" y2="210.53" stroke="#8e8c8a" stroke-width="1.1"/><line x1="583.63" y1="215.22" x2="584.68" y2="210.53" stroke="#8e8c8a" stroke-width="1.1"/><line x1="591.98" y1="219.19" x2="594.95" y2="215.42" stroke="#8e8c8a" stroke-width="1.1"/><line x1="597.82" y1="226.37" x2="602.12" y2="224.24" stroke="#8e8c8a" stroke-width="1.1"/><line x1="600.00" y1="235.37" x2="604.80" y2="235.29" stroke="#8e8c8a" stroke-width="1.1"/><line x1="598.10" y1="244.42" x2="602.47" y2="246.42" stroke="#8e8c8a" stroke-width="1.1"/><line x1="592.50" y1="251.79" x2="595.58" y2="255.46" stroke="#8e8c8a" stroke-width="1.1"/><line x1="563.48" y1="245.40" x2="556.61" y2="249.69" stroke="#3a90d8" stroke-width="3"/><circle cx="579" cy="235.7" r="18.3" fill="url(#kg)" stroke="#8e8e8e" stroke-width="1.1"/><line x1="579" y1="235.7" x2="564.58" y2="244.71" stroke="#707070" stroke-width="2.2"/><circle cx="646" cy="237.2" r="27.4" fill="#e6e4e0" opacity="0.7"/><circle cx="646" cy="235.7" r="26.4" fill="#f1efec" stroke="#d9d6d1" stroke-width="0.8"/><path d="M629.03 255.92 A26.4 26.4 0 1 1 662.97 255.92 L657.76 249.72 A18.3 18.3 0 1 0 634.24 249.72Z" fill="#2f8bd0"/><line x1="632.50" y1="251.79" x2="629.42" y2="255.46" stroke="#6a90b8" stroke-width="1.1"/><line x1="626.90" y1="244.42" x2="622.53" y2="246.42" stroke="#6a90b8" stroke-width="1.1"/><line x1="625.00" y1="235.37" x2="620.20" y2="235.29" stroke="#6a90b8" stroke-width="1.1"/><line x1="627.18" y1="226.37" x2="622.88" y2="224.24" stroke="#6a90b8" stroke-width="1.1"/><line x1="633.02" y1="219.19" x2="630.05" y2="215.42" stroke="#6a90b8" stroke-width="1.1"/><line x1="641.37" y1="215.22" x2="640.32" y2="210.53" stroke="#6a90b8" stroke-width="1.1"/><line x1="650.63" y1="215.22" x2="651.68" y2="210.53" stroke="#6a90b8" stroke-width="1.1"/><line x1="658.98" y1="219.19" x2="661.95" y2="215.42" stroke="#6a90b8" stroke-width="1.1"/><line x1="664.82" y1="226.37" x2="669.12" y2="224.24" stroke="#6a90b8" stroke-width="1.1"/><line x1="667.00" y1="235.37" x2="671.80" y2="235.29" stroke="#6a90b8" stroke-width="1.1"/><line x1="665.10" y1="244.42" x2="669.47" y2="246.42" stroke="#6a90b8" stroke-width="1.1"/><line x1="659.50" y1="251.79" x2="662.58" y2="255.46" stroke="#6a90b8" stroke-width="1.1"/><circle cx="646" cy="235.7" r="18.3" fill="url(#kg)" stroke="#8e8e8e" stroke-width="1.1"/><line x1="646" y1="235.7" x2="658.02" y2="247.72" stroke="#707070" stroke-width="2.2"/><circle cx="706" cy="237.2" r="27.4" fill="#e6e4e0" opacity="0.7"/><circle cx="706" cy="235.7" r="26.4" fill="#f1efec" stroke="#d9d6d1" stroke-width="0.8"/><path d="M689.03 255.92 A26.4 26.4 0 0 1 685.78 252.67 L691.98 247.46 A18.3 18.3 0 0 0 694.24 249.72Z" fill="#2f8bd0"/><line x1="692.50" y1="251.79" x2="689.42" y2="255.46" stroke="#6a90b8" stroke-width="0.8"/><line x1="690.80" y1="250.19" x2="687.33" y2="253.50" stroke="#6a90b8" stroke-width="0.8"/><line x1="689.29" y1="248.42" x2="685.47" y2="251.32" stroke="#8e8c8a" stroke-width="0.8"/><line x1="687.98" y1="246.49" x2="683.86" y2="248.95" stroke="#8e8c8a" stroke-width="0.8"/><line x1="686.90" y1="244.42" x2="682.53" y2="246.42" stroke="#8e8c8a" stroke-width="0.8"/><line x1="686.05" y1="242.25" x2="681.49" y2="243.75" stroke="#8e8c8a" stroke-width="0.8"/><line x1="685.45" y1="240.00" x2="680.75" y2="240.98" stroke="#8e8c8a" stroke-width="0.8"/><line x1="685.10" y1="237.70" x2="680.32" y2="238.15" stroke="#8e8c8a" stroke-width="0.8"/><line x1="685.00" y1="235.37" x2="680.20" y2="235.29" stroke="#8e8c8a" stroke-width="0.8"/><line x1="685.17" y1="233.04" x2="680.41" y2="232.43" stroke="#8e8c8a" stroke-width="0.8"/><line x1="685.59" y1="230.75" x2="680.93" y2="229.62" stroke="#8e8c8a" stroke-width="0.8"/><line x1="686.27" y1="228.52" x2="681.76" y2="226.88" stroke="#8e8c8a" stroke-width="0.8"/><line x1="687.18" y1="226.37" x2="682.88" y2="224.24" stroke="#8e8c8a" stroke-width="0.8"/><line x1="688.33" y1="224.35" x2="684.30" y2="221.75" stroke="#8e8c8a" stroke-width="0.8"/><line x1="689.70" y1="222.46" x2="685.98" y2="219.43" stroke="#8e8c8a" stroke-width="0.8"/><line x1="691.27" y1="220.73" x2="687.90" y2="217.31" stroke="#8e8c8a" stroke-width="0.8"/><line x1="693.02" y1="219.19" x2="690.05" y2="215.42" stroke="#8e8c8a" stroke-width="0.8"/><line x1="694.93" y1="217.86" x2="692.40" y2="213.78" stroke="#8e8c8a" stroke-width="0.8"/><line x1="696.97" y1="216.74" x2="694.91" y2="212.40" stroke="#8e8c8a" stroke-width="0.8"/><line x1="699.13" y1="215.85" x2="697.56" y2="211.32" stroke="#8e8c8a" stroke-width="0.8"/><line x1="701.37" y1="215.22" x2="700.32" y2="210.53" stroke="#8e8c8a" stroke-width="0.8"/><line x1="703.67" y1="214.83" x2="703.14" y2="210.06" stroke="#8e8c8a" stroke-width="0.8"/><line x1="706.00" y1="214.70" x2="706.00" y2="209.90" stroke="#8e8c8a" stroke-width="0.8"/><line x1="708.33" y1="214.83" x2="708.86" y2="210.06" stroke="#8e8c8a" stroke-width="0.8"/><line x1="710.63" y1="215.22" x2="711.68" y2="210.53" stroke="#8e8c8a" stroke-width="0.8"/><line x1="712.87" y1="215.85" x2="714.44" y2="211.32" stroke="#8e8c8a" stroke-width="0.8"/><line x1="715.03" y1="216.74" x2="717.09" y2="212.40" stroke="#8e8c8a" stroke-width="0.8"/><line x1="717.07" y1="217.86" x2="719.60" y2="213.78" stroke="#8e8c8a" stroke-width="0.8"/><line x1="718.98" y1="219.19" x2="721.95" y2="215.42" stroke="#8e8c8a" stroke-width="0.8"/><line x1="720.73" y1="220.73" x2="724.10" y2="217.31" stroke="#8e8c8a" stroke-width="0.8"/><line x1="722.30" y1="222.46" x2="726.02" y2="219.43" stroke="#8e8c8a" stroke-width="0.8"/><line x1="723.67" y1="224.35" x2="727.70" y2="221.75" stroke="#8e8c8a" stroke-width="0.8"/><line x1="724.82" y1="226.37" x2="729.12" y2="224.24" stroke="#8e8c8a" stroke-width="0.8"/><line x1="725.73" y1="228.52" x2="730.24" y2="226.88" stroke="#8e8c8a" stroke-width="0.8"/><line x1="726.41" y1="230.75" x2="731.07" y2="229.62" stroke="#8e8c8a" stroke-width="0.8"/><line x1="726.83" y1="233.04" x2="731.59" y2="232.43" stroke="#8e8c8a" stroke-width="0.8"/><line x1="727.00" y1="235.37" x2="731.80" y2="235.29" stroke="#8e8c8a" stroke-width="0.8"/><line x1="726.90" y1="237.70" x2="731.68" y2="238.15" stroke="#8e8c8a" stroke-width="0.8"/><line x1="726.55" y1="240.00" x2="731.25" y2="240.98" stroke="#8e8c8a" stroke-width="0.8"/><line x1="725.95" y1="242.25" x2="730.51" y2="243.75" stroke="#8e8c8a" stroke-width="0.8"/><line x1="725.10" y1="244.42" x2="729.47" y2="246.42" stroke="#8e8c8a" stroke-width="0.8"/><line x1="724.02" y1="246.49" x2="728.14" y2="248.95" stroke="#8e8c8a" stroke-width="0.8"/><line x1="722.71" y1="248.42" x2="726.53" y2="251.32" stroke="#8e8c8a" stroke-width="0.8"/><line x1="721.20" y1="250.19" x2="724.67" y2="253.50" stroke="#8e8c8a" stroke-width="0.8"/><line x1="719.50" y1="251.79" x2="722.58" y2="255.46" stroke="#8e8c8a" stroke-width="0.8"/><line x1="691.98" y1="247.46" x2="685.78" y2="252.67" stroke="#3a90d8" stroke-width="1"/><circle cx="706" cy="235.7" r="18.3" fill="url(#kg)" stroke="#8e8e8e" stroke-width="1.1"/><line x1="706" y1="235.7" x2="692.98" y2="246.63" stroke="#707070" stroke-width="2.2"/><circle cx="773" cy="237.2" r="27.4" fill="#e6e4e0" opacity="0.7"/><circle cx="773" cy="235.7" r="26.4" fill="#f1efec" stroke="#d9d6d1" stroke-width="0.8"/><path d="M756.03 255.92 A26.4 26.4 0 0 1 759.80 212.84 L763.85 219.85 A18.3 18.3 0 0 0 761.24 249.72Z" fill="#2f8bd0"/><line x1="759.50" y1="251.79" x2="756.42" y2="255.46" stroke="#6a90b8" stroke-width="1.1"/><line x1="753.90" y1="244.42" x2="749.53" y2="246.42" stroke="#6a90b8" stroke-width="1.1"/><line x1="752.00" y1="235.37" x2="747.20" y2="235.29" stroke="#6a90b8" stroke-width="1.1"/><line x1="754.18" y1="226.37" x2="749.88" y2="224.24" stroke="#6a90b8" stroke-width="1.1"/><line x1="760.02" y1="219.19" x2="757.05" y2="215.42" stroke="#6a90b8" stroke-width="1.1"/><line x1="768.37" y1="215.22" x2="767.32" y2="210.53" stroke="#8e8c8a" stroke-width="1.1"/><line x1="777.63" y1="215.22" x2="778.68" y2="210.53" stroke="#8e8c8a" stroke-width="1.1"/><line x1="785.98" y1="219.19" x2="788.95" y2="215.42" stroke="#8e8c8a" stroke-width="1.1"/><line x1="791.82" y1="226.37" x2="796.12" y2="224.24" stroke="#8e8c8a" stroke-width="1.1"/><line x1="794.00" y1="235.37" x2="798.80" y2="235.29" stroke="#8e8c8a" stroke-width="1.1"/><line x1="792.10" y1="244.42" x2="796.47" y2="246.42" stroke="#8e8c8a" stroke-width="1.1"/><line x1="786.50" y1="251.79" x2="789.58" y2="255.46" stroke="#8e8c8a" stroke-width="1.1"/><circle cx="773" cy="235.7" r="18.3" fill="url(#kg)" stroke="#8e8e8e" stroke-width="1.1"/><line x1="773" y1="235.7" x2="764.50" y2="220.98" stroke="#707070" stroke-width="2.2"/></svg>
<div class="a" style="left:20px;top:264px;width:112px;height:21px;border:1px solid #b8b4af;border-radius:3px;background:#fff"></div>
<div class="a" style="left:117px;top:265px;width:14px;height:19px;border-left:1px solid #c8c4bf;border-radius:0 2px 2px 0;background:linear-gradient(#fafaf9,#eceae6)"></div>
<svg class="a" style="left:119.5px;top:267px" width="10" height="15"><path d="M1 6 L5 1.5 L9 6Z" fill="#555"/><path d="M1 9.5 L5 14 L9 9.5Z" fill="#555"/></svg>
<div class="t" style="left:61.269968750000004px;top:269.0px;font-size:13px;color:#111;font-weight:400;;will-change:transform;-webkit-text-stroke:0.2px #111">98</div>
<div class="a" style="left:272px;top:267px;width:56px;height:21px;border:1px solid #b8b4af;border-radius:3px;background:#fff"></div>
<div class="a" style="left:313px;top:268px;width:14px;height:19px;border-left:1px solid #c8c4bf;border-radius:0 2px 2px 0;background:linear-gradient(#fafaf9,#eceae6)"></div>
<svg class="a" style="left:315.5px;top:270px" width="10" height="15"><path d="M1 6 L5 1.5 L9 6Z" fill="#555"/><path d="M1 9.5 L5 14 L9 9.5Z" fill="#555"/></svg>
<div class="t" style="left:288.384984375px;top:272.0px;font-size:13px;color:#111;font-weight:400;;will-change:transform;-webkit-text-stroke:0.2px #111">5</div>
<div class="a" style="left:332px;top:267px;width:76px;height:21px;border:1px solid #b8b4af;border-radius:3px;background:#fff"></div>
<div class="a" style="left:393px;top:268px;width:14px;height:19px;border-left:1px solid #c8c4bf;border-radius:0 2px 2px 0;background:linear-gradient(#fafaf9,#eceae6)"></div>
<svg class="a" style="left:395.5px;top:270px" width="10" height="15"><path d="M1 6 L5 1.5 L9 6Z" fill="#555"/><path d="M1 9.5 L5 14 L9 9.5Z" fill="#b0b0b0"/></svg>
<div class="t" style="left:358.384984375px;top:272.0px;font-size:13px;color:#111;font-weight:400;;will-change:transform;-webkit-text-stroke:0.2px #111">0</div>
<div class="a" style="left:411px;top:267px;width:56px;height:21px;border:1px solid #b8b4af;border-radius:3px;background:#fff"></div>
<div class="a" style="left:452px;top:268px;width:14px;height:19px;border-left:1px solid #c8c4bf;border-radius:0 2px 2px 0;background:linear-gradient(#fafaf9,#eceae6)"></div>
<svg class="a" style="left:454.5px;top:270px" width="10" height="15"><path d="M1 6 L5 1.5 L9 6Z" fill="#555"/><path d="M1 9.5 L5 14 L9 9.5Z" fill="#555"/></svg>
<div class="t" style="left:427.384984375px;top:272.0px;font-size:13px;color:#111;font-weight:400;;will-change:transform;-webkit-text-stroke:0.2px #111">1</div>
<div class="a" style="left:471px;top:267px;width:56px;height:21px;border:1px solid #b8b4af;border-radius:3px;background:#fff"></div>
<div class="a" style="left:512px;top:268px;width:14px;height:19px;border-left:1px solid #c8c4bf;border-radius:0 2px 2px 0;background:linear-gradient(#fafaf9,#eceae6)"></div>
<svg class="a" style="left:514.5px;top:270px" width="10" height="15"><path d="M1 6 L5 1.5 L9 6Z" fill="#555"/><path d="M1 9.5 L5 14 L9 9.5Z" fill="#555"/></svg>
<div class="t" style="left:483.76996875px;top:272.0px;font-size:13px;color:#111;font-weight:400;;will-change:transform;-webkit-text-stroke:0.2px #111">50</div>
<div class="a" style="left:545px;top:267px;width:69px;height:21px;border:1px solid #b8b4af;border-radius:3px;background:#fff"></div>
<div class="a" style="left:599px;top:268px;width:14px;height:19px;border-left:1px solid #c8c4bf;border-radius:0 2px 2px 0;background:linear-gradient(#fafaf9,#eceae6)"></div>
<svg class="a" style="left:601.5px;top:270px" width="10" height="15"><path d="M1 6 L5 1.5 L9 6Z" fill="#555"/><path d="M1 9.5 L5 14 L9 9.5Z" fill="#555"/></svg>
<div class="t" style="left:568.384984375px;top:272.0px;font-size:13px;color:#111;font-weight:400;;will-change:transform;-webkit-text-stroke:0.2px #111">3</div>
<div class="a" style="left:618px;top:267px;width:56px;height:21px;border:1px solid #b8b4af;border-radius:3px;background:#fff"></div>
<div class="a" style="left:659px;top:268px;width:14px;height:19px;border-left:1px solid #c8c4bf;border-radius:0 2px 2px 0;background:linear-gradient(#fafaf9,#eceae6)"></div>
<svg class="a" style="left:661.5px;top:270px" width="10" height="15"><path d="M1 6 L5 1.5 L9 6Z" fill="#b0b0b0"/><path d="M1 9.5 L5 14 L9 9.5Z" fill="#555"/></svg>
<div class="t" style="left:627.154953125px;top:272.0px;font-size:13px;color:#111;font-weight:400;;will-change:transform;-webkit-text-stroke:0.2px #111">100</div>
<div class="a" style="left:678px;top:267px;width:56px;height:21px;border:1px solid #b8b4af;border-radius:3px;background:#fff"></div>
<div class="a" style="left:719px;top:268px;width:14px;height:19px;border-left:1px solid #c8c4bf;border-radius:0 2px 2px 0;background:linear-gradient(#fafaf9,#eceae6)"></div>
<svg class="a" style="left:721.5px;top:270px" width="10" height="15"><path d="M1 6 L5 1.5 L9 6Z" fill="#555"/><path d="M1 9.5 L5 14 L9 9.5Z" fill="#b0b0b0"/></svg>
<div class="t" style="left:690.76996875px;top:272.0px;font-size:13px;color:#111;font-weight:400;;will-change:transform;-webkit-text-stroke:0.2px #111">30</div>
<div class="a" style="left:738px;top:267px;width:70px;height:21px;border:1px solid #b8b4af;border-radius:3px;background:#fff"></div>
<div class="a" style="left:793px;top:268px;width:14px;height:19px;border-left:1px solid #c8c4bf;border-radius:0 2px 2px 0;background:linear-gradient(#fafaf9,#eceae6)"></div>
<svg class="a" style="left:795.5px;top:270px" width="10" height="15"><path d="M1 6 L5 1.5 L9 6Z" fill="#555"/><path d="M1 9.5 L5 14 L9 9.5Z" fill="#555"/></svg>
<div class="t" style="left:757.76996875px;top:272.0px;font-size:13px;color:#111;font-weight:400;;will-change:transform;-webkit-text-stroke:0.2px #111">80</div>
<div class="a" style="left:273px;top:297px;width:13px;height:13px;border:1px solid #b8b4af;border-radius:2px;background:#fff"></div>
<svg class="a" style="left:275px;top:299px" width="10" height="10"><path d="M1.5 5 L4 8.5 L8.5 1" stroke="#111" stroke-width="2" fill="none"/></svg>
<div class="t" style="left:291px;top:298.0px;font-size:13px;color:#111;font-weight:400;letter-spacing:0.71px;;will-change:transform;-webkit-text-stroke:0.2px #111">Activer</div>
<div class="a" style="left:305px;top:311px;width:6px;height:1px;background:#222"></div>
<div class="a" style="left:546px;top:297px;width:13px;height:13px;border:1px solid #b8b4af;border-radius:2px;background:#fff"></div>
<svg class="a" style="left:548px;top:299px" width="10" height="10"><path d="M1.5 5 L4 8.5 L8.5 1" stroke="#111" stroke-width="2" fill="none"/></svg>
<div class="t" style="left:564px;top:298.0px;font-size:13px;color:#111;font-weight:400;letter-spacing:0.63px;;will-change:transform;-webkit-text-stroke:0.2px #111">Activer</div>
<div class="a" style="left:585px;top:311px;width:3.5px;height:1px;background:#222"></div>
<div class="t" style="left:636px;top:298.0px;font-size:13px;color:#111;font-weight:400;letter-spacing:0.52px;;will-change:transform;-webkit-text-stroke:0.2px #111">Type :</div>
<div class="a" style="left:643.5px;top:311px;width:6px;height:1px;background:#222"></div>
<div class="a" style="left:678px;top:294px;width:130px;height:21px;border:1px solid #b8b4af;border-radius:3px;background:linear-gradient(#fdfdfc,#eeece9)"></div>
<div class="t" style="left:683.5px;top:298.0px;font-size:13px;color:#111;font-weight:400;letter-spacing:0.37px;;will-change:transform;-webkit-text-stroke:0.2px #111">Sinus</div>
<svg class="a" style="left:790px;top:301px" width="12" height="7"><path d="M1 1 L11 1 L6 6Z" fill="#444"/></svg>
<div class="a" style="left:142px;top:176px;width:120px;height:24px;border:1px solid #b7b3ae;border-radius:3px;background:linear-gradient(#fdfdfc,#f1f0ed 60%,#e8e6e2)"></div>
<div class="a" style="left:142px;top:222px;width:120px;height:24px;border:1px solid #b7b3ae;border-radius:3px;background:linear-gradient(#fdfdfc,#f1f0ed 60%,#e8e6e2)"></div>
<div class="a" style="left:142px;top:262px;width:120px;height:24px;border:1px solid #b7b3ae;border-radius:3px;background:linear-gradient(#fdfdfc,#f1f0ed 60%,#e8e6e2)"></div>
<div class="a" style="left:13px;top:297px;width:125px;height:24px;border:1px solid #b7b3ae;border-radius:3px;background:linear-gradient(#fdfdfc,#f1f0ed 60%,#e8e6e2)"></div>
<div class="a" style="left:142px;top:297px;width:120px;height:24px;border:1px solid #a9a5a0;border-radius:3px;background:linear-gradient(#dcd9d4,#d6d3ce)"></div>
<div class="t" style="left:166px;top:181.5px;font-size:13px;color:#111;font-weight:400;letter-spacing:0.70px;;will-change:transform;-webkit-text-stroke:0.2px #111">Redémarrage</div>
<div class="a" style="left:174px;top:195px;width:8px;height:1px;background:#222"></div>
<div class="t" style="left:184px;top:228.0px;font-size:13px;color:#111;font-weight:400;letter-spacing:0.38px;;will-change:transform;-webkit-text-stroke:0.2px #111">Panique</div>
<div class="a" style="left:184px;top:241px;width:8px;height:1px;background:#222"></div>
<div class="t" style="left:164px;top:268.5px;font-size:13px;color:#111;font-weight:400;letter-spacing:0.52px;;will-change:transform;-webkit-text-stroke:0.2px #111">Remise à zéro</div>
<div class="a" style="left:164px;top:282px;width:8px;height:1px;background:#222"></div>
<div class="t" style="left:35px;top:303.0px;font-size:13px;color:#111;font-weight:400;letter-spacing:0.52px;;will-change:transform;-webkit-text-stroke:0.2px #111">Configuration...</div>
<div class="a" style="left:75px;top:316px;width:8px;height:1px;background:#222"></div>
<div class="t" style="left:184px;top:303.0px;font-size:13px;color:#111;font-weight:400;letter-spacing:0.84px;;will-change:transform;-webkit-text-stroke:0.2px #111">Canaux</div>
<div class="a" style="left:184px;top:316px;width:9px;height:1px;background:#222"></div>
<svg class="a" style="left:148px;top:179px" width="17" height="17"><circle cx="8.8" cy="8.8" r="6.6" fill="#f4f2ef" stroke="#ee3a0e" stroke-width="2.1"/><rect x="7.4" y="4.8" width="2.8" height="7.8" rx="1.3" fill="#ee3a0e"/></svg>
<svg class="a" style="left:166px;top:225px" width="17" height="17"><circle cx="8.5" cy="8.5" r="6.6" fill="none" stroke="#d84a20" stroke-width="2.2"/></svg>
<svg class="a" style="left:146px;top:265px" width="17" height="17"><path d="M5 4.5 A6.5 6.5 0 1 0 12 4.5" stroke="#1e4aa0" stroke-width="2" fill="none"/><rect x="7.6" y="1" width="1.9" height="8" fill="#1e4aa0"/></svg>
<svg class="a" style="left:17px;top:301px" width="17" height="17"><circle cx="8.5" cy="8.5" r="7.3" fill="#d84018" stroke="#902010"/><path d="M4.5 8.5 A4 4 0 1 0 8.5 4.5" stroke="#fff" stroke-width="1.8" fill="none"/></svg>
<svg class="a" style="left:168px;top:301px" width="16" height="15"><path d="M1 2h3M1 6h3M1 10h3M1 13.5h3M5.5 2h9.5M5.5 6h9.5M5.5 10h9.5M5.5 13.5h9.5" stroke="#2050b0" stroke-width="2"/></svg>
<div class="a" style="left:877px;top:168px;width:97px;height:24px;border:1px solid #b7b3ae;border-radius:3px;background:linear-gradient(#fdfdfc,#f1f0ed 60%,#e8e6e2)"></div>
<div class="a" style="left:877px;top:200px;width:97px;height:24px;border:1px solid #b7b3ae;border-radius:3px;background:linear-gradient(#fdfdfc,#f1f0ed 60%,#e8e6e2)"></div>
<div class="a" style="left:877px;top:232px;width:97px;height:24px;border:1px solid #b7b3ae;border-radius:3px;background:linear-gradient(#fdfdfc,#f1f0ed 60%,#e8e6e2)"></div>
<div class="a" style="left:877px;top:264px;width:97px;height:24px;border:1px solid #b7b3ae;border-radius:3px;background:linear-gradient(#fdfdfc,#f1f0ed 60%,#e8e6e2)"></div>
<div class="t" style="left:911px;top:173.5px;font-size:13px;color:#111;font-weight:400;letter-spacing:0.83px;;will-change:transform;-webkit-text-stroke:0.2px #111">Quitter</div>
<div class="a" style="left:911px;top:187px;width:10px;height:1px;background:#222"></div>
<div class="t" style="left:903px;top:206.0px;font-size:13px;color:#111;font-weight:400;letter-spacing:0.60px;;will-change:transform;-webkit-text-stroke:0.2px #111">Options...</div>
<div class="a" style="left:903px;top:219px;width:10px;height:1px;background:#222"></div>
<div class="t" style="left:901px;top:237.5px;font-size:13px;color:#111;font-weight:400;letter-spacing:0.68px;;will-change:transform;-webkit-text-stroke:0.2px #111">Messages</div>
<div class="a" style="left:901px;top:251px;width:11px;height:1px;background:#222"></div>
<div class="t" style="left:898.5px;top:270.0px;font-size:13px;color:#111;font-weight:400;letter-spacing:0.61px;;will-change:transform;-webkit-text-stroke:0.2px #111">À propos...</div>
<div class="a" style="left:913px;top:283px;width:8px;height:1px;background:#222"></div>
<svg class="a" style="left:894px;top:172px" width="16" height="16"><path d="M2.5 2.5 L13.5 13.5 M13.5 2.5 L2.5 13.5" stroke="#d01010" stroke-width="3.6"/></svg>
<svg class="a" style="left:885px;top:204px" width="17" height="17"><circle cx="8.5" cy="8.5" r="7.3" fill="#2a5ac0" stroke="#103080"/><path d="M4.5 8.5 A4 4 0 1 0 8.5 4.5" stroke="#fff" stroke-width="1.8" fill="none"/></svg>
<div class="a" style="left:885px;top:238px;width:16px;height:13px;border:2px solid #2050b0;border-radius:2px"></div>
<svg class="a" style="left:883px;top:268px" width="17" height="17"><circle cx="8.5" cy="8.5" r="7.2" fill="#fff" stroke="#2050b0" stroke-width="1.6"/><rect x="7.5" y="7" width="2" height="6.5" fill="#2050b0"/><circle cx="8.5" cy="4.6" r="1.2" fill="#2050b0"/></svg>
<div class="a" style="left:826px;top:189px;width:12px;height:125px;background:linear-gradient(#11200f 0,#11200f 9%,#e81010 9%,#e81010 10%,#11200f 10%,#11200f 12%,#ff0010 12.5%,#f01818 21%,#f0a020 31%,#d8d820 40%,#a8dc20 62%,#38a830 78%,#229a2a 85%,#229a2a 100%)"></div>
<div class="a" style="left:850px;top:189px;width:12px;height:125px;background:linear-gradient(#11200f 0,#11200f 9%,#e81010 9%,#e81010 10%,#11200f 10%,#11200f 12%,#ff0010 12.5%,#f01818 21%,#f0a020 31%,#d8d820 40%,#a8dc20 62%,#38a830 78%,#229a2a 85%,#229a2a 100%)"></div>
<div class="t" style="left:841.3582578125px;top:203.36px;font-size:9.5px;color:#5a5a5a;font-weight:700;">0</div>
<div class="t" style="left:841.3582578125px;top:211.36px;font-size:9.5px;color:#5a5a5a;font-weight:700;">3</div>
<div class="t" style="left:841.3582578125px;top:219.36px;font-size:9.5px;color:#5a5a5a;font-weight:700;">6</div>
<div class="t" style="left:838.716515625px;top:230.36px;font-size:9.5px;color:#5a5a5a;font-weight:700;">10</div>
<div class="t" style="left:838.716515625px;top:256.36px;font-size:9.5px;color:#5a5a5a;font-weight:700;">20</div>
<div class="t" style="left:838.716515625px;top:278.36px;font-size:9.5px;color:#5a5a5a;font-weight:700;">30</div>
<div class="t" style="left:838.716515625px;top:294.36px;font-size:9.5px;color:#5a5a5a;font-weight:700;">40</div>
<div class="t" style="left:838.716515625px;top:302.36px;font-size:9.5px;color:#5a5a5a;font-weight:700;">50</div>
<div class="a" style="left:838px;top:208px;width:3px;height:1px;background:#555"></div>
<div class="a" style="left:847px;top:208px;width:3px;height:1px;background:#555"></div>
<div class="a" style="left:838px;top:216px;width:3px;height:1px;background:#555"></div>
<div class="a" style="left:847px;top:216px;width:3px;height:1px;background:#555"></div>
<div class="a" style="left:838px;top:224px;width:3px;height:1px;background:#555"></div>
<div class="a" style="left:847px;top:224px;width:3px;height:1px;background:#555"></div>
<div class="a" style="left:845px;top:327px;width:24px;height:24px;border:1px solid #b7b3ae;border-radius:3px;background:linear-gradient(#fdfdfc,#f1f0ed 60%,#e8e6e2)"></div>
<svg class="a" style="left:849px;top:331px" width="16" height="16"><path d="M3 3 L13 13 M13 3 L3 13" stroke="#7e7e7e" stroke-width="3"/></svg>
<div class="a" style="left:13px;top:327px;width:24px;height:24px;border:1px solid #b7b3ae;border-radius:3px;background:linear-gradient(#fdfdfc,#f1f0ed 60%,#e8e6e2)"></div>
<svg class="a" style="left:18.5px;top:332.5px" width="14" height="14" viewBox="0 0 14 14"><path d="M4.5 0.7h4v4h4.3v4H8.5v4.5h-4V8.7H0.7v-4h3.8z" fill="#10a010" stroke="#0a6a0a" stroke-width="0.7"/></svg>
<div class="a" style="left:41px;top:326px;width:97px;height:26px;border:1px solid #b8b4af;border-top:none;border-radius:0 0 3px 3px;background:#f1efeb"></div>
<div class="a" style="left:41px;top:326px;width:97px;height:1px;background:#c8c4bf"></div>
<div class="a" style="left:138px;top:326px;width:26px;height:1px;background:#c8c4bf"></div>
<div class="a" style="left:55.5px;top:332px;width:12px;height:12px;border-radius:50%;background:radial-gradient(circle at 45% 35%,#a8ffa8 0,#28e028 40%,#10b010 100%);border:1px solid #1a8a1a"></div>
<div class="t" style="left:73.5px;top:332.5px;font-size:13px;color:#111;font-weight:400;letter-spacing:0.51px;;will-change:transform;-webkit-text-stroke:0.2px #111">Qsynth1</div>
<div class="a" style="left:26px;top:537px;width:524px;height:369px;border-radius:6px 6px 4px 4px;background:#3a3a3c;box-shadow:2px 5px 20px 3px rgba(0,0,0,0.6),0 0 2px rgba(0,0,0,0.6)"></div>
<div class="a" style="left:26px;top:537px;width:524px;height:26px;border-radius:6px 6px 0 0;background:linear-gradient(#58585a,#454547 45%,#3a3a3c)"></div>
<div class="a" style="left:28px;top:563px;width:520px;height:338px;background:#eeebe6"></div>
<div class="t" style="left:161px;top:544.0px;font-size:13px;color:#808080;font-weight:700;letter-spacing:1.18px;;-webkit-text-stroke:0.3px #808080">Qsynth: Canaux [Qsynth1]</div>
<div class="a" style="left:484.5px;top:541.5px;width:18px;height:18px;border-radius:50%;background:linear-gradient(#262626,#383838 50%,#585858)"></div>
<div class="a" style="left:488.2px;top:545.2px;width:10.6px;height:10.6px;border-radius:50%;background:linear-gradient(#6c6c6c,#2e2e2e)"></div>
<div class="a" style="left:505.5px;top:541.5px;width:18px;height:18px;border-radius:50%;background:linear-gradient(#262626,#383838 50%,#585858)"></div>
<div class="a" style="left:509.2px;top:545.2px;width:10.6px;height:10.6px;border-radius:50%;background:linear-gradient(#6c6c6c,#2e2e2e)"></div>
<div class="a" style="left:526.5px;top:541.5px;width:18px;height:18px;border-radius:50%;background:linear-gradient(#262626,#383838 50%,#585858)"></div>
<div class="a" style="left:530.2px;top:545.2px;width:10.6px;height:10.6px;border-radius:50%;background:linear-gradient(#6c6c6c,#2e2e2e)"></div>
<div class="t" style="left:36px;top:578.0px;font-size:13px;color:#111;font-weight:400;letter-spacing:0.75px;;will-change:transform;-webkit-text-stroke:0.2px #111">Nom du pré-réglage :</div>
<div class="a" style="left:36px;top:591px;width:9px;height:1px;background:#222"></div>
<div class="a" style="left:177px;top:572px;width:150px;height:23px;border:1px solid #b8b4af;border-radius:3px;background:#fff"></div>
<div class="a" style="left:307px;top:573px;width:19px;height:21px;border-left:1px solid #c8c4bf;background:linear-gradient(#fbfbfa,#eeece9);border-radius:0 2px 2px 0"></div>
<svg class="a" style="left:311px;top:581px" width="12" height="7"><path d="M1 1 L11 1 L6 6Z" fill="#444"/></svg>
<div class="t" style="left:181px;top:577.0px;font-size:13px;color:#111;font-weight:400;letter-spacing:0.89px;;will-change:transform;-webkit-text-stroke:0.2px #111">(défaut)</div>
<div class="a" style="left:331px;top:572px;width:110px;height:23px;border:1px solid #b7b3ae;border-radius:3px;background:linear-gradient(#fdfdfc,#f1f0ed 60%,#e8e6e2)"></div>
<div class="a" style="left:445px;top:572px;width:95px;height:23px;border:1px solid #b7b3ae;border-radius:3px;background:linear-gradient(#fdfdfc,#f1f0ed 60%,#e8e6e2)"></div>
<svg class="a" style="left:336px;top:576px" width="16" height="16"><rect x="1" y="1" width="14" height="14" rx="1.5" fill="#6a6a6a"/><rect x="4" y="1" width="8" height="5" fill="#cfcfcf"/><rect x="3.5" y="9" width="9" height="6" fill="#9a9a9a"/></svg>
<div class="t" style="left:353.5px;top:577.5px;font-size:13px;color:#8c8c8c;font-weight:400;letter-spacing:0.66px;;will-change:transform;-webkit-text-stroke:0.2px #8c8c8c">Sauvegarder</div>
<div class="a" style="left:354px;top:591px;width:8px;height:1px;background:#222"></div>
<svg class="a" style="left:450px;top:576px" width="16" height="16"><path d="M2.5 2.5 L13.5 13.5 M13.5 2.5 L2.5 13.5" stroke="#7a7a7a" stroke-width="3"/></svg>
<div class="t" style="left:467px;top:577.5px;font-size:13px;color:#8c8c8c;font-weight:400;letter-spacing:0.82px;;will-change:transform;-webkit-text-stroke:0.2px #8c8c8c">Supprimer</div>
<div class="a" style="left:467px;top:591px;width:8px;height:1px;background:#222"></div>
<div class="a" style="left:32px;top:604px;width:512px;height:294px;background:#fff;border:1px solid #b8b4af"></div>
<div class="a" style="left:33px;top:605px;width:510px;height:19px;background:linear-gradient(#fbfaf8,#edebe7);border-bottom:1px solid #c8c4bf"></div>
<div class="a" style="left:56px;top:606px;width:1px;height:17px;background:#d4d0cb"></div>
<div class="a" style="left:122px;top:606px;width:1px;height:17px;background:#d4d0cb"></div>
<div class="a" style="left:203px;top:606px;width:1px;height:17px;background:#d4d0cb"></div>
<div class="a" style="left:263px;top:606px;width:1px;height:17px;background:#d4d0cb"></div>
<div class="t" style="left:35.3px;top:607.6px;font-size:13px;color:#111;font-weight:400;letter-spacing:-0.01px;;will-change:transform;-webkit-text-stroke:0.2px #111">Ent</div>
<div class="t" style="left:59.6px;top:607.6px;font-size:13px;color:#111;font-weight:400;letter-spacing:0.26px;;will-change:transform;-webkit-text-stroke:0.2px #111">Canal</div>
<div class="t" style="left:125.4px;top:607.6px;font-size:13px;color:#111;font-weight:400;letter-spacing:0.54px;;will-change:transform;-webkit-text-stroke:0.2px #111">Banque</div>
<div class="t" style="left:206px;top:607.6px;font-size:13px;color:#111;font-weight:400;letter-spacing:0.35px;;will-change:transform;-webkit-text-stroke:0.2px #111">Prog</div>
<div class="t" style="left:266px;top:607.6px;font-size:13px;color:#111;font-weight:400;letter-spacing:1.28px;;will-change:transform;-webkit-text-stroke:0.2px #111">Nom</div>
<svg class="a" style="left:109px;top:611px" width="11" height="7"><path d="M1 1 L10 1 L5.5 6Z" fill="#555"/></svg>
<div class="t" style="left:60px;top:626.0px;font-size:13px;color:#111;font-weight:400;letter-spacing:0.4px;will-change:transform;-webkit-text-stroke:0.2px #111">1</div>
<div class="t" style="left:127px;top:626.0px;font-size:13px;color:#111;font-weight:400;;will-change:transform;-webkit-text-stroke:0.2px #111">0</div>
<div class="t" style="left:207px;top:626.0px;font-size:13px;color:#111;font-weight:400;;will-change:transform;-webkit-text-stroke:0.2px #111">0</div>
<div class="t" style="left:267px;top:626.0px;font-size:13px;color:#111;font-weight:400;letter-spacing:0.75px;;will-change:transform;-webkit-text-stroke:0.2px #111">Standard</div>
<div class="a" style="left:33px;top:640px;width:510px;height:16px;background:#f5f4f2"></div>
<div class="t" style="left:60px;top:642.0px;font-size:13px;color:#111;font-weight:400;letter-spacing:0.4px;will-change:transform;-webkit-text-stroke:0.2px #111">2</div>
<div class="t" style="left:127px;top:642.0px;font-size:13px;color:#111;font-weight:400;;will-change:transform;-webkit-text-stroke:0.2px #111">0</div>
<div class="t" style="left:207px;top:642.0px;font-size:13px;color:#111;font-weight:400;;will-change:transform;-webkit-text-stroke:0.2px #111">5</div>
<div class="t" style="left:267px;top:642.0px;font-size:13px;color:#111;font-weight:400;letter-spacing:0.44px;;will-change:transform;-webkit-text-stroke:0.2px #111">Slap N Slides etc</div>
<div class="t" style="left:60px;top:658.0px;font-size:13px;color:#111;font-weight:400;letter-spacing:0.4px;will-change:transform;-webkit-text-stroke:0.2px #111">3</div>
<div class="t" style="left:127px;top:658.0px;font-size:13px;color:#111;font-weight:400;;will-change:transform;-webkit-text-stroke:0.2px #111">0</div>
<div class="t" style="left:207px;top:658.0px;font-size:13px;color:#111;font-weight:400;;will-change:transform;-webkit-text-stroke:0.2px #111">0</div>
<div class="t" style="left:267px;top:658.0px;font-size:13px;color:#111;font-weight:400;letter-spacing:0.75px;;will-change:transform;-webkit-text-stroke:0.2px #111">Standard</div>
<div class="a" style="left:33px;top:672px;width:510px;height:16px;background:#f5f4f2"></div>
<div class="t" style="left:60px;top:674.0px;font-size:13px;color:#111;font-weight:400;letter-spacing:0.4px;will-change:transform;-webkit-text-stroke:0.2px #111">4</div>
<div class="t" style="left:127px;top:674.0px;font-size:13px;color:#111;font-weight:400;;will-change:transform;-webkit-text-stroke:0.2px #111">0</div>
<div class="t" style="left:207px;top:674.0px;font-size:13px;color:#111;font-weight:400;;will-change:transform;-webkit-text-stroke:0.2px #111">3</div>
<div class="t" style="left:267px;top:674.0px;font-size:13px;color:#111;font-weight:400;letter-spacing:0.74px;;will-change:transform;-webkit-text-stroke:0.2px #111">Solo &amp; Muted 5ths</div>
<div class="t" style="left:60px;top:690.0px;font-size:13px;color:#111;font-weight:400;letter-spacing:0.4px;will-change:transform;-webkit-text-stroke:0.2px #111">5</div>
<div class="t" style="left:127px;top:690.0px;font-size:13px;color:#111;font-weight:400;;will-change:transform;-webkit-text-stroke:0.2px #111">0</div>
<div class="t" style="left:207px;top:690.0px;font-size:13px;color:#111;font-weight:400;;will-change:transform;-webkit-text-stroke:0.2px #111">0</div>
<div class="t" style="left:267px;top:690.0px;font-size:13px;color:#111;font-weight:400;letter-spacing:0.75px;;will-change:transform;-webkit-text-stroke:0.2px #111">Standard</div>
<div class="a" style="left:33px;top:704px;width:510px;height:16px;background:#f5f4f2"></div>
<div class="t" style="left:60px;top:706.0px;font-size:13px;color:#111;font-weight:400;letter-spacing:0.4px;will-change:transform;-webkit-text-stroke:0.2px #111">6</div>
<div class="t" style="left:127px;top:706.0px;font-size:13px;color:#111;font-weight:400;;will-change:transform;-webkit-text-stroke:0.2px #111">0</div>
<div class="t" style="left:207px;top:706.0px;font-size:13px;color:#111;font-weight:400;;will-change:transform;-webkit-text-stroke:0.2px #111">0</div>
<div class="t" style="left:267px;top:706.0px;font-size:13px;color:#111;font-weight:400;letter-spacing:0.75px;;will-change:transform;-webkit-text-stroke:0.2px #111">Standard</div>
<div class="t" style="left:60px;top:722.0px;font-size:13px;color:#111;font-weight:400;letter-spacing:0.4px;will-change:transform;-webkit-text-stroke:0.2px #111">7</div>
<div class="t" style="left:127px;top:722.0px;font-size:13px;color:#111;font-weight:400;;will-change:transform;-webkit-text-stroke:0.2px #111">0</div>
<div class="t" style="left:207px;top:722.0px;font-size:13px;color:#111;font-weight:400;;will-change:transform;-webkit-text-stroke:0.2px #111">0</div>
<div class="t" style="left:267px;top:722.0px;font-size:13px;color:#111;font-weight:400;letter-spacing:0.75px;;will-change:transform;-webkit-text-stroke:0.2px #111">Standard</div>
<div class="a" style="left:33px;top:736px;width:510px;height:16px;background:#f5f4f2"></div>
<div class="t" style="left:60px;top:738.0px;font-size:13px;color:#111;font-weight:400;letter-spacing:0.4px;will-change:transform;-webkit-text-stroke:0.2px #111">8</div>
<div class="t" style="left:127px;top:738.0px;font-size:13px;color:#111;font-weight:400;;will-change:transform;-webkit-text-stroke:0.2px #111">0</div>
<div class="t" style="left:207px;top:738.0px;font-size:13px;color:#111;font-weight:400;;will-change:transform;-webkit-text-stroke:0.2px #111">0</div>
<div class="t" style="left:267px;top:738.0px;font-size:13px;color:#111;font-weight:400;letter-spacing:0.75px;;will-change:transform;-webkit-text-stroke:0.2px #111">Standard</div>
<div class="t" style="left:60px;top:754.0px;font-size:13px;color:#111;font-weight:400;letter-spacing:0.4px;will-change:transform;-webkit-text-stroke:0.2px #111">9</div>
<div class="t" style="left:127px;top:754.0px;font-size:13px;color:#111;font-weight:400;;will-change:transform;-webkit-text-stroke:0.2px #111">0</div>
<div class="t" style="left:207px;top:754.0px;font-size:13px;color:#111;font-weight:400;;will-change:transform;-webkit-text-stroke:0.2px #111">0</div>
<div class="t" style="left:267px;top:754.0px;font-size:13px;color:#111;font-weight:400;letter-spacing:0.75px;;will-change:transform;-webkit-text-stroke:0.2px #111">Standard</div>
<div class="a" style="left:33px;top:768px;width:510px;height:16px;background:#f5f4f2"></div>
<div class="t" style="left:60px;top:770.0px;font-size:13px;color:#111;font-weight:400;letter-spacing:0.4px;will-change:transform;-webkit-text-stroke:0.2px #111">10</div>
<div class="t" style="left:127px;top:770.0px;font-size:13px;color:#111;font-weight:400;;will-change:transform;-webkit-text-stroke:0.2px #111">-</div>
<div class="t" style="left:207px;top:770.0px;font-size:13px;color:#111;font-weight:400;;will-change:transform;-webkit-text-stroke:0.2px #111">-</div>
<div class="t" style="left:267px;top:770.0px;font-size:13px;color:#111;font-weight:400;;will-change:transform;-webkit-text-stroke:0.2px #111">-</div>
<div class="t" style="left:60px;top:786.0px;font-size:13px;color:#111;font-weight:400;letter-spacing:0.4px;will-change:transform;-webkit-text-stroke:0.2px #111">11</div>
<div class="t" style="left:127px;top:786.0px;font-size:13px;color:#111;font-weight:400;;will-change:transform;-webkit-text-stroke:0.2px #111">0</div>
<div class="t" style="left:207px;top:786.0px;font-size:13px;color:#111;font-weight:400;;will-change:transform;-webkit-text-stroke:0.2px #111">0</div>
<div class="t" style="left:267px;top:786.0px;font-size:13px;color:#111;font-weight:400;letter-spacing:0.75px;;will-change:transform;-webkit-text-stroke:0.2px #111">Standard</div>
<div class="a" style="left:33px;top:800px;width:510px;height:16px;background:#f5f4f2"></div>
<div class="t" style="left:60px;top:802.0px;font-size:13px;color:#111;font-weight:400;letter-spacing:0.4px;will-change:transform;-webkit-text-stroke:0.2px #111">12</div>
<div class="t" style="left:127px;top:802.0px;font-size:13px;color:#111;font-weight:400;;will-change:transform;-webkit-text-stroke:0.2px #111">0</div>
<div class="t" style="left:207px;top:802.0px;font-size:13px;color:#111;font-weight:400;;will-change:transform;-webkit-text-stroke:0.2px #111">0</div>
<div class="t" style="left:267px;top:802.0px;font-size:13px;color:#111;font-weight:400;letter-spacing:0.75px;;will-change:transform;-webkit-text-stroke:0.2px #111">Standard</div>
<div class="t" style="left:60px;top:818.0px;font-size:13px;color:#111;font-weight:400;letter-spacing:0.4px;will-change:transform;-webkit-text-stroke:0.2px #111">13</div>
<div class="t" style="left:127px;top:818.0px;font-size:13px;color:#111;font-weight:400;;will-change:transform;-webkit-text-stroke:0.2px #111">0</div>
<div class="t" style="left:207px;top:818.0px;font-size:13px;color:#111;font-weight:400;;will-change:transform;-webkit-text-stroke:0.2px #111">0</div>
<div class="t" style="left:267px;top:818.0px;font-size:13px;color:#111;font-weight:400;letter-spacing:0.75px;;will-change:transform;-webkit-text-stroke:0.2px #111">Standard</div>
<div class="a" style="left:33px;top:832px;width:510px;height:16px;background:#f5f4f2"></div>
<div class="t" style="left:60px;top:834.0px;font-size:13px;color:#111;font-weight:400;letter-spacing:0.4px;will-change:transform;-webkit-text-stroke:0.2px #111">14</div>
<div class="t" style="left:127px;top:834.0px;font-size:13px;color:#111;font-weight:400;;will-change:transform;-webkit-text-stroke:0.2px #111">0</div>
<div class="t" style="left:207px;top:834.0px;font-size:13px;color:#111;font-weight:400;;will-change:transform;-webkit-text-stroke:0.2px #111">0</div>
<div class="t" style="left:267px;top:834.0px;font-size:13px;color:#111;font-weight:400;letter-spacing:0.75px;;will-change:transform;-webkit-text-stroke:0.2px #111">Standard</div>
<div class="t" style="left:60px;top:850.0px;font-size:13px;color:#111;font-weight:400;letter-spacing:0.4px;will-change:transform;-webkit-text-stroke:0.2px #111">15</div>
<div class="t" style="left:127px;top:850.0px;font-size:13px;color:#111;font-weight:400;;will-change:transform;-webkit-text-stroke:0.2px #111">0</div>
<div class="t" style="left:207px;top:850.0px;font-size:13px;color:#111;font-weight:400;;will-change:transform;-webkit-text-stroke:0.2px #111">0</div>
<div class="t" style="left:267px;top:850.0px;font-size:13px;color:#111;font-weight:400;letter-spacing:0.75px;;will-change:transform;-webkit-text-stroke:0.2px #111">Standard</div>
<div class="a" style="left:33px;top:864px;width:510px;height:16px;background:#f5f4f2"></div>
<div class="t" style="left:60px;top:866.0px;font-size:13px;color:#111;font-weight:400;letter-spacing:0.4px;will-change:transform;-webkit-text-stroke:0.2px #111">16</div>
<div class="t" style="left:127px;top:866.0px;font-size:13px;color:#111;font-weight:400;;will-change:transform;-webkit-text-stroke:0.2px #111">0</div>
<div class="t" style="left:207px;top:866.0px;font-size:13px;color:#111;font-weight:400;;will-change:transform;-webkit-text-stroke:0.2px #111">0</div>
<div class="t" style="left:267px;top:866.0px;font-size:13px;color:#111;font-weight:400;letter-spacing:0.75px;;will-change:transform;-webkit-text-stroke:0.2px #111">Standard</div>
<svg class="a" style="left:0;top:0" width="560" height="900"><defs><radialGradient id="lg" cx="0.4" cy="0.3" r="0.7"><stop offset="0" stop-color="#c8ffc8"/><stop offset="0.35" stop-color="#30e030"/><stop offset="1" stop-color="#10a010"/></radialGradient><radialGradient id="lb" cx="0.4" cy="0.3" r="0.7"><stop offset="0" stop-color="#8a9ab0"/><stop offset="0.3" stop-color="#1a2230"/><stop offset="1" stop-color="#000"/></radialGradient></defs><circle cx="44" cy="632" r="5.6" fill="url(#lg)" stroke="#2a8a2a" stroke-width="0.6"/><circle cx="44" cy="648" r="5.6" fill="url(#lg)" stroke="#2a8a2a" stroke-width="0.6"/><circle cx="44" cy="664" r="5.6" fill="url(#lg)" stroke="#2a8a2a" stroke-width="0.6"/><circle cx="44" cy="680" r="5.6" fill="url(#lb)"/><circle cx="44" cy="696" r="5.6" fill="url(#lb)"/><circle cx="44" cy="712" r="5.6" fill="url(#lb)"/><circle cx="44" cy="728" r="5.6" fill="url(#lb)"/><circle cx="44" cy="744" r="5.6" fill="url(#lb)"/><circle cx="44" cy="760" r="5.6" fill="url(#lb)"/><circle cx="44" cy="776" r="5.6" fill="url(#lb)"/><circle cx="44" cy="792" r="5.6" fill="url(#lb)"/><circle cx="44" cy="808" r="5.6" fill="url(#lb)"/><circle cx="44" cy="824" r="5.6" fill="url(#lb)"/><circle cx="44" cy="840" r="5.6" fill="url(#lb)"/><circle cx="44" cy="856" r="5.6" fill="url(#lb)"/><circle cx="44" cy="872" r="5.6" fill="url(#lb)"/></svg>
<div class="a" style="left:33px;top:882px;width:510px;height:15px;background:linear-gradient(#fdfdfc,#eceae6);border-top:1px solid #c8c4bf"></div>
<div class="a" style="left:47px;top:883px;width:1px;height:14px;background:#d4d0cb"></div>
<div class="a" style="left:529px;top:883px;width:1px;height:14px;background:#d4d0cb"></div>
<div class="a" style="left:376px;top:883px;width:153px;height:14px;background:#e2e0dc;border-left:1px solid #c8c4bf"></div>
<svg class="a" style="left:37px;top:885px" width="7" height="10"><path d="M6 1 L1 5 L6 9Z" fill="#555"/></svg>
<svg class="a" style="left:532px;top:885px" width="7" height="10"><path d="M1 1 L6 5 L1 9Z" fill="#555"/></svg>
<svg class="a" style="left:486px;top:165px" width="18" height="25" viewBox="0 0 18 25"><path d="M2.5 2.5 L2.5 20 L6.5 16 L9 21 L11.3 20.3 L9 15 L14 15 Z" fill="#fafafa" stroke="#000" stroke-width="1.4" stroke-linejoin="round"/></svg>
</body></html>
